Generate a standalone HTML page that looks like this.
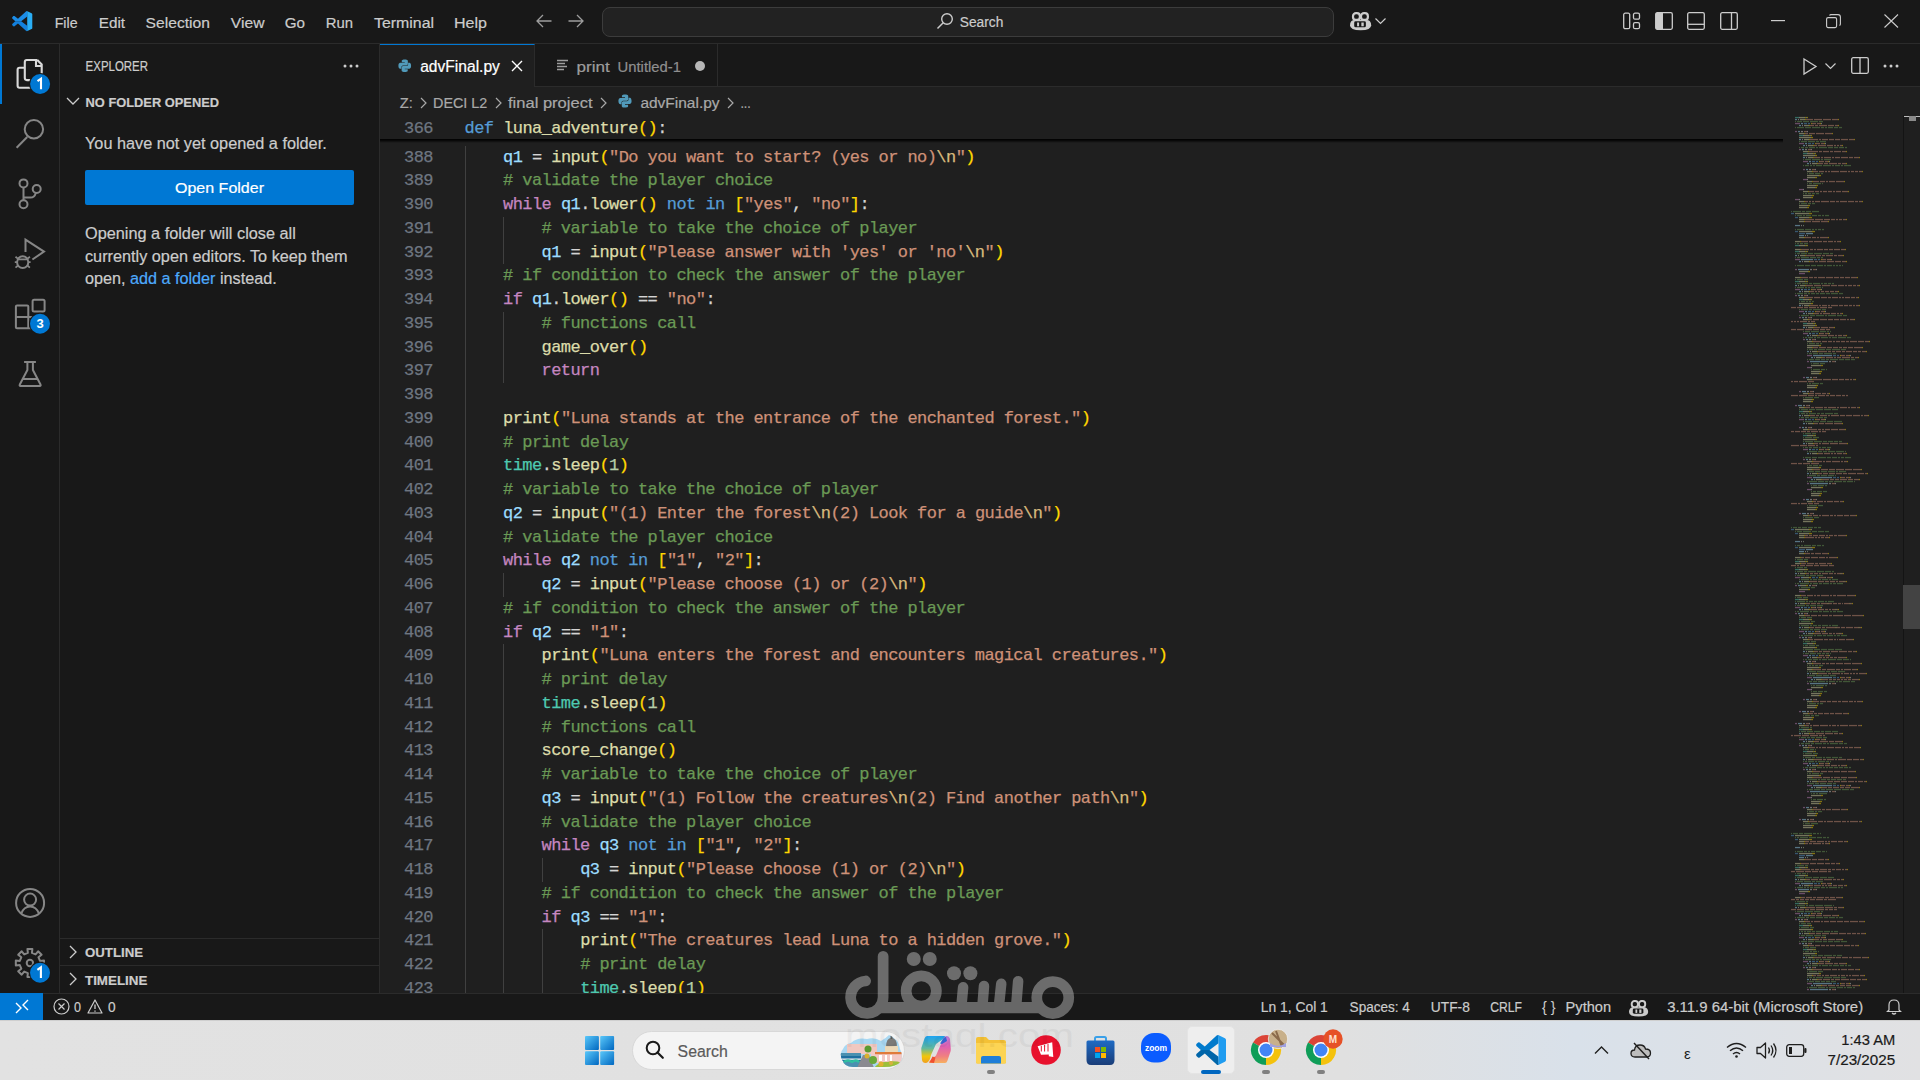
<!DOCTYPE html>
<html><head><meta charset="utf-8"><style>
*{margin:0;padding:0;box-sizing:border-box}
html,body{width:1920px;height:1080px;overflow:hidden;background:#181818;font-family:"Liberation Sans",sans-serif;color:#cccccc}
.a{position:absolute}
svg{position:absolute;overflow:visible}
#title{position:absolute;left:0;top:0;width:1920px;height:44px;background:#181818;border-bottom:1px solid #2b2b2b}
.menu{position:absolute;top:11px;font-size:16px;line-height:22px;color:#cccccc;white-space:nowrap}
#search{position:absolute;left:602px;top:7px;width:732px;height:30px;border:1px solid #3c3c3c;border-radius:8px;background:#222222}
#act{position:absolute;left:0;top:44px;width:60px;height:949px;background:#181818;border-right:1px solid #2b2b2b}
#side{position:absolute;left:60px;top:44px;width:320px;height:949px;background:#181818;border-right:1px solid #2b2b2b}
.badge{position:absolute;width:20px;height:20px;border-radius:10px;background:#0078d4;color:#fff;font-size:12px;font-weight:bold;line-height:20px;text-align:center}
#tabs{position:absolute;left:380px;top:44px;width:1540px;height:43px;background:#181818;border-bottom:1px solid #2b2b2b}
#crumbs{position:absolute;left:380px;top:87px;width:1540px;height:28px;background:#1f1f1f}
#editor{position:absolute;left:380px;top:115px;width:1540px;height:878px;background:#1f1f1f;overflow:hidden}
#editor .ln, #sticky .ln{position:absolute;left:0;width:53px;text-align:right;color:#6e7681;font-family:"Liberation Mono",monospace;font-size:17px;line-height:23.75px;height:23.75px;white-space:pre;letter-spacing:-0.575px;-webkit-text-stroke:0.25px currentColor}
#editor .cl, #sticky .cl{position:absolute;left:84.6px;font-family:"Liberation Mono",monospace;font-size:17px;line-height:23.75px;height:23.75px;white-space:pre;letter-spacing:-0.575px;-webkit-text-stroke:0.25px currentColor}
.ig{position:absolute;width:1px;background:#404040}
#sticky{position:absolute;left:380px;top:115px;width:1403px;height:24px;background:#1f1f1f}
#stsh{position:absolute;left:380px;top:139px;width:1403px;height:4px;background:linear-gradient(#000 0%,rgba(0,0,0,0.75) 35%,rgba(0,0,0,0) 100%)}
#status{position:absolute;left:0;top:993px;width:1920px;height:27px;background:#181818;border-top:1px solid #2b2b2b;font-size:14.5px;color:#cccccc}
#status .t{position:absolute;top:4px;line-height:19px;white-space:nowrap}
#taskbar{position:absolute;left:0;top:1020px;width:1920px;height:60px;background:linear-gradient(90deg,#e2e2e2 0%,#e0e0e0 70%,#d9e1ea 82%,#e1e1e3 100%)}
</style></head>
<body>
<div id="title"><svg width="20.3" height="20.3" style="left:11.9px;top:10.7px" viewBox="0 0 100 100">
<path d="M16.24 50 L1.35 63.58 Q-0.5 66.5 1.35 69.74 L6.85 74.74 Q9.5 76.8 12.17 75 L29.34 61.96 L68.75 97.92 Q72 100.5 75.86 99.13 L75 72.7 L45.1 50 Z" fill="#1380dc"/>
<path d="M75.86 0.87 Q72 -0.5 68.75 2.08 L29.34 38.04 L12.17 25.01 Q9.5 23.2 6.85 25.25 L1.35 30.25 Q-0.5 33.5 1.35 36.41 L16.24 50 L45.1 50 L75 27.3 Z" fill="#1b8de8"/>
<path d="M75.86 0.87 L96.46 10.8 Q100 12.5 100 16.4 V83.6 Q100 87.5 96.46 89.2 L75.86 99.13 Q75 99.5 75 97 V3 Q75 0.5 75.86 0.87 Z" fill="#2aaef5"/>
</svg><svg width="16" height="14" style="left:536px;top:14px" viewBox="0 0 16 14"><path d="M7 1 L1 7 L7 13 M1 7 H15.5" stroke="#9d9d9d" stroke-width="1.3" fill="none"/></svg>
<svg width="16" height="14" style="left:568px;top:14px" viewBox="0 0 16 14"><path d="M9 1 L15 7 L9 13 M15 7 H0.5" stroke="#9d9d9d" stroke-width="1.3" fill="none"/></svg><div id="search"></div><svg width="18" height="18" style="left:936px;top:12px" viewBox="0 0 18 18"><circle cx="11" cy="7" r="5.3" stroke="#cccccc" stroke-width="1.4" fill="none"/><path d="M7.2 10.8 L1.5 16.5" stroke="#cccccc" stroke-width="1.5"/></svg>
<svg width="21.2" height="18.6" style="left:1350px;top:11.5px" viewBox="0 0 21.2 18.6">
<rect x="3" y="1.2" width="6.9" height="6.7" rx="3" stroke="#cccccc" stroke-width="2.2" fill="none"/>
<rect x="11" y="1.2" width="6.9" height="6.7" rx="3" stroke="#cccccc" stroke-width="2.2" fill="none"/>
<path d="M0 13.3 Q0 8.1 5 8.1 H16.2 Q21.2 8.1 21.2 13.3 Q21.2 18.3 10.6 18.3 Q0 18.3 0 13.3 Z" fill="#cccccc"/>
<rect x="4.2" y="9.3" width="11.7" height="5.9" rx="1.5" fill="#181818"/>
<rect x="7.1" y="10.5" width="2" height="3.8" fill="#cccccc"/><rect x="11.35" y="10.5" width="2.4" height="3.8" fill="#cccccc"/></svg>
<svg width="11" height="6" style="left:1375px;top:18px" viewBox="0 0 11 6"><path d="M0.5 0.5 L5.5 5.5 L10.5 0.5" stroke="#cccccc" stroke-width="1.2" fill="none"/></svg><svg width="18" height="18" style="left:1623px;top:12px" viewBox="0 0 18 18">
<rect x="0.7" y="1.2" width="6" height="15.5" rx="1.5" stroke="#cccccc" stroke-width="1.3" fill="none"/>
<rect x="10.5" y="1.2" width="6" height="6" rx="1.5" stroke="#cccccc" stroke-width="1.3" fill="none"/>
<rect x="10.5" y="10.7" width="6" height="6" rx="1.5" stroke="#cccccc" stroke-width="1.3" fill="none"/></svg>
<svg width="18" height="18" style="left:1655px;top:12px" viewBox="0 0 18 18">
<rect x="0.7" y="0.7" width="16.6" height="16.6" rx="1.5" stroke="#cccccc" stroke-width="1.3" fill="none"/><rect x="1" y="1" width="7" height="16" fill="#cccccc"/></svg>
<svg width="18" height="18" style="left:1687px;top:12px" viewBox="0 0 18 18">
<rect x="0.7" y="0.7" width="16.6" height="16.6" rx="1.5" stroke="#cccccc" stroke-width="1.3" fill="none"/><path d="M1 12.3 H17" stroke="#cccccc" stroke-width="1.3"/></svg>
<svg width="18" height="18" style="left:1720px;top:12px" viewBox="0 0 18 18">
<rect x="0.7" y="0.7" width="16.6" height="16.6" rx="1.5" stroke="#cccccc" stroke-width="1.3" fill="none"/><path d="M11.5 1 V17" stroke="#cccccc" stroke-width="1.3"/></svg><svg width="14" height="2" style="left:1771px;top:20px"><rect width="14" height="1.2" fill="#cccccc"/></svg>
<svg width="15" height="14" style="left:1826px;top:14px" viewBox="0 0 15 14"><rect x="0.6" y="3.6" width="10" height="10" rx="1.5" stroke="#cccccc" stroke-width="1.1" fill="none"/><path d="M3.5 1.5 Q4 0.6 5 0.6 H12 Q14.4 0.6 14.4 3 V10 Q14.4 11 13.5 11.5" stroke="#cccccc" stroke-width="1.1" fill="none"/></svg>
<svg width="15" height="14" style="left:1884px;top:14px" viewBox="0 0 15 14"><path d="M0.5 0.5 L14 13.5 M14 0.5 L0.5 13.5" stroke="#cccccc" stroke-width="1.1"/></svg></div><div id="act"><div class="a" style="left:0;top:0;width:2px;height:60px;background:#0078d4"></div></div><svg width="60" height="1080" style="left:0;top:0" viewBox="0 0 60 1080" fill="none" stroke-linecap="butt"><path d="M37.3 60 H26.8 Q24.8 60 24.8 62 V78.1 Q24.8 80.1 26.8 80.1 H33 M37.3 60 L41.7 64.4 V76 M36 60 V66 H41.7 M24.8 67.8 H19.6 Q17.6 67.8 17.6 69.8 V85.7 Q17.6 87.7 19.6 87.7 H31" stroke="#d9d9d9" stroke-width="2.1"/><circle cx="40.1" cy="84" r="11" fill="#181818"/><circle cx="40.1" cy="84" r="10" fill="#0078d4"/><circle cx="33.9" cy="129.2" r="9.2" stroke="#868686" stroke-width="2"/><path d="M27.2 137 L16.6 147.7" stroke="#868686" stroke-width="2"/><circle cx="23.5" cy="183.4" r="4" stroke="#868686" stroke-width="2"/><circle cx="23.5" cy="204.2" r="4" stroke="#868686" stroke-width="2"/><circle cx="36.7" cy="189" r="4" stroke="#868686" stroke-width="2"/><path d="M23.5 187.4 V200.2 M35.8 192.9 Q34.5 197.5 30.5 197.5 H23.5" stroke="#868686" stroke-width="2"/><path d="M25.5 252 V239.7 L44 251.6 L32.4 259.5" stroke="#868686" stroke-width="2" stroke-linejoin="miter"/><ellipse cx="22.7" cy="262.2" rx="5.6" ry="5.9" stroke="#868686" stroke-width="2"/><path d="M14.8 262.2 H17 M28.4 262.2 H30.6 M15.5 256.8 L17.8 258.6 M29.9 256.8 L27.6 258.6 M15.5 267.6 L17.8 265.8 M29.9 267.6 L27.6 265.8 M17.2 259.3 H28.2" stroke="#868686" stroke-width="1.8"/><path d="M34 317 H28.3 V306.5 Q28.3 305.4 27.2 305.4 H17 Q15.9 305.4 15.9 306.5 V327.2 Q15.9 328.3 17 328.3 H33 M15.9 317 H28.3 V328.3" stroke="#868686" stroke-width="2"/><rect x="32.6" y="299.8" width="12" height="11.7" rx="1.5" stroke="#868686" stroke-width="2"/><circle cx="40" cy="323.7" r="11" fill="#181818"/><circle cx="40" cy="323.7" r="10" fill="#0078d4"/><path d="M24.1 362 H35.9 M27.4 362 V370 L19.8 384.5 Q19.2 386 20.5 386 H39.8 Q41.1 386 40.5 384.5 L32.9 370 V362 M22.8 379 H37.3" stroke="#868686" stroke-width="2" stroke-linejoin="round"/><circle cx="30.1" cy="902.9" r="14" stroke="#868686" stroke-width="2"/><circle cx="30.1" cy="899.6" r="6" stroke="#868686" stroke-width="2"/><path d="M21.3 913.5 Q24 906.5 30.1 906.5 Q36.2 906.5 38.9 913.5" stroke="#868686" stroke-width="2"/><path d="M27.42 948.92 L32.38 948.92 L31.95 952.91 L35.58 954.41 L38.10 951.29 L41.61 954.80 L38.49 957.32 L39.99 960.95 L43.98 960.52 L43.98 965.48 L39.99 965.05 L38.49 968.68 L41.61 971.20 L38.10 974.71 L35.58 971.59 L31.95 973.09 L32.38 977.08 L27.42 977.08 L27.85 973.09 L24.22 971.59 L21.70 974.71 L18.19 971.20 L21.31 968.68 L19.81 965.05 L15.82 965.48 L15.82 960.52 L19.81 960.95 L21.31 957.32 L18.19 954.80 L21.70 951.29 L24.22 954.41 L27.85 952.91 Z" stroke="#868686" stroke-width="2" stroke-linejoin="round"/><circle cx="29.9" cy="963" r="3.2" stroke="#868686" stroke-width="2"/><circle cx="40" cy="972.7" r="11" fill="#181818"/><circle cx="40" cy="972.7" r="10" fill="#0078d4"/><path d="M37.50 81.20 L41.00 78.70 V89.20" stroke="#ffffff" stroke-width="2.1" stroke-linejoin="miter"/><path d="M37.40 969.90 L40.90 967.40 V977.90" stroke="#ffffff" stroke-width="2.1" stroke-linejoin="miter"/><text x="40" y="328.3" font-family="Liberation Sans" font-size="13" font-weight="bold" fill="#ffffff" stroke="none" text-anchor="middle">3</text></svg><div id="side"><svg width="16" height="4" style="left:283px;top:20px" viewBox="0 0 16 4"><circle cx="2" cy="2" r="1.5" fill="#cccccc"/><circle cx="8" cy="2" r="1.5" fill="#cccccc"/><circle cx="14" cy="2" r="1.5" fill="#cccccc"/></svg><svg width="14" height="8" style="left:6px;top:53px" viewBox="0 0 14 8"><path d="M1 1 L7 7 L13 1" stroke="#cccccc" stroke-width="1.3" fill="none"/></svg><div class="a" style="left:25px;top:126px;width:269px;height:35px;background:#0078d4;border-radius:2px;color:#ffffff;font-size:16px;"></div><div class="a" style="left:0;top:894px;width:319px;height:1px;background:#2b2b2b"></div><div class="a" style="left:0;top:921px;width:319px;height:1px;background:#2b2b2b"></div><svg width="8" height="14" style="left:9px;top:901px" viewBox="0 0 8 14"><path d="M1 1 L7 7 L1 13" stroke="#cccccc" stroke-width="1.3" fill="none"/></svg><svg width="8" height="14" style="left:9px;top:928px" viewBox="0 0 8 14"><path d="M1 1 L7 7 L1 13" stroke="#cccccc" stroke-width="1.3" fill="none"/></svg></div><div id="tabs"><div class="a" style="left:0;top:0;width:155px;height:43px;background:#1f1f1f;border-top:1px solid #0078d4;border-right:1px solid #2b2b2b;height:44px"></div><svg width="13.5" height="13.5" style="left:18px;top:14.5px" viewBox="0 0 16 16">
<path d="M7.9 0.5 C4.3 0.5 4.5 2 4.5 2 V3.8 H8 V4.5 H3 C3 4.5 0.5 4.2 0.5 8 C0.5 11.8 2.7 11.6 2.7 11.6 H4 V9.8 C4 9.8 3.9 7.7 6.1 7.7 H9.7 C9.7 7.7 11.7 7.7 11.7 5.7 V2.4 C11.7 2.4 12 0.5 7.9 0.5 Z" fill="#519aba"/>
<path d="M8.1 15.5 C11.7 15.5 11.5 14 11.5 14 V12.2 H8 V11.5 H13 C13 11.5 15.5 11.8 15.5 8 C15.5 4.2 13.3 4.4 13.3 4.4 H12 V6.2 C12 6.2 12.1 8.3 9.9 8.3 H6.3 C6.3 8.3 4.3 8.3 4.3 10.3 V13.6 C4.3 13.6 4 15.5 8.1 15.5 Z" fill="#519aba"/>
</svg><svg width="12" height="12" style="left:131px;top:16px" viewBox="0 0 12 12"><path d="M1 1 L11 11 M11 1 L1 11" stroke="#ffffff" stroke-width="1.4"/></svg><div class="a" style="left:155px;top:0;width:183px;height:43px;border-right:1px solid #2b2b2b"></div><svg width="12" height="12" style="left:177px;top:15px" viewBox="0 0 12 12"><path d="M0 1.5 H11 M0 4.5 H8 M0 7.5 H10 M0 10.5 H7" stroke="#9d9d9d" stroke-width="1.3"/></svg><div class="a" style="left:315px;top:17px;width:10px;height:10px;border-radius:5px;background:#b7b7b7"></div><svg width="14" height="17" style="left:1423px;top:14px" viewBox="0 0 14 17"><path d="M1 1 L13 8.5 L1 16 Z" stroke="#cccccc" stroke-width="1.3" fill="none" stroke-linejoin="miter"/></svg>
<svg width="11" height="6" style="left:1445px;top:63px;top:19px" viewBox="0 0 11 6"><path d="M0.5 0.5 L5.5 5.5 L10.5 0.5" stroke="#cccccc" stroke-width="1.2" fill="none"/></svg>
<svg width="18" height="17" style="left:1471px;top:13px" viewBox="0 0 18 17"><rect x="0.7" y="0.7" width="16.6" height="15.6" rx="1.5" stroke="#cccccc" stroke-width="1.3" fill="none"/><path d="M9 1 V16" stroke="#cccccc" stroke-width="1.3"/></svg>
<svg width="16" height="4" style="left:1503px;top:20px" viewBox="0 0 16 4"><circle cx="2" cy="2" r="1.5" fill="#cccccc"/><circle cx="8" cy="2" r="1.5" fill="#cccccc"/><circle cx="14" cy="2" r="1.5" fill="#cccccc"/></svg></div><div id="crumbs"><svg width="7" height="12" style="left:39.6px;top:10px" viewBox="0 0 7 12"><path d="M1 1 L6 6 L1 11" stroke="#a9a9a9" stroke-width="1.2" fill="none"/></svg><svg width="7" height="12" style="left:114.6px;top:10px" viewBox="0 0 7 12"><path d="M1 1 L6 6 L1 11" stroke="#a9a9a9" stroke-width="1.2" fill="none"/></svg><svg width="7" height="12" style="left:219.8px;top:10px" viewBox="0 0 7 12"><path d="M1 1 L6 6 L1 11" stroke="#a9a9a9" stroke-width="1.2" fill="none"/></svg><svg width="14" height="14" style="left:238px;top:7px" viewBox="0 0 16 16">
<path d="M7.9 0.5 C4.3 0.5 4.5 2 4.5 2 V3.8 H8 V4.5 H3 C3 4.5 0.5 4.2 0.5 8 C0.5 11.8 2.7 11.6 2.7 11.6 H4 V9.8 C4 9.8 3.9 7.7 6.1 7.7 H9.7 C9.7 7.7 11.7 7.7 11.7 5.7 V2.4 C11.7 2.4 12 0.5 7.9 0.5 Z" fill="#519aba"/>
<path d="M8.1 15.5 C11.7 15.5 11.5 14 11.5 14 V12.2 H8 V11.5 H13 C13 11.5 15.5 11.8 15.5 8 C15.5 4.2 13.3 4.4 13.3 4.4 H12 V6.2 C12 6.2 12.1 8.3 9.9 8.3 H6.3 C6.3 8.3 4.3 8.3 4.3 10.3 V13.6 C4.3 13.6 4 15.5 8.1 15.5 Z" fill="#519aba"/>
</svg><svg width="7" height="12" style="left:347px;top:10px" viewBox="0 0 7 12"><path d="M1 1 L6 6 L1 11" stroke="#a9a9a9" stroke-width="1.2" fill="none"/></svg></div><div id="editor"><div class="ig" style="left:84.6px;top:30.50px;height:855.00px"></div>
<div class="ig" style="left:123.1px;top:101.75px;height:47.50px"></div>
<div class="ig" style="left:123.1px;top:196.75px;height:71.25px"></div>
<div class="ig" style="left:123.1px;top:458.00px;height:23.75px"></div>
<div class="ig" style="left:123.1px;top:529.25px;height:356.25px"></div>
<div class="ig" style="left:161.6px;top:743.00px;height:23.75px"></div>
<div class="ig" style="left:161.6px;top:814.25px;height:71.25px"></div>
<div class="ln" style="top:30.50px">388</div>
<div class="cl" style="top:30.50px"><span style="color:#d4d4d4;-webkit-text-stroke:0.25px #d4d4d4">    </span><span style="color:#9cdcfe;-webkit-text-stroke:0.25px #9cdcfe">q1</span><span style="color:#d4d4d4;-webkit-text-stroke:0.25px #d4d4d4"> = </span><span style="color:#dcdcaa;-webkit-text-stroke:0.25px #dcdcaa">input</span><span style="color:#ffd700;-webkit-text-stroke:0.25px #ffd700">(</span><span style="color:#ce9178;-webkit-text-stroke:0.25px #ce9178">"Do you want to start? (yes or no)</span><span style="color:#d7ba7d;-webkit-text-stroke:0.25px #d7ba7d">\n</span><span style="color:#ce9178;-webkit-text-stroke:0.25px #ce9178">"</span><span style="color:#ffd700;-webkit-text-stroke:0.25px #ffd700">)</span></div>
<div class="ln" style="top:54.25px">389</div>
<div class="cl" style="top:54.25px"><span style="color:#d4d4d4;-webkit-text-stroke:0.25px #d4d4d4">    </span><span style="color:#6a9955;-webkit-text-stroke:0.25px #6a9955"># validate the player choice</span></div>
<div class="ln" style="top:78.00px">390</div>
<div class="cl" style="top:78.00px"><span style="color:#d4d4d4;-webkit-text-stroke:0.25px #d4d4d4">    </span><span style="color:#c586c0;-webkit-text-stroke:0.25px #c586c0">while</span><span style="color:#d4d4d4;-webkit-text-stroke:0.25px #d4d4d4"> </span><span style="color:#9cdcfe;-webkit-text-stroke:0.25px #9cdcfe">q1</span><span style="color:#d4d4d4;-webkit-text-stroke:0.25px #d4d4d4">.</span><span style="color:#dcdcaa;-webkit-text-stroke:0.25px #dcdcaa">lower</span><span style="color:#ffd700;-webkit-text-stroke:0.25px #ffd700">(</span><span style="color:#ffd700;-webkit-text-stroke:0.25px #ffd700">)</span><span style="color:#d4d4d4;-webkit-text-stroke:0.25px #d4d4d4"> </span><span style="color:#569cd6;-webkit-text-stroke:0.25px #569cd6">not</span><span style="color:#d4d4d4;-webkit-text-stroke:0.25px #d4d4d4"> </span><span style="color:#569cd6;-webkit-text-stroke:0.25px #569cd6">in</span><span style="color:#d4d4d4;-webkit-text-stroke:0.25px #d4d4d4"> </span><span style="color:#ffd700;-webkit-text-stroke:0.25px #ffd700">[</span><span style="color:#ce9178;-webkit-text-stroke:0.25px #ce9178">"yes"</span><span style="color:#d4d4d4;-webkit-text-stroke:0.25px #d4d4d4">, </span><span style="color:#ce9178;-webkit-text-stroke:0.25px #ce9178">"no"</span><span style="color:#ffd700;-webkit-text-stroke:0.25px #ffd700">]</span><span style="color:#d4d4d4;-webkit-text-stroke:0.25px #d4d4d4">:</span></div>
<div class="ln" style="top:101.75px">391</div>
<div class="cl" style="top:101.75px"><span style="color:#d4d4d4;-webkit-text-stroke:0.25px #d4d4d4">        </span><span style="color:#6a9955;-webkit-text-stroke:0.25px #6a9955"># variable to take the choice of player</span></div>
<div class="ln" style="top:125.50px">392</div>
<div class="cl" style="top:125.50px"><span style="color:#d4d4d4;-webkit-text-stroke:0.25px #d4d4d4">        </span><span style="color:#9cdcfe;-webkit-text-stroke:0.25px #9cdcfe">q1</span><span style="color:#d4d4d4;-webkit-text-stroke:0.25px #d4d4d4"> = </span><span style="color:#dcdcaa;-webkit-text-stroke:0.25px #dcdcaa">input</span><span style="color:#ffd700;-webkit-text-stroke:0.25px #ffd700">(</span><span style="color:#ce9178;-webkit-text-stroke:0.25px #ce9178">"Please answer with 'yes' or 'no'</span><span style="color:#d7ba7d;-webkit-text-stroke:0.25px #d7ba7d">\n</span><span style="color:#ce9178;-webkit-text-stroke:0.25px #ce9178">"</span><span style="color:#ffd700;-webkit-text-stroke:0.25px #ffd700">)</span></div>
<div class="ln" style="top:149.25px">393</div>
<div class="cl" style="top:149.25px"><span style="color:#d4d4d4;-webkit-text-stroke:0.25px #d4d4d4">    </span><span style="color:#6a9955;-webkit-text-stroke:0.25px #6a9955"># if condition to check the answer of the player</span></div>
<div class="ln" style="top:173.00px">394</div>
<div class="cl" style="top:173.00px"><span style="color:#d4d4d4;-webkit-text-stroke:0.25px #d4d4d4">    </span><span style="color:#c586c0;-webkit-text-stroke:0.25px #c586c0">if</span><span style="color:#d4d4d4;-webkit-text-stroke:0.25px #d4d4d4"> </span><span style="color:#9cdcfe;-webkit-text-stroke:0.25px #9cdcfe">q1</span><span style="color:#d4d4d4;-webkit-text-stroke:0.25px #d4d4d4">.</span><span style="color:#dcdcaa;-webkit-text-stroke:0.25px #dcdcaa">lower</span><span style="color:#ffd700;-webkit-text-stroke:0.25px #ffd700">(</span><span style="color:#ffd700;-webkit-text-stroke:0.25px #ffd700">)</span><span style="color:#d4d4d4;-webkit-text-stroke:0.25px #d4d4d4"> == </span><span style="color:#ce9178;-webkit-text-stroke:0.25px #ce9178">"no"</span><span style="color:#d4d4d4;-webkit-text-stroke:0.25px #d4d4d4">:</span></div>
<div class="ln" style="top:196.75px">395</div>
<div class="cl" style="top:196.75px"><span style="color:#d4d4d4;-webkit-text-stroke:0.25px #d4d4d4">        </span><span style="color:#6a9955;-webkit-text-stroke:0.25px #6a9955"># functions call</span></div>
<div class="ln" style="top:220.50px">396</div>
<div class="cl" style="top:220.50px"><span style="color:#d4d4d4;-webkit-text-stroke:0.25px #d4d4d4">        </span><span style="color:#dcdcaa;-webkit-text-stroke:0.25px #dcdcaa">game_over</span><span style="color:#ffd700;-webkit-text-stroke:0.25px #ffd700">(</span><span style="color:#ffd700;-webkit-text-stroke:0.25px #ffd700">)</span></div>
<div class="ln" style="top:244.25px">397</div>
<div class="cl" style="top:244.25px"><span style="color:#d4d4d4;-webkit-text-stroke:0.25px #d4d4d4">        </span><span style="color:#c586c0;-webkit-text-stroke:0.25px #c586c0">return</span></div>
<div class="ln" style="top:268.00px">398</div>
<div class="cl" style="top:268.00px"></div>
<div class="ln" style="top:291.75px">399</div>
<div class="cl" style="top:291.75px"><span style="color:#d4d4d4;-webkit-text-stroke:0.25px #d4d4d4">    </span><span style="color:#dcdcaa;-webkit-text-stroke:0.25px #dcdcaa">print</span><span style="color:#ffd700;-webkit-text-stroke:0.25px #ffd700">(</span><span style="color:#ce9178;-webkit-text-stroke:0.25px #ce9178">"Luna stands at the entrance of the enchanted forest."</span><span style="color:#ffd700;-webkit-text-stroke:0.25px #ffd700">)</span></div>
<div class="ln" style="top:315.50px">400</div>
<div class="cl" style="top:315.50px"><span style="color:#d4d4d4;-webkit-text-stroke:0.25px #d4d4d4">    </span><span style="color:#6a9955;-webkit-text-stroke:0.25px #6a9955"># print delay</span></div>
<div class="ln" style="top:339.25px">401</div>
<div class="cl" style="top:339.25px"><span style="color:#d4d4d4;-webkit-text-stroke:0.25px #d4d4d4">    </span><span style="color:#4ec9b0;-webkit-text-stroke:0.25px #4ec9b0">time</span><span style="color:#d4d4d4;-webkit-text-stroke:0.25px #d4d4d4">.</span><span style="color:#dcdcaa;-webkit-text-stroke:0.25px #dcdcaa">sleep</span><span style="color:#ffd700;-webkit-text-stroke:0.25px #ffd700">(</span><span style="color:#b5cea8;-webkit-text-stroke:0.25px #b5cea8">1</span><span style="color:#ffd700;-webkit-text-stroke:0.25px #ffd700">)</span></div>
<div class="ln" style="top:363.00px">402</div>
<div class="cl" style="top:363.00px"><span style="color:#d4d4d4;-webkit-text-stroke:0.25px #d4d4d4">    </span><span style="color:#6a9955;-webkit-text-stroke:0.25px #6a9955"># variable to take the choice of player</span></div>
<div class="ln" style="top:386.75px">403</div>
<div class="cl" style="top:386.75px"><span style="color:#d4d4d4;-webkit-text-stroke:0.25px #d4d4d4">    </span><span style="color:#9cdcfe;-webkit-text-stroke:0.25px #9cdcfe">q2</span><span style="color:#d4d4d4;-webkit-text-stroke:0.25px #d4d4d4"> = </span><span style="color:#dcdcaa;-webkit-text-stroke:0.25px #dcdcaa">input</span><span style="color:#ffd700;-webkit-text-stroke:0.25px #ffd700">(</span><span style="color:#ce9178;-webkit-text-stroke:0.25px #ce9178">"(1) Enter the forest</span><span style="color:#d7ba7d;-webkit-text-stroke:0.25px #d7ba7d">\n</span><span style="color:#ce9178;-webkit-text-stroke:0.25px #ce9178">(2) Look for a guide</span><span style="color:#d7ba7d;-webkit-text-stroke:0.25px #d7ba7d">\n</span><span style="color:#ce9178;-webkit-text-stroke:0.25px #ce9178">"</span><span style="color:#ffd700;-webkit-text-stroke:0.25px #ffd700">)</span></div>
<div class="ln" style="top:410.50px">404</div>
<div class="cl" style="top:410.50px"><span style="color:#d4d4d4;-webkit-text-stroke:0.25px #d4d4d4">    </span><span style="color:#6a9955;-webkit-text-stroke:0.25px #6a9955"># validate the player choice</span></div>
<div class="ln" style="top:434.25px">405</div>
<div class="cl" style="top:434.25px"><span style="color:#d4d4d4;-webkit-text-stroke:0.25px #d4d4d4">    </span><span style="color:#c586c0;-webkit-text-stroke:0.25px #c586c0">while</span><span style="color:#d4d4d4;-webkit-text-stroke:0.25px #d4d4d4"> </span><span style="color:#9cdcfe;-webkit-text-stroke:0.25px #9cdcfe">q2</span><span style="color:#d4d4d4;-webkit-text-stroke:0.25px #d4d4d4"> </span><span style="color:#569cd6;-webkit-text-stroke:0.25px #569cd6">not</span><span style="color:#d4d4d4;-webkit-text-stroke:0.25px #d4d4d4"> </span><span style="color:#569cd6;-webkit-text-stroke:0.25px #569cd6">in</span><span style="color:#d4d4d4;-webkit-text-stroke:0.25px #d4d4d4"> </span><span style="color:#ffd700;-webkit-text-stroke:0.25px #ffd700">[</span><span style="color:#ce9178;-webkit-text-stroke:0.25px #ce9178">"1"</span><span style="color:#d4d4d4;-webkit-text-stroke:0.25px #d4d4d4">, </span><span style="color:#ce9178;-webkit-text-stroke:0.25px #ce9178">"2"</span><span style="color:#ffd700;-webkit-text-stroke:0.25px #ffd700">]</span><span style="color:#d4d4d4;-webkit-text-stroke:0.25px #d4d4d4">:</span></div>
<div class="ln" style="top:458.00px">406</div>
<div class="cl" style="top:458.00px"><span style="color:#d4d4d4;-webkit-text-stroke:0.25px #d4d4d4">        </span><span style="color:#9cdcfe;-webkit-text-stroke:0.25px #9cdcfe">q2</span><span style="color:#d4d4d4;-webkit-text-stroke:0.25px #d4d4d4"> = </span><span style="color:#dcdcaa;-webkit-text-stroke:0.25px #dcdcaa">input</span><span style="color:#ffd700;-webkit-text-stroke:0.25px #ffd700">(</span><span style="color:#ce9178;-webkit-text-stroke:0.25px #ce9178">"Please choose (1) or (2)</span><span style="color:#d7ba7d;-webkit-text-stroke:0.25px #d7ba7d">\n</span><span style="color:#ce9178;-webkit-text-stroke:0.25px #ce9178">"</span><span style="color:#ffd700;-webkit-text-stroke:0.25px #ffd700">)</span></div>
<div class="ln" style="top:481.75px">407</div>
<div class="cl" style="top:481.75px"><span style="color:#d4d4d4;-webkit-text-stroke:0.25px #d4d4d4">    </span><span style="color:#6a9955;-webkit-text-stroke:0.25px #6a9955"># if condition to check the answer of the player</span></div>
<div class="ln" style="top:505.50px">408</div>
<div class="cl" style="top:505.50px"><span style="color:#d4d4d4;-webkit-text-stroke:0.25px #d4d4d4">    </span><span style="color:#c586c0;-webkit-text-stroke:0.25px #c586c0">if</span><span style="color:#d4d4d4;-webkit-text-stroke:0.25px #d4d4d4"> </span><span style="color:#9cdcfe;-webkit-text-stroke:0.25px #9cdcfe">q2</span><span style="color:#d4d4d4;-webkit-text-stroke:0.25px #d4d4d4"> == </span><span style="color:#ce9178;-webkit-text-stroke:0.25px #ce9178">"1"</span><span style="color:#d4d4d4;-webkit-text-stroke:0.25px #d4d4d4">:</span></div>
<div class="ln" style="top:529.25px">409</div>
<div class="cl" style="top:529.25px"><span style="color:#d4d4d4;-webkit-text-stroke:0.25px #d4d4d4">        </span><span style="color:#dcdcaa;-webkit-text-stroke:0.25px #dcdcaa">print</span><span style="color:#ffd700;-webkit-text-stroke:0.25px #ffd700">(</span><span style="color:#ce9178;-webkit-text-stroke:0.25px #ce9178">"Luna enters the forest and encounters magical creatures."</span><span style="color:#ffd700;-webkit-text-stroke:0.25px #ffd700">)</span></div>
<div class="ln" style="top:553.00px">410</div>
<div class="cl" style="top:553.00px"><span style="color:#d4d4d4;-webkit-text-stroke:0.25px #d4d4d4">        </span><span style="color:#6a9955;-webkit-text-stroke:0.25px #6a9955"># print delay</span></div>
<div class="ln" style="top:576.75px">411</div>
<div class="cl" style="top:576.75px"><span style="color:#d4d4d4;-webkit-text-stroke:0.25px #d4d4d4">        </span><span style="color:#4ec9b0;-webkit-text-stroke:0.25px #4ec9b0">time</span><span style="color:#d4d4d4;-webkit-text-stroke:0.25px #d4d4d4">.</span><span style="color:#dcdcaa;-webkit-text-stroke:0.25px #dcdcaa">sleep</span><span style="color:#ffd700;-webkit-text-stroke:0.25px #ffd700">(</span><span style="color:#b5cea8;-webkit-text-stroke:0.25px #b5cea8">1</span><span style="color:#ffd700;-webkit-text-stroke:0.25px #ffd700">)</span></div>
<div class="ln" style="top:600.50px">412</div>
<div class="cl" style="top:600.50px"><span style="color:#d4d4d4;-webkit-text-stroke:0.25px #d4d4d4">        </span><span style="color:#6a9955;-webkit-text-stroke:0.25px #6a9955"># functions call</span></div>
<div class="ln" style="top:624.25px">413</div>
<div class="cl" style="top:624.25px"><span style="color:#d4d4d4;-webkit-text-stroke:0.25px #d4d4d4">        </span><span style="color:#dcdcaa;-webkit-text-stroke:0.25px #dcdcaa">score_change</span><span style="color:#ffd700;-webkit-text-stroke:0.25px #ffd700">(</span><span style="color:#ffd700;-webkit-text-stroke:0.25px #ffd700">)</span></div>
<div class="ln" style="top:648.00px">414</div>
<div class="cl" style="top:648.00px"><span style="color:#d4d4d4;-webkit-text-stroke:0.25px #d4d4d4">        </span><span style="color:#6a9955;-webkit-text-stroke:0.25px #6a9955"># variable to take the choice of player</span></div>
<div class="ln" style="top:671.75px">415</div>
<div class="cl" style="top:671.75px"><span style="color:#d4d4d4;-webkit-text-stroke:0.25px #d4d4d4">        </span><span style="color:#9cdcfe;-webkit-text-stroke:0.25px #9cdcfe">q3</span><span style="color:#d4d4d4;-webkit-text-stroke:0.25px #d4d4d4"> = </span><span style="color:#dcdcaa;-webkit-text-stroke:0.25px #dcdcaa">input</span><span style="color:#ffd700;-webkit-text-stroke:0.25px #ffd700">(</span><span style="color:#ce9178;-webkit-text-stroke:0.25px #ce9178">"(1) Follow the creatures</span><span style="color:#d7ba7d;-webkit-text-stroke:0.25px #d7ba7d">\n</span><span style="color:#ce9178;-webkit-text-stroke:0.25px #ce9178">(2) Find another path</span><span style="color:#d7ba7d;-webkit-text-stroke:0.25px #d7ba7d">\n</span><span style="color:#ce9178;-webkit-text-stroke:0.25px #ce9178">"</span><span style="color:#ffd700;-webkit-text-stroke:0.25px #ffd700">)</span></div>
<div class="ln" style="top:695.50px">416</div>
<div class="cl" style="top:695.50px"><span style="color:#d4d4d4;-webkit-text-stroke:0.25px #d4d4d4">        </span><span style="color:#6a9955;-webkit-text-stroke:0.25px #6a9955"># validate the player choice</span></div>
<div class="ln" style="top:719.25px">417</div>
<div class="cl" style="top:719.25px"><span style="color:#d4d4d4;-webkit-text-stroke:0.25px #d4d4d4">        </span><span style="color:#c586c0;-webkit-text-stroke:0.25px #c586c0">while</span><span style="color:#d4d4d4;-webkit-text-stroke:0.25px #d4d4d4"> </span><span style="color:#9cdcfe;-webkit-text-stroke:0.25px #9cdcfe">q3</span><span style="color:#d4d4d4;-webkit-text-stroke:0.25px #d4d4d4"> </span><span style="color:#569cd6;-webkit-text-stroke:0.25px #569cd6">not</span><span style="color:#d4d4d4;-webkit-text-stroke:0.25px #d4d4d4"> </span><span style="color:#569cd6;-webkit-text-stroke:0.25px #569cd6">in</span><span style="color:#d4d4d4;-webkit-text-stroke:0.25px #d4d4d4"> </span><span style="color:#ffd700;-webkit-text-stroke:0.25px #ffd700">[</span><span style="color:#ce9178;-webkit-text-stroke:0.25px #ce9178">"1"</span><span style="color:#d4d4d4;-webkit-text-stroke:0.25px #d4d4d4">, </span><span style="color:#ce9178;-webkit-text-stroke:0.25px #ce9178">"2"</span><span style="color:#ffd700;-webkit-text-stroke:0.25px #ffd700">]</span><span style="color:#d4d4d4;-webkit-text-stroke:0.25px #d4d4d4">:</span></div>
<div class="ln" style="top:743.00px">418</div>
<div class="cl" style="top:743.00px"><span style="color:#d4d4d4;-webkit-text-stroke:0.25px #d4d4d4">            </span><span style="color:#9cdcfe;-webkit-text-stroke:0.25px #9cdcfe">q3</span><span style="color:#d4d4d4;-webkit-text-stroke:0.25px #d4d4d4"> = </span><span style="color:#dcdcaa;-webkit-text-stroke:0.25px #dcdcaa">input</span><span style="color:#ffd700;-webkit-text-stroke:0.25px #ffd700">(</span><span style="color:#ce9178;-webkit-text-stroke:0.25px #ce9178">"Please choose (1) or (2)</span><span style="color:#d7ba7d;-webkit-text-stroke:0.25px #d7ba7d">\n</span><span style="color:#ce9178;-webkit-text-stroke:0.25px #ce9178">"</span><span style="color:#ffd700;-webkit-text-stroke:0.25px #ffd700">)</span></div>
<div class="ln" style="top:766.75px">419</div>
<div class="cl" style="top:766.75px"><span style="color:#d4d4d4;-webkit-text-stroke:0.25px #d4d4d4">        </span><span style="color:#6a9955;-webkit-text-stroke:0.25px #6a9955"># if condition to check the answer of the player</span></div>
<div class="ln" style="top:790.50px">420</div>
<div class="cl" style="top:790.50px"><span style="color:#d4d4d4;-webkit-text-stroke:0.25px #d4d4d4">        </span><span style="color:#c586c0;-webkit-text-stroke:0.25px #c586c0">if</span><span style="color:#d4d4d4;-webkit-text-stroke:0.25px #d4d4d4"> </span><span style="color:#9cdcfe;-webkit-text-stroke:0.25px #9cdcfe">q3</span><span style="color:#d4d4d4;-webkit-text-stroke:0.25px #d4d4d4"> == </span><span style="color:#ce9178;-webkit-text-stroke:0.25px #ce9178">"1"</span><span style="color:#d4d4d4;-webkit-text-stroke:0.25px #d4d4d4">:</span></div>
<div class="ln" style="top:814.25px">421</div>
<div class="cl" style="top:814.25px"><span style="color:#d4d4d4;-webkit-text-stroke:0.25px #d4d4d4">            </span><span style="color:#dcdcaa;-webkit-text-stroke:0.25px #dcdcaa">print</span><span style="color:#ffd700;-webkit-text-stroke:0.25px #ffd700">(</span><span style="color:#ce9178;-webkit-text-stroke:0.25px #ce9178">"The creatures lead Luna to a hidden grove."</span><span style="color:#ffd700;-webkit-text-stroke:0.25px #ffd700">)</span></div>
<div class="ln" style="top:838.00px">422</div>
<div class="cl" style="top:838.00px"><span style="color:#d4d4d4;-webkit-text-stroke:0.25px #d4d4d4">            </span><span style="color:#6a9955;-webkit-text-stroke:0.25px #6a9955"># print delay</span></div>
<div class="ln" style="top:861.75px">423</div>
<div class="cl" style="top:861.75px"><span style="color:#d4d4d4;-webkit-text-stroke:0.25px #d4d4d4">            </span><span style="color:#4ec9b0;-webkit-text-stroke:0.25px #4ec9b0">time</span><span style="color:#d4d4d4;-webkit-text-stroke:0.25px #d4d4d4">.</span><span style="color:#dcdcaa;-webkit-text-stroke:0.25px #dcdcaa">sleep</span><span style="color:#ffd700;-webkit-text-stroke:0.25px #ffd700">(</span><span style="color:#b5cea8;-webkit-text-stroke:0.25px #b5cea8">1</span><span style="color:#ffd700;-webkit-text-stroke:0.25px #ffd700">)</span></div></div><div id="stsh"></div><div id="sticky"><div class="ln" style="top:1.5px">366</div><div class="cl" style="top:1.5px"><span style="color:#569cd6;-webkit-text-stroke:0.25px #569cd6">def</span><span style="color:#d4d4d4;-webkit-text-stroke:0.25px #d4d4d4"> </span><span style="color:#dcdcaa;-webkit-text-stroke:0.25px #dcdcaa">luna_adventure</span><span style="color:#ffd700;-webkit-text-stroke:0.25px #ffd700">(</span><span style="color:#ffd700;-webkit-text-stroke:0.25px #ffd700">)</span><span style="color:#d4d4d4;-webkit-text-stroke:0.25px #d4d4d4">:</span></div></div><svg class="mm" width="1920" height="1080" style="left:0;top:0" viewBox="0 0 1920 1080"><g opacity="0.45"><rect x="1795" y="116.9" width="4" height="1.3" fill="#4ec9b0"/><rect x="1799" y="116.9" width="1" height="1.3" fill="#d4d4d4"/><rect x="1800" y="116.9" width="5" height="1.3" fill="#dcdcaa"/><rect x="1805" y="116.9" width="1" height="1.3" fill="#ffd700"/><rect x="1806" y="116.9" width="1" height="1.3" fill="#b5cea8"/><rect x="1807" y="116.9" width="1" height="1.3" fill="#ffd700"/><rect x="1795" y="118.9" width="2" height="1.3" fill="#9cdcfe"/><rect x="1798" y="118.9" width="1" height="1.3" fill="#d4d4d4"/><rect x="1800" y="118.9" width="5" height="1.3" fill="#dcdcaa"/><rect x="1805" y="118.9" width="1" height="1.3" fill="#ffd700"/><rect x="1806" y="118.9" width="7" height="1.3" fill="#ce9178"/><rect x="1814" y="118.9" width="8" height="1.3" fill="#ce9178"/><rect x="1823" y="118.9" width="8" height="1.3" fill="#ce9178"/><rect x="1832" y="118.9" width="6" height="1.3" fill="#ce9178"/><rect x="1838" y="118.9" width="1" height="1.3" fill="#ffd700"/><rect x="1795" y="120.9" width="1" height="1.3" fill="#6a9955"/><rect x="1797" y="120.9" width="5" height="1.3" fill="#6a9955"/><rect x="1803" y="120.9" width="6" height="1.3" fill="#6a9955"/><rect x="1810" y="120.9" width="8" height="1.3" fill="#6a9955"/><rect x="1819" y="120.9" width="4" height="1.3" fill="#6a9955"/><rect x="1795" y="122.9" width="5" height="1.3" fill="#c586c0"/><rect x="1801" y="122.9" width="2" height="1.3" fill="#9cdcfe"/><rect x="1804" y="122.9" width="3" height="1.3" fill="#569cd6"/><rect x="1808" y="122.9" width="2" height="1.3" fill="#569cd6"/><rect x="1811" y="122.9" width="1" height="1.3" fill="#ffd700"/><rect x="1812" y="122.9" width="4" height="1.3" fill="#ce9178"/><rect x="1817" y="122.9" width="3" height="1.3" fill="#ce9178"/><rect x="1820" y="122.9" width="1" height="1.3" fill="#ffd700"/><rect x="1821" y="122.9" width="1" height="1.3" fill="#d4d4d4"/><rect x="1799" y="124.9" width="2" height="1.3" fill="#9cdcfe"/><rect x="1802" y="124.9" width="1" height="1.3" fill="#d4d4d4"/><rect x="1804" y="124.9" width="5" height="1.3" fill="#dcdcaa"/><rect x="1809" y="124.9" width="1" height="1.3" fill="#ffd700"/><rect x="1810" y="124.9" width="4" height="1.3" fill="#ce9178"/><rect x="1815" y="124.9" width="3" height="1.3" fill="#ce9178"/><rect x="1819" y="124.9" width="8" height="1.3" fill="#ce9178"/><rect x="1828" y="124.9" width="6" height="1.3" fill="#ce9178"/><rect x="1835" y="124.9" width="3" height="1.3" fill="#ce9178"/><rect x="1838" y="124.9" width="1" height="1.3" fill="#ffd700"/><rect x="1795" y="126.9" width="1" height="1.3" fill="#6a9955"/><rect x="1797" y="126.9" width="7" height="1.3" fill="#6a9955"/><rect x="1805" y="126.9" width="6" height="1.3" fill="#6a9955"/><rect x="1812" y="126.9" width="8" height="1.3" fill="#6a9955"/><rect x="1821" y="126.9" width="3" height="1.3" fill="#6a9955"/><rect x="1825" y="126.9" width="2" height="1.3" fill="#6a9955"/><rect x="1828" y="126.9" width="5" height="1.3" fill="#6a9955"/><rect x="1834" y="126.9" width="4" height="1.3" fill="#6a9955"/><rect x="1839" y="126.9" width="3" height="1.3" fill="#6a9955"/><rect x="1795" y="130.9" width="2" height="1.3" fill="#c586c0"/><rect x="1798" y="130.9" width="2" height="1.3" fill="#9cdcfe"/><rect x="1801" y="130.9" width="2" height="1.3" fill="#d4d4d4"/><rect x="1804" y="130.9" width="3" height="1.3" fill="#ce9178"/><rect x="1807" y="130.9" width="1" height="1.3" fill="#d4d4d4"/><rect x="1799" y="132.9" width="5" height="1.3" fill="#dcdcaa"/><rect x="1804" y="132.9" width="1" height="1.3" fill="#ffd700"/><rect x="1805" y="132.9" width="3" height="1.3" fill="#ce9178"/><rect x="1809" y="132.9" width="6" height="1.3" fill="#ce9178"/><rect x="1816" y="132.9" width="8" height="1.3" fill="#ce9178"/><rect x="1825" y="132.9" width="7" height="1.3" fill="#ce9178"/><rect x="1832" y="132.9" width="1" height="1.3" fill="#ffd700"/><rect x="1799" y="134.9" width="4" height="1.3" fill="#4ec9b0"/><rect x="1803" y="134.9" width="1" height="1.3" fill="#d4d4d4"/><rect x="1804" y="134.9" width="5" height="1.3" fill="#dcdcaa"/><rect x="1809" y="134.9" width="1" height="1.3" fill="#ffd700"/><rect x="1810" y="134.9" width="1" height="1.3" fill="#b5cea8"/><rect x="1811" y="134.9" width="1" height="1.3" fill="#ffd700"/><rect x="1799" y="136.9" width="12" height="1.3" fill="#dcdcaa"/><rect x="1811" y="136.9" width="2" height="1.3" fill="#ffd700"/><rect x="1799" y="138.9" width="2" height="1.3" fill="#9cdcfe"/><rect x="1802" y="138.9" width="1" height="1.3" fill="#d4d4d4"/><rect x="1804" y="138.9" width="5" height="1.3" fill="#dcdcaa"/><rect x="1809" y="138.9" width="1" height="1.3" fill="#ffd700"/><rect x="1810" y="138.9" width="8" height="1.3" fill="#ce9178"/><rect x="1819" y="138.9" width="2" height="1.3" fill="#ce9178"/><rect x="1822" y="138.9" width="6" height="1.3" fill="#ce9178"/><rect x="1829" y="138.9" width="5" height="1.3" fill="#ce9178"/><rect x="1835" y="138.9" width="5" height="1.3" fill="#ce9178"/><rect x="1841" y="138.9" width="7" height="1.3" fill="#ce9178"/><rect x="1849" y="138.9" width="5" height="1.3" fill="#ce9178"/><rect x="1854" y="138.9" width="1" height="1.3" fill="#ffd700"/><rect x="1799" y="140.9" width="1" height="1.3" fill="#6a9955"/><rect x="1801" y="140.9" width="6" height="1.3" fill="#6a9955"/><rect x="1808" y="140.9" width="7" height="1.3" fill="#6a9955"/><rect x="1816" y="140.9" width="3" height="1.3" fill="#6a9955"/><rect x="1820" y="140.9" width="6" height="1.3" fill="#6a9955"/><rect x="1799" y="142.9" width="5" height="1.3" fill="#c586c0"/><rect x="1805" y="142.9" width="2" height="1.3" fill="#9cdcfe"/><rect x="1808" y="142.9" width="3" height="1.3" fill="#569cd6"/><rect x="1812" y="142.9" width="2" height="1.3" fill="#569cd6"/><rect x="1815" y="142.9" width="1" height="1.3" fill="#ffd700"/><rect x="1816" y="142.9" width="4" height="1.3" fill="#ce9178"/><rect x="1821" y="142.9" width="3" height="1.3" fill="#ce9178"/><rect x="1824" y="142.9" width="1" height="1.3" fill="#ffd700"/><rect x="1825" y="142.9" width="1" height="1.3" fill="#d4d4d4"/><rect x="1803" y="144.9" width="2" height="1.3" fill="#9cdcfe"/><rect x="1806" y="144.9" width="1" height="1.3" fill="#d4d4d4"/><rect x="1808" y="144.9" width="5" height="1.3" fill="#dcdcaa"/><rect x="1813" y="144.9" width="1" height="1.3" fill="#ffd700"/><rect x="1814" y="144.9" width="3" height="1.3" fill="#ce9178"/><rect x="1818" y="144.9" width="8" height="1.3" fill="#ce9178"/><rect x="1827" y="144.9" width="6" height="1.3" fill="#ce9178"/><rect x="1834" y="144.9" width="2" height="1.3" fill="#ce9178"/><rect x="1837" y="144.9" width="2" height="1.3" fill="#ce9178"/><rect x="1840" y="144.9" width="2" height="1.3" fill="#ce9178"/><rect x="1842" y="144.9" width="1" height="1.3" fill="#ffd700"/><rect x="1799" y="146.9" width="1" height="1.3" fill="#6a9955"/><rect x="1801" y="146.9" width="3" height="1.3" fill="#6a9955"/><rect x="1805" y="146.9" width="3" height="1.3" fill="#6a9955"/><rect x="1809" y="146.9" width="6" height="1.3" fill="#6a9955"/><rect x="1816" y="146.9" width="2" height="1.3" fill="#6a9955"/><rect x="1819" y="146.9" width="8" height="1.3" fill="#6a9955"/><rect x="1828" y="146.9" width="5" height="1.3" fill="#6a9955"/><rect x="1834" y="146.9" width="4" height="1.3" fill="#6a9955"/><rect x="1839" y="146.9" width="5" height="1.3" fill="#6a9955"/><rect x="1845" y="146.9" width="2" height="1.3" fill="#6a9955"/><rect x="1799" y="148.9" width="2" height="1.3" fill="#c586c0"/><rect x="1802" y="148.9" width="2" height="1.3" fill="#9cdcfe"/><rect x="1805" y="148.9" width="2" height="1.3" fill="#d4d4d4"/><rect x="1808" y="148.9" width="3" height="1.3" fill="#ce9178"/><rect x="1811" y="148.9" width="1" height="1.3" fill="#d4d4d4"/><rect x="1803" y="150.9" width="5" height="1.3" fill="#dcdcaa"/><rect x="1808" y="150.9" width="1" height="1.3" fill="#ffd700"/><rect x="1809" y="150.9" width="9" height="1.3" fill="#ce9178"/><rect x="1819" y="150.9" width="3" height="1.3" fill="#ce9178"/><rect x="1823" y="150.9" width="6" height="1.3" fill="#ce9178"/><rect x="1830" y="150.9" width="3" height="1.3" fill="#ce9178"/><rect x="1834" y="150.9" width="7" height="1.3" fill="#ce9178"/><rect x="1842" y="150.9" width="4" height="1.3" fill="#ce9178"/><rect x="1846" y="150.9" width="1" height="1.3" fill="#ffd700"/><rect x="1803" y="152.9" width="4" height="1.3" fill="#4ec9b0"/><rect x="1807" y="152.9" width="1" height="1.3" fill="#d4d4d4"/><rect x="1808" y="152.9" width="5" height="1.3" fill="#dcdcaa"/><rect x="1813" y="152.9" width="1" height="1.3" fill="#ffd700"/><rect x="1814" y="152.9" width="1" height="1.3" fill="#b5cea8"/><rect x="1815" y="152.9" width="1" height="1.3" fill="#ffd700"/><rect x="1803" y="154.9" width="12" height="1.3" fill="#dcdcaa"/><rect x="1815" y="154.9" width="2" height="1.3" fill="#ffd700"/><rect x="1803" y="156.9" width="2" height="1.3" fill="#9cdcfe"/><rect x="1806" y="156.9" width="1" height="1.3" fill="#d4d4d4"/><rect x="1808" y="156.9" width="5" height="1.3" fill="#dcdcaa"/><rect x="1813" y="156.9" width="1" height="1.3" fill="#ffd700"/><rect x="1814" y="156.9" width="6" height="1.3" fill="#ce9178"/><rect x="1821" y="156.9" width="2" height="1.3" fill="#ce9178"/><rect x="1824" y="156.9" width="7" height="1.3" fill="#ce9178"/><rect x="1832" y="156.9" width="2" height="1.3" fill="#ce9178"/><rect x="1835" y="156.9" width="5" height="1.3" fill="#ce9178"/><rect x="1841" y="156.9" width="7" height="1.3" fill="#ce9178"/><rect x="1849" y="156.9" width="4" height="1.3" fill="#ce9178"/><rect x="1854" y="156.9" width="5" height="1.3" fill="#ce9178"/><rect x="1859" y="156.9" width="1" height="1.3" fill="#ffd700"/><rect x="1803" y="158.9" width="1" height="1.3" fill="#6a9955"/><rect x="1805" y="158.9" width="6" height="1.3" fill="#6a9955"/><rect x="1812" y="158.9" width="8" height="1.3" fill="#6a9955"/><rect x="1821" y="158.9" width="2" height="1.3" fill="#6a9955"/><rect x="1824" y="158.9" width="7" height="1.3" fill="#6a9955"/><rect x="1803" y="160.9" width="5" height="1.3" fill="#c586c0"/><rect x="1809" y="160.9" width="2" height="1.3" fill="#9cdcfe"/><rect x="1812" y="160.9" width="3" height="1.3" fill="#569cd6"/><rect x="1816" y="160.9" width="2" height="1.3" fill="#569cd6"/><rect x="1819" y="160.9" width="1" height="1.3" fill="#ffd700"/><rect x="1820" y="160.9" width="4" height="1.3" fill="#ce9178"/><rect x="1825" y="160.9" width="3" height="1.3" fill="#ce9178"/><rect x="1828" y="160.9" width="1" height="1.3" fill="#ffd700"/><rect x="1829" y="160.9" width="1" height="1.3" fill="#d4d4d4"/><rect x="1807" y="162.9" width="2" height="1.3" fill="#9cdcfe"/><rect x="1810" y="162.9" width="1" height="1.3" fill="#d4d4d4"/><rect x="1812" y="162.9" width="5" height="1.3" fill="#dcdcaa"/><rect x="1817" y="162.9" width="1" height="1.3" fill="#ffd700"/><rect x="1818" y="162.9" width="5" height="1.3" fill="#ce9178"/><rect x="1824" y="162.9" width="4" height="1.3" fill="#ce9178"/><rect x="1829" y="162.9" width="8" height="1.3" fill="#ce9178"/><rect x="1838" y="162.9" width="3" height="1.3" fill="#ce9178"/><rect x="1842" y="162.9" width="4" height="1.3" fill="#ce9178"/><rect x="1846" y="162.9" width="1" height="1.3" fill="#ffd700"/><rect x="1803" y="164.9" width="1" height="1.3" fill="#6a9955"/><rect x="1805" y="164.9" width="4" height="1.3" fill="#6a9955"/><rect x="1810" y="164.9" width="2" height="1.3" fill="#6a9955"/><rect x="1813" y="164.9" width="2" height="1.3" fill="#6a9955"/><rect x="1816" y="164.9" width="6" height="1.3" fill="#6a9955"/><rect x="1823" y="164.9" width="8" height="1.3" fill="#6a9955"/><rect x="1832" y="164.9" width="2" height="1.3" fill="#6a9955"/><rect x="1835" y="164.9" width="5" height="1.3" fill="#6a9955"/><rect x="1841" y="164.9" width="2" height="1.3" fill="#6a9955"/><rect x="1844" y="164.9" width="7" height="1.3" fill="#6a9955"/><rect x="1803" y="168.9" width="2" height="1.3" fill="#c586c0"/><rect x="1806" y="168.9" width="2" height="1.3" fill="#9cdcfe"/><rect x="1809" y="168.9" width="2" height="1.3" fill="#d4d4d4"/><rect x="1812" y="168.9" width="3" height="1.3" fill="#ce9178"/><rect x="1815" y="168.9" width="1" height="1.3" fill="#d4d4d4"/><rect x="1807" y="170.9" width="5" height="1.3" fill="#dcdcaa"/><rect x="1812" y="170.9" width="1" height="1.3" fill="#ffd700"/><rect x="1813" y="170.9" width="5" height="1.3" fill="#ce9178"/><rect x="1819" y="170.9" width="5" height="1.3" fill="#ce9178"/><rect x="1825" y="170.9" width="2" height="1.3" fill="#ce9178"/><rect x="1828" y="170.9" width="2" height="1.3" fill="#ce9178"/><rect x="1831" y="170.9" width="8" height="1.3" fill="#ce9178"/><rect x="1840" y="170.9" width="7" height="1.3" fill="#ce9178"/><rect x="1848" y="170.9" width="2" height="1.3" fill="#ce9178"/><rect x="1851" y="170.9" width="3" height="1.3" fill="#ce9178"/><rect x="1855" y="170.9" width="3" height="1.3" fill="#ce9178"/><rect x="1859" y="170.9" width="3" height="1.3" fill="#ce9178"/><rect x="1862" y="170.9" width="1" height="1.3" fill="#ffd700"/><rect x="1807" y="172.9" width="1" height="1.3" fill="#6a9955"/><rect x="1809" y="172.9" width="5" height="1.3" fill="#6a9955"/><rect x="1815" y="172.9" width="5" height="1.3" fill="#6a9955"/><rect x="1821" y="172.9" width="2" height="1.3" fill="#6a9955"/><rect x="1807" y="174.9" width="12" height="1.3" fill="#dcdcaa"/><rect x="1819" y="174.9" width="2" height="1.3" fill="#ffd700"/><rect x="1807" y="176.9" width="8" height="1.3" fill="#dcdcaa"/><rect x="1815" y="176.9" width="2" height="1.3" fill="#ffd700"/><rect x="1803" y="178.9" width="4" height="1.3" fill="#c586c0"/><rect x="1807" y="178.9" width="1" height="1.3" fill="#d4d4d4"/><rect x="1807" y="180.9" width="5" height="1.3" fill="#dcdcaa"/><rect x="1812" y="180.9" width="1" height="1.3" fill="#ffd700"/><rect x="1813" y="180.9" width="6" height="1.3" fill="#ce9178"/><rect x="1820" y="180.9" width="5" height="1.3" fill="#ce9178"/><rect x="1826" y="180.9" width="2" height="1.3" fill="#ce9178"/><rect x="1829" y="180.9" width="6" height="1.3" fill="#ce9178"/><rect x="1836" y="180.9" width="8" height="1.3" fill="#ce9178"/><rect x="1844" y="180.9" width="1" height="1.3" fill="#ffd700"/><rect x="1807" y="182.9" width="1" height="1.3" fill="#6a9955"/><rect x="1809" y="182.9" width="3" height="1.3" fill="#6a9955"/><rect x="1813" y="182.9" width="8" height="1.3" fill="#6a9955"/><rect x="1822" y="182.9" width="1" height="1.3" fill="#6a9955"/><rect x="1807" y="184.9" width="9" height="1.3" fill="#dcdcaa"/><rect x="1816" y="184.9" width="2" height="1.3" fill="#ffd700"/><rect x="1807" y="186.9" width="8" height="1.3" fill="#dcdcaa"/><rect x="1815" y="186.9" width="2" height="1.3" fill="#ffd700"/><rect x="1799" y="188.9" width="4" height="1.3" fill="#c586c0"/><rect x="1803" y="188.9" width="1" height="1.3" fill="#d4d4d4"/><rect x="1803" y="190.9" width="5" height="1.3" fill="#dcdcaa"/><rect x="1808" y="190.9" width="1" height="1.3" fill="#ffd700"/><rect x="1809" y="190.9" width="5" height="1.3" fill="#ce9178"/><rect x="1815" y="190.9" width="4" height="1.3" fill="#ce9178"/><rect x="1820" y="190.9" width="2" height="1.3" fill="#ce9178"/><rect x="1823" y="190.9" width="4" height="1.3" fill="#ce9178"/><rect x="1828" y="190.9" width="4" height="1.3" fill="#ce9178"/><rect x="1833" y="190.9" width="2" height="1.3" fill="#ce9178"/><rect x="1836" y="190.9" width="5" height="1.3" fill="#ce9178"/><rect x="1842" y="190.9" width="6" height="1.3" fill="#ce9178"/><rect x="1848" y="190.9" width="1" height="1.3" fill="#ffd700"/><rect x="1803" y="192.9" width="1" height="1.3" fill="#6a9955"/><rect x="1805" y="192.9" width="2" height="1.3" fill="#6a9955"/><rect x="1808" y="192.9" width="3" height="1.3" fill="#6a9955"/><rect x="1812" y="192.9" width="3" height="1.3" fill="#6a9955"/><rect x="1816" y="192.9" width="3" height="1.3" fill="#6a9955"/><rect x="1803" y="194.9" width="9" height="1.3" fill="#dcdcaa"/><rect x="1812" y="194.9" width="2" height="1.3" fill="#ffd700"/><rect x="1803" y="196.9" width="8" height="1.3" fill="#dcdcaa"/><rect x="1811" y="196.9" width="2" height="1.3" fill="#ffd700"/><rect x="1795" y="198.9" width="4" height="1.3" fill="#c586c0"/><rect x="1799" y="198.9" width="1" height="1.3" fill="#d4d4d4"/><rect x="1799" y="200.9" width="5" height="1.3" fill="#dcdcaa"/><rect x="1804" y="200.9" width="1" height="1.3" fill="#ffd700"/><rect x="1805" y="200.9" width="3" height="1.3" fill="#ce9178"/><rect x="1809" y="200.9" width="2" height="1.3" fill="#ce9178"/><rect x="1812" y="200.9" width="2" height="1.3" fill="#ce9178"/><rect x="1815" y="200.9" width="5" height="1.3" fill="#ce9178"/><rect x="1821" y="200.9" width="8" height="1.3" fill="#ce9178"/><rect x="1830" y="200.9" width="5" height="1.3" fill="#ce9178"/><rect x="1836" y="200.9" width="3" height="1.3" fill="#ce9178"/><rect x="1840" y="200.9" width="7" height="1.3" fill="#ce9178"/><rect x="1848" y="200.9" width="6" height="1.3" fill="#ce9178"/><rect x="1855" y="200.9" width="3" height="1.3" fill="#ce9178"/><rect x="1859" y="200.9" width="3" height="1.3" fill="#ce9178"/><rect x="1862" y="200.9" width="1" height="1.3" fill="#ffd700"/><rect x="1799" y="202.9" width="1" height="1.3" fill="#6a9955"/><rect x="1801" y="202.9" width="6" height="1.3" fill="#6a9955"/><rect x="1808" y="202.9" width="3" height="1.3" fill="#6a9955"/><rect x="1812" y="202.9" width="3" height="1.3" fill="#6a9955"/><rect x="1799" y="204.9" width="9" height="1.3" fill="#dcdcaa"/><rect x="1808" y="204.9" width="2" height="1.3" fill="#ffd700"/><rect x="1799" y="206.9" width="8" height="1.3" fill="#dcdcaa"/><rect x="1807" y="206.9" width="2" height="1.3" fill="#ffd700"/><rect x="1791" y="210.9" width="1" height="1.3" fill="#6a9955"/><rect x="1793" y="210.9" width="8" height="1.3" fill="#6a9955"/><rect x="1802" y="210.9" width="3" height="1.3" fill="#6a9955"/><rect x="1806" y="210.9" width="5" height="1.3" fill="#6a9955"/><rect x="1812" y="210.9" width="7" height="1.3" fill="#6a9955"/><rect x="1791" y="212.9" width="3" height="1.3" fill="#569cd6"/><rect x="1795" y="212.9" width="14" height="1.3" fill="#dcdcaa"/><rect x="1809" y="212.9" width="3" height="1.3" fill="#ffd700"/><rect x="1795" y="214.9" width="1" height="1.3" fill="#6a9955"/><rect x="1797" y="214.9" width="5" height="1.3" fill="#6a9955"/><rect x="1803" y="214.9" width="2" height="1.3" fill="#6a9955"/><rect x="1806" y="214.9" width="5" height="1.3" fill="#6a9955"/><rect x="1812" y="214.9" width="5" height="1.3" fill="#6a9955"/><rect x="1818" y="214.9" width="3" height="1.3" fill="#6a9955"/><rect x="1822" y="214.9" width="2" height="1.3" fill="#6a9955"/><rect x="1825" y="214.9" width="4" height="1.3" fill="#6a9955"/><rect x="1795" y="216.9" width="3" height="1.3" fill="#569cd6"/><rect x="1799" y="216.9" width="10" height="1.3" fill="#dcdcaa"/><rect x="1809" y="216.9" width="3" height="1.3" fill="#ffd700"/><rect x="1799" y="218.9" width="5" height="1.3" fill="#dcdcaa"/><rect x="1804" y="218.9" width="1" height="1.3" fill="#ffd700"/><rect x="1805" y="218.9" width="9" height="1.3" fill="#ce9178"/><rect x="1815" y="218.9" width="8" height="1.3" fill="#ce9178"/><rect x="1824" y="218.9" width="6" height="1.3" fill="#ce9178"/><rect x="1831" y="218.9" width="4" height="1.3" fill="#ce9178"/><rect x="1836" y="218.9" width="2" height="1.3" fill="#ce9178"/><rect x="1839" y="218.9" width="3" height="1.3" fill="#ce9178"/><rect x="1843" y="218.9" width="3" height="1.3" fill="#ce9178"/><rect x="1846" y="218.9" width="1" height="1.3" fill="#ffd700"/><rect x="1799" y="220.9" width="5" height="1.3" fill="#dcdcaa"/><rect x="1804" y="220.9" width="1" height="1.3" fill="#ffd700"/><rect x="1805" y="220.9" width="6" height="1.3" fill="#ce9178"/><rect x="1812" y="220.9" width="8" height="1.3" fill="#ce9178"/><rect x="1821" y="220.9" width="7" height="1.3" fill="#ce9178"/><rect x="1828" y="220.9" width="1" height="1.3" fill="#ffd700"/><rect x="1795" y="224.9" width="5" height="1.3" fill="#9cdcfe"/><rect x="1801" y="224.9" width="1" height="1.3" fill="#d4d4d4"/><rect x="1803" y="224.9" width="1" height="1.3" fill="#b5cea8"/><rect x="1795" y="228.9" width="1" height="1.3" fill="#6a9955"/><rect x="1797" y="228.9" width="7" height="1.3" fill="#6a9955"/><rect x="1805" y="228.9" width="6" height="1.3" fill="#6a9955"/><rect x="1812" y="228.9" width="2" height="1.3" fill="#6a9955"/><rect x="1815" y="228.9" width="2" height="1.3" fill="#6a9955"/><rect x="1818" y="228.9" width="3" height="1.3" fill="#6a9955"/><rect x="1822" y="228.9" width="2" height="1.3" fill="#6a9955"/><rect x="1795" y="230.9" width="3" height="1.3" fill="#569cd6"/><rect x="1799" y="230.9" width="13" height="1.3" fill="#dcdcaa"/><rect x="1812" y="230.9" width="3" height="1.3" fill="#ffd700"/><rect x="1799" y="232.9" width="6" height="1.3" fill="#569cd6"/><rect x="1806" y="232.9" width="7" height="1.3" fill="#9cdcfe"/><rect x="1799" y="234.9" width="5" height="1.3" fill="#9cdcfe"/><rect x="1805" y="234.9" width="1" height="1.3" fill="#d4d4d4"/><rect x="1807" y="234.9" width="1" height="1.3" fill="#b5cea8"/><rect x="1799" y="236.9" width="5" height="1.3" fill="#dcdcaa"/><rect x="1804" y="236.9" width="1" height="1.3" fill="#ffd700"/><rect x="1805" y="236.9" width="6" height="1.3" fill="#ce9178"/><rect x="1812" y="236.9" width="4" height="1.3" fill="#ce9178"/><rect x="1817" y="236.9" width="2" height="1.3" fill="#ce9178"/><rect x="1820" y="236.9" width="8" height="1.3" fill="#ce9178"/><rect x="1828" y="236.9" width="1" height="1.3" fill="#ffd700"/><rect x="1795" y="240.9" width="5" height="1.3" fill="#dcdcaa"/><rect x="1800" y="240.9" width="1" height="1.3" fill="#ffd700"/><rect x="1801" y="240.9" width="7" height="1.3" fill="#ce9178"/><rect x="1809" y="240.9" width="4" height="1.3" fill="#ce9178"/><rect x="1814" y="240.9" width="8" height="1.3" fill="#ce9178"/><rect x="1823" y="240.9" width="4" height="1.3" fill="#ce9178"/><rect x="1828" y="240.9" width="5" height="1.3" fill="#ce9178"/><rect x="1834" y="240.9" width="2" height="1.3" fill="#ce9178"/><rect x="1837" y="240.9" width="3" height="1.3" fill="#ce9178"/><rect x="1840" y="240.9" width="1" height="1.3" fill="#ffd700"/><rect x="1795" y="242.9" width="1" height="1.3" fill="#6a9955"/><rect x="1797" y="242.9" width="2" height="1.3" fill="#6a9955"/><rect x="1800" y="242.9" width="3" height="1.3" fill="#6a9955"/><rect x="1804" y="242.9" width="4" height="1.3" fill="#6a9955"/><rect x="1795" y="244.9" width="4" height="1.3" fill="#4ec9b0"/><rect x="1799" y="244.9" width="1" height="1.3" fill="#d4d4d4"/><rect x="1800" y="244.9" width="5" height="1.3" fill="#dcdcaa"/><rect x="1805" y="244.9" width="1" height="1.3" fill="#ffd700"/><rect x="1806" y="244.9" width="1" height="1.3" fill="#b5cea8"/><rect x="1807" y="244.9" width="1" height="1.3" fill="#ffd700"/><rect x="1795" y="248.9" width="5" height="1.3" fill="#dcdcaa"/><rect x="1800" y="248.9" width="1" height="1.3" fill="#ffd700"/><rect x="1801" y="248.9" width="8" height="1.3" fill="#ce9178"/><rect x="1810" y="248.9" width="3" height="1.3" fill="#ce9178"/><rect x="1814" y="248.9" width="2" height="1.3" fill="#ce9178"/><rect x="1817" y="248.9" width="6" height="1.3" fill="#ce9178"/><rect x="1824" y="248.9" width="4" height="1.3" fill="#ce9178"/><rect x="1829" y="248.9" width="4" height="1.3" fill="#ce9178"/><rect x="1834" y="248.9" width="6" height="1.3" fill="#ce9178"/><rect x="1841" y="248.9" width="4" height="1.3" fill="#ce9178"/><rect x="1845" y="248.9" width="1" height="1.3" fill="#ffd700"/><rect x="1795" y="250.9" width="4" height="1.3" fill="#4ec9b0"/><rect x="1799" y="250.9" width="1" height="1.3" fill="#d4d4d4"/><rect x="1800" y="250.9" width="5" height="1.3" fill="#dcdcaa"/><rect x="1805" y="250.9" width="1" height="1.3" fill="#ffd700"/><rect x="1806" y="250.9" width="1" height="1.3" fill="#b5cea8"/><rect x="1807" y="250.9" width="1" height="1.3" fill="#ffd700"/><rect x="1795" y="252.9" width="1" height="1.3" fill="#6a9955"/><rect x="1797" y="252.9" width="3" height="1.3" fill="#6a9955"/><rect x="1801" y="252.9" width="6" height="1.3" fill="#6a9955"/><rect x="1808" y="252.9" width="5" height="1.3" fill="#6a9955"/><rect x="1814" y="252.9" width="8" height="1.3" fill="#6a9955"/><rect x="1823" y="252.9" width="6" height="1.3" fill="#6a9955"/><rect x="1830" y="252.9" width="3" height="1.3" fill="#6a9955"/><rect x="1795" y="254.9" width="2" height="1.3" fill="#9cdcfe"/><rect x="1798" y="254.9" width="1" height="1.3" fill="#d4d4d4"/><rect x="1800" y="254.9" width="5" height="1.3" fill="#dcdcaa"/><rect x="1805" y="254.9" width="1" height="1.3" fill="#ffd700"/><rect x="1806" y="254.9" width="9" height="1.3" fill="#ce9178"/><rect x="1816" y="254.9" width="5" height="1.3" fill="#ce9178"/><rect x="1822" y="254.9" width="3" height="1.3" fill="#ce9178"/><rect x="1826" y="254.9" width="7" height="1.3" fill="#ce9178"/><rect x="1834" y="254.9" width="3" height="1.3" fill="#ce9178"/><rect x="1838" y="254.9" width="5" height="1.3" fill="#ce9178"/><rect x="1843" y="254.9" width="1" height="1.3" fill="#ffd700"/><rect x="1795" y="256.9" width="1" height="1.3" fill="#6a9955"/><rect x="1797" y="256.9" width="3" height="1.3" fill="#6a9955"/><rect x="1801" y="256.9" width="8" height="1.3" fill="#6a9955"/><rect x="1810" y="256.9" width="6" height="1.3" fill="#6a9955"/><rect x="1817" y="256.9" width="3" height="1.3" fill="#6a9955"/><rect x="1821" y="256.9" width="2" height="1.3" fill="#6a9955"/><rect x="1795" y="258.9" width="5" height="1.3" fill="#c586c0"/><rect x="1801" y="258.9" width="12" height="1.3" fill="#9cdcfe"/><rect x="1814" y="258.9" width="3" height="1.3" fill="#569cd6"/><rect x="1818" y="258.9" width="2" height="1.3" fill="#569cd6"/><rect x="1821" y="258.9" width="1" height="1.3" fill="#ffd700"/><rect x="1822" y="258.9" width="4" height="1.3" fill="#ce9178"/><rect x="1827" y="258.9" width="3" height="1.3" fill="#ce9178"/><rect x="1830" y="258.9" width="1" height="1.3" fill="#ffd700"/><rect x="1831" y="258.9" width="1" height="1.3" fill="#d4d4d4"/><rect x="1799" y="260.9" width="2" height="1.3" fill="#9cdcfe"/><rect x="1802" y="260.9" width="1" height="1.3" fill="#d4d4d4"/><rect x="1804" y="260.9" width="5" height="1.3" fill="#dcdcaa"/><rect x="1809" y="260.9" width="1" height="1.3" fill="#ffd700"/><rect x="1810" y="260.9" width="4" height="1.3" fill="#ce9178"/><rect x="1815" y="260.9" width="3" height="1.3" fill="#ce9178"/><rect x="1819" y="260.9" width="7" height="1.3" fill="#ce9178"/><rect x="1827" y="260.9" width="7" height="1.3" fill="#ce9178"/><rect x="1835" y="260.9" width="6" height="1.3" fill="#ce9178"/><rect x="1842" y="260.9" width="4" height="1.3" fill="#ce9178"/><rect x="1846" y="260.9" width="1" height="1.3" fill="#ffd700"/><rect x="1795" y="264.9" width="1" height="1.3" fill="#6a9955"/><rect x="1797" y="264.9" width="7" height="1.3" fill="#6a9955"/><rect x="1805" y="264.9" width="5" height="1.3" fill="#6a9955"/><rect x="1811" y="264.9" width="5" height="1.3" fill="#6a9955"/><rect x="1817" y="264.9" width="6" height="1.3" fill="#6a9955"/><rect x="1824" y="264.9" width="2" height="1.3" fill="#6a9955"/><rect x="1827" y="264.9" width="5" height="1.3" fill="#6a9955"/><rect x="1833" y="264.9" width="2" height="1.3" fill="#6a9955"/><rect x="1836" y="264.9" width="2" height="1.3" fill="#6a9955"/><rect x="1839" y="264.9" width="2" height="1.3" fill="#6a9955"/><rect x="1842" y="264.9" width="1" height="1.3" fill="#6a9955"/><rect x="1795" y="268.9" width="2" height="1.3" fill="#c586c0"/><rect x="1798" y="268.9" width="11" height="1.3" fill="#9cdcfe"/><rect x="1810" y="268.9" width="2" height="1.3" fill="#d4d4d4"/><rect x="1813" y="268.9" width="3" height="1.3" fill="#ce9178"/><rect x="1816" y="268.9" width="1" height="1.3" fill="#d4d4d4"/><rect x="1799" y="270.9" width="9" height="1.3" fill="#dcdcaa"/><rect x="1808" y="270.9" width="2" height="1.3" fill="#ffd700"/><rect x="1799" y="272.9" width="6" height="1.3" fill="#c586c0"/><rect x="1795" y="276.9" width="5" height="1.3" fill="#dcdcaa"/><rect x="1800" y="276.9" width="1" height="1.3" fill="#ffd700"/><rect x="1801" y="276.9" width="7" height="1.3" fill="#ce9178"/><rect x="1809" y="276.9" width="4" height="1.3" fill="#ce9178"/><rect x="1814" y="276.9" width="3" height="1.3" fill="#ce9178"/><rect x="1818" y="276.9" width="7" height="1.3" fill="#ce9178"/><rect x="1826" y="276.9" width="7" height="1.3" fill="#ce9178"/><rect x="1834" y="276.9" width="5" height="1.3" fill="#ce9178"/><rect x="1840" y="276.9" width="4" height="1.3" fill="#ce9178"/><rect x="1845" y="276.9" width="5" height="1.3" fill="#ce9178"/><rect x="1851" y="276.9" width="6" height="1.3" fill="#ce9178"/><rect x="1857" y="276.9" width="1" height="1.3" fill="#ffd700"/><rect x="1795" y="278.9" width="1" height="1.3" fill="#6a9955"/><rect x="1797" y="278.9" width="6" height="1.3" fill="#6a9955"/><rect x="1804" y="278.9" width="4" height="1.3" fill="#6a9955"/><rect x="1795" y="280.9" width="4" height="1.3" fill="#4ec9b0"/><rect x="1799" y="280.9" width="1" height="1.3" fill="#d4d4d4"/><rect x="1800" y="280.9" width="5" height="1.3" fill="#dcdcaa"/><rect x="1805" y="280.9" width="1" height="1.3" fill="#ffd700"/><rect x="1806" y="280.9" width="1" height="1.3" fill="#b5cea8"/><rect x="1807" y="280.9" width="1" height="1.3" fill="#ffd700"/><rect x="1795" y="282.9" width="1" height="1.3" fill="#6a9955"/><rect x="1797" y="282.9" width="4" height="1.3" fill="#6a9955"/><rect x="1802" y="282.9" width="6" height="1.3" fill="#6a9955"/><rect x="1809" y="282.9" width="3" height="1.3" fill="#6a9955"/><rect x="1813" y="282.9" width="7" height="1.3" fill="#6a9955"/><rect x="1821" y="282.9" width="2" height="1.3" fill="#6a9955"/><rect x="1824" y="282.9" width="3" height="1.3" fill="#6a9955"/><rect x="1828" y="282.9" width="3" height="1.3" fill="#6a9955"/><rect x="1832" y="282.9" width="2" height="1.3" fill="#6a9955"/><rect x="1795" y="284.9" width="2" height="1.3" fill="#9cdcfe"/><rect x="1798" y="284.9" width="1" height="1.3" fill="#d4d4d4"/><rect x="1800" y="284.9" width="5" height="1.3" fill="#dcdcaa"/><rect x="1805" y="284.9" width="1" height="1.3" fill="#ffd700"/><rect x="1806" y="284.9" width="7" height="1.3" fill="#ce9178"/><rect x="1814" y="284.9" width="7" height="1.3" fill="#ce9178"/><rect x="1822" y="284.9" width="8" height="1.3" fill="#ce9178"/><rect x="1831" y="284.9" width="6" height="1.3" fill="#ce9178"/><rect x="1838" y="284.9" width="6" height="1.3" fill="#ce9178"/><rect x="1845" y="284.9" width="2" height="1.3" fill="#ce9178"/><rect x="1848" y="284.9" width="4" height="1.3" fill="#ce9178"/><rect x="1853" y="284.9" width="3" height="1.3" fill="#ce9178"/><rect x="1857" y="284.9" width="2" height="1.3" fill="#ce9178"/><rect x="1859" y="284.9" width="1" height="1.3" fill="#ffd700"/><rect x="1795" y="286.9" width="1" height="1.3" fill="#6a9955"/><rect x="1797" y="286.9" width="7" height="1.3" fill="#6a9955"/><rect x="1805" y="286.9" width="2" height="1.3" fill="#6a9955"/><rect x="1808" y="286.9" width="2" height="1.3" fill="#6a9955"/><rect x="1811" y="286.9" width="4" height="1.3" fill="#6a9955"/><rect x="1816" y="286.9" width="5" height="1.3" fill="#6a9955"/><rect x="1822" y="286.9" width="1" height="1.3" fill="#6a9955"/><rect x="1795" y="288.9" width="5" height="1.3" fill="#c586c0"/><rect x="1801" y="288.9" width="2" height="1.3" fill="#9cdcfe"/><rect x="1804" y="288.9" width="3" height="1.3" fill="#569cd6"/><rect x="1808" y="288.9" width="2" height="1.3" fill="#569cd6"/><rect x="1811" y="288.9" width="1" height="1.3" fill="#ffd700"/><rect x="1812" y="288.9" width="4" height="1.3" fill="#ce9178"/><rect x="1817" y="288.9" width="3" height="1.3" fill="#ce9178"/><rect x="1820" y="288.9" width="1" height="1.3" fill="#ffd700"/><rect x="1821" y="288.9" width="1" height="1.3" fill="#d4d4d4"/><rect x="1799" y="290.9" width="2" height="1.3" fill="#9cdcfe"/><rect x="1802" y="290.9" width="1" height="1.3" fill="#d4d4d4"/><rect x="1804" y="290.9" width="5" height="1.3" fill="#dcdcaa"/><rect x="1809" y="290.9" width="1" height="1.3" fill="#ffd700"/><rect x="1810" y="290.9" width="4" height="1.3" fill="#ce9178"/><rect x="1815" y="290.9" width="2" height="1.3" fill="#ce9178"/><rect x="1818" y="290.9" width="2" height="1.3" fill="#ce9178"/><rect x="1821" y="290.9" width="3" height="1.3" fill="#ce9178"/><rect x="1825" y="290.9" width="4" height="1.3" fill="#ce9178"/><rect x="1830" y="290.9" width="4" height="1.3" fill="#ce9178"/><rect x="1835" y="290.9" width="3" height="1.3" fill="#ce9178"/><rect x="1838" y="290.9" width="1" height="1.3" fill="#ffd700"/><rect x="1795" y="292.9" width="1" height="1.3" fill="#6a9955"/><rect x="1797" y="292.9" width="6" height="1.3" fill="#6a9955"/><rect x="1804" y="292.9" width="3" height="1.3" fill="#6a9955"/><rect x="1808" y="292.9" width="2" height="1.3" fill="#6a9955"/><rect x="1811" y="292.9" width="4" height="1.3" fill="#6a9955"/><rect x="1816" y="292.9" width="3" height="1.3" fill="#6a9955"/><rect x="1820" y="292.9" width="5" height="1.3" fill="#6a9955"/><rect x="1826" y="292.9" width="4" height="1.3" fill="#6a9955"/><rect x="1831" y="292.9" width="7" height="1.3" fill="#6a9955"/><rect x="1839" y="292.9" width="4" height="1.3" fill="#6a9955"/><rect x="1795" y="294.9" width="2" height="1.3" fill="#c586c0"/><rect x="1798" y="294.9" width="2" height="1.3" fill="#9cdcfe"/><rect x="1801" y="294.9" width="2" height="1.3" fill="#d4d4d4"/><rect x="1804" y="294.9" width="3" height="1.3" fill="#ce9178"/><rect x="1807" y="294.9" width="1" height="1.3" fill="#d4d4d4"/><rect x="1799" y="296.9" width="5" height="1.3" fill="#dcdcaa"/><rect x="1804" y="296.9" width="1" height="1.3" fill="#ffd700"/><rect x="1805" y="296.9" width="8" height="1.3" fill="#ce9178"/><rect x="1814" y="296.9" width="6" height="1.3" fill="#ce9178"/><rect x="1821" y="296.9" width="6" height="1.3" fill="#ce9178"/><rect x="1828" y="296.9" width="3" height="1.3" fill="#ce9178"/><rect x="1832" y="296.9" width="6" height="1.3" fill="#ce9178"/><rect x="1839" y="296.9" width="2" height="1.3" fill="#ce9178"/><rect x="1842" y="296.9" width="2" height="1.3" fill="#ce9178"/><rect x="1845" y="296.9" width="5" height="1.3" fill="#ce9178"/><rect x="1851" y="296.9" width="4" height="1.3" fill="#ce9178"/><rect x="1856" y="296.9" width="2" height="1.3" fill="#ce9178"/><rect x="1858" y="296.9" width="1" height="1.3" fill="#ffd700"/><rect x="1799" y="298.9" width="4" height="1.3" fill="#4ec9b0"/><rect x="1803" y="298.9" width="1" height="1.3" fill="#d4d4d4"/><rect x="1804" y="298.9" width="5" height="1.3" fill="#dcdcaa"/><rect x="1809" y="298.9" width="1" height="1.3" fill="#ffd700"/><rect x="1810" y="298.9" width="1" height="1.3" fill="#b5cea8"/><rect x="1811" y="298.9" width="1" height="1.3" fill="#ffd700"/><rect x="1799" y="300.9" width="1" height="1.3" fill="#6a9955"/><rect x="1801" y="300.9" width="4" height="1.3" fill="#6a9955"/><rect x="1806" y="300.9" width="2" height="1.3" fill="#6a9955"/><rect x="1809" y="300.9" width="2" height="1.3" fill="#6a9955"/><rect x="1812" y="300.9" width="2" height="1.3" fill="#6a9955"/><rect x="1799" y="302.9" width="12" height="1.3" fill="#dcdcaa"/><rect x="1811" y="302.9" width="2" height="1.3" fill="#ffd700"/><rect x="1799" y="304.9" width="2" height="1.3" fill="#9cdcfe"/><rect x="1802" y="304.9" width="1" height="1.3" fill="#d4d4d4"/><rect x="1804" y="304.9" width="5" height="1.3" fill="#dcdcaa"/><rect x="1809" y="304.9" width="1" height="1.3" fill="#ffd700"/><rect x="1810" y="304.9" width="8" height="1.3" fill="#ce9178"/><rect x="1819" y="304.9" width="2" height="1.3" fill="#ce9178"/><rect x="1822" y="304.9" width="5" height="1.3" fill="#ce9178"/><rect x="1828" y="304.9" width="2" height="1.3" fill="#ce9178"/><rect x="1831" y="304.9" width="7" height="1.3" fill="#ce9178"/><rect x="1839" y="304.9" width="4" height="1.3" fill="#ce9178"/><rect x="1844" y="304.9" width="4" height="1.3" fill="#ce9178"/><rect x="1849" y="304.9" width="3" height="1.3" fill="#ce9178"/><rect x="1853" y="304.9" width="2" height="1.3" fill="#ce9178"/><rect x="1856" y="304.9" width="3" height="1.3" fill="#ce9178"/><rect x="1859" y="304.9" width="1" height="1.3" fill="#ffd700"/><rect x="1791" y="306.9" width="5" height="1.3" fill="#ce9178"/><rect x="1797" y="306.9" width="6" height="1.3" fill="#ce9178"/><rect x="1804" y="306.9" width="4" height="1.3" fill="#ce9178"/><rect x="1809" y="306.9" width="7" height="1.3" fill="#ce9178"/><rect x="1817" y="306.9" width="2" height="1.3" fill="#ce9178"/><rect x="1820" y="306.9" width="7" height="1.3" fill="#ce9178"/><rect x="1828" y="306.9" width="4" height="1.3" fill="#ce9178"/><rect x="1799" y="308.9" width="1" height="1.3" fill="#6a9955"/><rect x="1801" y="308.9" width="7" height="1.3" fill="#6a9955"/><rect x="1809" y="308.9" width="3" height="1.3" fill="#6a9955"/><rect x="1813" y="308.9" width="8" height="1.3" fill="#6a9955"/><rect x="1822" y="308.9" width="4" height="1.3" fill="#6a9955"/><rect x="1799" y="310.9" width="5" height="1.3" fill="#c586c0"/><rect x="1805" y="310.9" width="2" height="1.3" fill="#9cdcfe"/><rect x="1808" y="310.9" width="3" height="1.3" fill="#569cd6"/><rect x="1812" y="310.9" width="2" height="1.3" fill="#569cd6"/><rect x="1815" y="310.9" width="1" height="1.3" fill="#ffd700"/><rect x="1816" y="310.9" width="4" height="1.3" fill="#ce9178"/><rect x="1821" y="310.9" width="3" height="1.3" fill="#ce9178"/><rect x="1824" y="310.9" width="1" height="1.3" fill="#ffd700"/><rect x="1825" y="310.9" width="1" height="1.3" fill="#d4d4d4"/><rect x="1803" y="312.9" width="2" height="1.3" fill="#9cdcfe"/><rect x="1806" y="312.9" width="1" height="1.3" fill="#d4d4d4"/><rect x="1808" y="312.9" width="5" height="1.3" fill="#dcdcaa"/><rect x="1813" y="312.9" width="1" height="1.3" fill="#ffd700"/><rect x="1814" y="312.9" width="5" height="1.3" fill="#ce9178"/><rect x="1820" y="312.9" width="2" height="1.3" fill="#ce9178"/><rect x="1823" y="312.9" width="7" height="1.3" fill="#ce9178"/><rect x="1831" y="312.9" width="5" height="1.3" fill="#ce9178"/><rect x="1837" y="312.9" width="2" height="1.3" fill="#ce9178"/><rect x="1840" y="312.9" width="2" height="1.3" fill="#ce9178"/><rect x="1842" y="312.9" width="1" height="1.3" fill="#ffd700"/><rect x="1799" y="314.9" width="1" height="1.3" fill="#6a9955"/><rect x="1801" y="314.9" width="8" height="1.3" fill="#6a9955"/><rect x="1810" y="314.9" width="5" height="1.3" fill="#6a9955"/><rect x="1816" y="314.9" width="8" height="1.3" fill="#6a9955"/><rect x="1825" y="314.9" width="2" height="1.3" fill="#6a9955"/><rect x="1828" y="314.9" width="8" height="1.3" fill="#6a9955"/><rect x="1837" y="314.9" width="5" height="1.3" fill="#6a9955"/><rect x="1843" y="314.9" width="4" height="1.3" fill="#6a9955"/><rect x="1799" y="316.9" width="2" height="1.3" fill="#c586c0"/><rect x="1802" y="316.9" width="2" height="1.3" fill="#9cdcfe"/><rect x="1805" y="316.9" width="2" height="1.3" fill="#d4d4d4"/><rect x="1808" y="316.9" width="3" height="1.3" fill="#ce9178"/><rect x="1811" y="316.9" width="1" height="1.3" fill="#d4d4d4"/><rect x="1803" y="318.9" width="5" height="1.3" fill="#dcdcaa"/><rect x="1808" y="318.9" width="1" height="1.3" fill="#ffd700"/><rect x="1809" y="318.9" width="3" height="1.3" fill="#ce9178"/><rect x="1813" y="318.9" width="6" height="1.3" fill="#ce9178"/><rect x="1820" y="318.9" width="7" height="1.3" fill="#ce9178"/><rect x="1828" y="318.9" width="5" height="1.3" fill="#ce9178"/><rect x="1834" y="318.9" width="5" height="1.3" fill="#ce9178"/><rect x="1840" y="318.9" width="6" height="1.3" fill="#ce9178"/><rect x="1847" y="318.9" width="2" height="1.3" fill="#ce9178"/><rect x="1850" y="318.9" width="4" height="1.3" fill="#ce9178"/><rect x="1854" y="318.9" width="1" height="1.3" fill="#ffd700"/><rect x="1791" y="320.9" width="2" height="1.3" fill="#ce9178"/><rect x="1794" y="320.9" width="2" height="1.3" fill="#ce9178"/><rect x="1797" y="320.9" width="2" height="1.3" fill="#ce9178"/><rect x="1800" y="320.9" width="7" height="1.3" fill="#ce9178"/><rect x="1808" y="320.9" width="2" height="1.3" fill="#ce9178"/><rect x="1811" y="320.9" width="4" height="1.3" fill="#ce9178"/><rect x="1803" y="322.9" width="4" height="1.3" fill="#4ec9b0"/><rect x="1807" y="322.9" width="1" height="1.3" fill="#d4d4d4"/><rect x="1808" y="322.9" width="5" height="1.3" fill="#dcdcaa"/><rect x="1813" y="322.9" width="1" height="1.3" fill="#ffd700"/><rect x="1814" y="322.9" width="1" height="1.3" fill="#b5cea8"/><rect x="1815" y="322.9" width="1" height="1.3" fill="#ffd700"/><rect x="1803" y="324.9" width="12" height="1.3" fill="#dcdcaa"/><rect x="1815" y="324.9" width="2" height="1.3" fill="#ffd700"/><rect x="1803" y="326.9" width="2" height="1.3" fill="#9cdcfe"/><rect x="1806" y="326.9" width="1" height="1.3" fill="#d4d4d4"/><rect x="1808" y="326.9" width="5" height="1.3" fill="#dcdcaa"/><rect x="1813" y="326.9" width="1" height="1.3" fill="#ffd700"/><rect x="1814" y="326.9" width="6" height="1.3" fill="#ce9178"/><rect x="1821" y="326.9" width="7" height="1.3" fill="#ce9178"/><rect x="1829" y="326.9" width="5" height="1.3" fill="#ce9178"/><rect x="1834" y="326.9" width="1" height="1.3" fill="#ffd700"/><rect x="1791" y="328.9" width="5" height="1.3" fill="#ce9178"/><rect x="1797" y="328.9" width="7" height="1.3" fill="#ce9178"/><rect x="1805" y="328.9" width="7" height="1.3" fill="#ce9178"/><rect x="1813" y="328.9" width="6" height="1.3" fill="#ce9178"/><rect x="1820" y="328.9" width="5" height="1.3" fill="#ce9178"/><rect x="1826" y="328.9" width="4" height="1.3" fill="#ce9178"/><rect x="1803" y="330.9" width="1" height="1.3" fill="#6a9955"/><rect x="1805" y="330.9" width="5" height="1.3" fill="#6a9955"/><rect x="1811" y="330.9" width="8" height="1.3" fill="#6a9955"/><rect x="1820" y="330.9" width="6" height="1.3" fill="#6a9955"/><rect x="1827" y="330.9" width="2" height="1.3" fill="#6a9955"/><rect x="1830" y="330.9" width="1" height="1.3" fill="#6a9955"/><rect x="1803" y="332.9" width="5" height="1.3" fill="#c586c0"/><rect x="1809" y="332.9" width="2" height="1.3" fill="#9cdcfe"/><rect x="1812" y="332.9" width="3" height="1.3" fill="#569cd6"/><rect x="1816" y="332.9" width="2" height="1.3" fill="#569cd6"/><rect x="1819" y="332.9" width="1" height="1.3" fill="#ffd700"/><rect x="1820" y="332.9" width="4" height="1.3" fill="#ce9178"/><rect x="1825" y="332.9" width="3" height="1.3" fill="#ce9178"/><rect x="1828" y="332.9" width="1" height="1.3" fill="#ffd700"/><rect x="1829" y="332.9" width="1" height="1.3" fill="#d4d4d4"/><rect x="1807" y="334.9" width="2" height="1.3" fill="#9cdcfe"/><rect x="1810" y="334.9" width="1" height="1.3" fill="#d4d4d4"/><rect x="1812" y="334.9" width="5" height="1.3" fill="#dcdcaa"/><rect x="1817" y="334.9" width="1" height="1.3" fill="#ffd700"/><rect x="1818" y="334.9" width="9" height="1.3" fill="#ce9178"/><rect x="1828" y="334.9" width="6" height="1.3" fill="#ce9178"/><rect x="1835" y="334.9" width="2" height="1.3" fill="#ce9178"/><rect x="1838" y="334.9" width="4" height="1.3" fill="#ce9178"/><rect x="1843" y="334.9" width="3" height="1.3" fill="#ce9178"/><rect x="1846" y="334.9" width="1" height="1.3" fill="#ffd700"/><rect x="1803" y="336.9" width="1" height="1.3" fill="#6a9955"/><rect x="1805" y="336.9" width="2" height="1.3" fill="#6a9955"/><rect x="1808" y="336.9" width="5" height="1.3" fill="#6a9955"/><rect x="1814" y="336.9" width="2" height="1.3" fill="#6a9955"/><rect x="1817" y="336.9" width="3" height="1.3" fill="#6a9955"/><rect x="1821" y="336.9" width="7" height="1.3" fill="#6a9955"/><rect x="1829" y="336.9" width="2" height="1.3" fill="#6a9955"/><rect x="1832" y="336.9" width="5" height="1.3" fill="#6a9955"/><rect x="1838" y="336.9" width="8" height="1.3" fill="#6a9955"/><rect x="1847" y="336.9" width="4" height="1.3" fill="#6a9955"/><rect x="1803" y="338.9" width="2" height="1.3" fill="#c586c0"/><rect x="1806" y="338.9" width="2" height="1.3" fill="#9cdcfe"/><rect x="1809" y="338.9" width="2" height="1.3" fill="#d4d4d4"/><rect x="1812" y="338.9" width="3" height="1.3" fill="#ce9178"/><rect x="1815" y="338.9" width="1" height="1.3" fill="#d4d4d4"/><rect x="1807" y="340.9" width="5" height="1.3" fill="#dcdcaa"/><rect x="1812" y="340.9" width="1" height="1.3" fill="#ffd700"/><rect x="1813" y="340.9" width="8" height="1.3" fill="#ce9178"/><rect x="1822" y="340.9" width="5" height="1.3" fill="#ce9178"/><rect x="1828" y="340.9" width="4" height="1.3" fill="#ce9178"/><rect x="1833" y="340.9" width="2" height="1.3" fill="#ce9178"/><rect x="1836" y="340.9" width="4" height="1.3" fill="#ce9178"/><rect x="1841" y="340.9" width="4" height="1.3" fill="#ce9178"/><rect x="1846" y="340.9" width="3" height="1.3" fill="#ce9178"/><rect x="1850" y="340.9" width="7" height="1.3" fill="#ce9178"/><rect x="1858" y="340.9" width="6" height="1.3" fill="#ce9178"/><rect x="1865" y="340.9" width="4" height="1.3" fill="#ce9178"/><rect x="1869" y="340.9" width="1" height="1.3" fill="#ffd700"/><rect x="1807" y="342.9" width="1" height="1.3" fill="#6a9955"/><rect x="1809" y="342.9" width="6" height="1.3" fill="#6a9955"/><rect x="1816" y="342.9" width="3" height="1.3" fill="#6a9955"/><rect x="1820" y="342.9" width="2" height="1.3" fill="#6a9955"/><rect x="1807" y="344.9" width="12" height="1.3" fill="#dcdcaa"/><rect x="1819" y="344.9" width="2" height="1.3" fill="#ffd700"/><rect x="1807" y="346.9" width="5" height="1.3" fill="#dcdcaa"/><rect x="1812" y="346.9" width="1" height="1.3" fill="#ffd700"/><rect x="1813" y="346.9" width="5" height="1.3" fill="#ce9178"/><rect x="1819" y="346.9" width="7" height="1.3" fill="#ce9178"/><rect x="1827" y="346.9" width="5" height="1.3" fill="#ce9178"/><rect x="1833" y="346.9" width="5" height="1.3" fill="#ce9178"/><rect x="1839" y="346.9" width="3" height="1.3" fill="#ce9178"/><rect x="1843" y="346.9" width="4" height="1.3" fill="#ce9178"/><rect x="1848" y="346.9" width="5" height="1.3" fill="#ce9178"/><rect x="1854" y="346.9" width="8" height="1.3" fill="#ce9178"/><rect x="1862" y="346.9" width="1" height="1.3" fill="#ffd700"/><rect x="1807" y="348.9" width="1" height="1.3" fill="#6a9955"/><rect x="1809" y="348.9" width="4" height="1.3" fill="#6a9955"/><rect x="1814" y="348.9" width="3" height="1.3" fill="#6a9955"/><rect x="1818" y="348.9" width="7" height="1.3" fill="#6a9955"/><rect x="1826" y="348.9" width="5" height="1.3" fill="#6a9955"/><rect x="1832" y="348.9" width="8" height="1.3" fill="#6a9955"/><rect x="1841" y="348.9" width="5" height="1.3" fill="#6a9955"/><rect x="1807" y="350.9" width="2" height="1.3" fill="#9cdcfe"/><rect x="1810" y="350.9" width="1" height="1.3" fill="#d4d4d4"/><rect x="1812" y="350.9" width="5" height="1.3" fill="#dcdcaa"/><rect x="1817" y="350.9" width="1" height="1.3" fill="#ffd700"/><rect x="1818" y="350.9" width="9" height="1.3" fill="#ce9178"/><rect x="1828" y="350.9" width="3" height="1.3" fill="#ce9178"/><rect x="1832" y="350.9" width="3" height="1.3" fill="#ce9178"/><rect x="1836" y="350.9" width="5" height="1.3" fill="#ce9178"/><rect x="1842" y="350.9" width="3" height="1.3" fill="#ce9178"/><rect x="1846" y="350.9" width="6" height="1.3" fill="#ce9178"/><rect x="1853" y="350.9" width="4" height="1.3" fill="#ce9178"/><rect x="1858" y="350.9" width="3" height="1.3" fill="#ce9178"/><rect x="1862" y="350.9" width="4" height="1.3" fill="#ce9178"/><rect x="1866" y="350.9" width="1" height="1.3" fill="#ffd700"/><rect x="1807" y="352.9" width="1" height="1.3" fill="#6a9955"/><rect x="1809" y="352.9" width="3" height="1.3" fill="#6a9955"/><rect x="1813" y="352.9" width="5" height="1.3" fill="#6a9955"/><rect x="1819" y="352.9" width="4" height="1.3" fill="#6a9955"/><rect x="1824" y="352.9" width="8" height="1.3" fill="#6a9955"/><rect x="1833" y="352.9" width="3" height="1.3" fill="#6a9955"/><rect x="1807" y="354.9" width="5" height="1.3" fill="#c586c0"/><rect x="1813" y="354.9" width="19" height="1.3" fill="#9cdcfe"/><rect x="1833" y="354.9" width="3" height="1.3" fill="#569cd6"/><rect x="1837" y="354.9" width="2" height="1.3" fill="#569cd6"/><rect x="1840" y="354.9" width="1" height="1.3" fill="#ffd700"/><rect x="1841" y="354.9" width="4" height="1.3" fill="#ce9178"/><rect x="1846" y="354.9" width="3" height="1.3" fill="#ce9178"/><rect x="1849" y="354.9" width="1" height="1.3" fill="#ffd700"/><rect x="1850" y="354.9" width="1" height="1.3" fill="#d4d4d4"/><rect x="1811" y="356.9" width="2" height="1.3" fill="#9cdcfe"/><rect x="1814" y="356.9" width="1" height="1.3" fill="#d4d4d4"/><rect x="1816" y="356.9" width="5" height="1.3" fill="#dcdcaa"/><rect x="1821" y="356.9" width="1" height="1.3" fill="#ffd700"/><rect x="1822" y="356.9" width="3" height="1.3" fill="#ce9178"/><rect x="1826" y="356.9" width="7" height="1.3" fill="#ce9178"/><rect x="1834" y="356.9" width="2" height="1.3" fill="#ce9178"/><rect x="1837" y="356.9" width="4" height="1.3" fill="#ce9178"/><rect x="1842" y="356.9" width="8" height="1.3" fill="#ce9178"/><rect x="1851" y="356.9" width="3" height="1.3" fill="#ce9178"/><rect x="1855" y="356.9" width="3" height="1.3" fill="#ce9178"/><rect x="1858" y="356.9" width="1" height="1.3" fill="#ffd700"/><rect x="1807" y="358.9" width="1" height="1.3" fill="#6a9955"/><rect x="1809" y="358.9" width="5" height="1.3" fill="#6a9955"/><rect x="1815" y="358.9" width="5" height="1.3" fill="#6a9955"/><rect x="1821" y="358.9" width="4" height="1.3" fill="#6a9955"/><rect x="1826" y="358.9" width="3" height="1.3" fill="#6a9955"/><rect x="1830" y="358.9" width="8" height="1.3" fill="#6a9955"/><rect x="1839" y="358.9" width="5" height="1.3" fill="#6a9955"/><rect x="1845" y="358.9" width="5" height="1.3" fill="#6a9955"/><rect x="1851" y="358.9" width="4" height="1.3" fill="#6a9955"/><rect x="1807" y="360.9" width="2" height="1.3" fill="#c586c0"/><rect x="1810" y="360.9" width="18" height="1.3" fill="#9cdcfe"/><rect x="1829" y="360.9" width="2" height="1.3" fill="#d4d4d4"/><rect x="1832" y="360.9" width="3" height="1.3" fill="#ce9178"/><rect x="1835" y="360.9" width="1" height="1.3" fill="#d4d4d4"/><rect x="1811" y="362.9" width="1" height="1.3" fill="#6a9955"/><rect x="1813" y="362.9" width="6" height="1.3" fill="#6a9955"/><rect x="1820" y="362.9" width="5" height="1.3" fill="#6a9955"/><rect x="1811" y="364.9" width="10" height="1.3" fill="#dcdcaa"/><rect x="1821" y="364.9" width="2" height="1.3" fill="#ffd700"/><rect x="1807" y="366.9" width="4" height="1.3" fill="#c586c0"/><rect x="1811" y="366.9" width="1" height="1.3" fill="#d4d4d4"/><rect x="1811" y="368.9" width="1" height="1.3" fill="#6a9955"/><rect x="1813" y="368.9" width="7" height="1.3" fill="#6a9955"/><rect x="1821" y="368.9" width="4" height="1.3" fill="#6a9955"/><rect x="1826" y="368.9" width="1" height="1.3" fill="#6a9955"/><rect x="1811" y="370.9" width="9" height="1.3" fill="#dcdcaa"/><rect x="1820" y="370.9" width="2" height="1.3" fill="#ffd700"/><rect x="1811" y="372.9" width="8" height="1.3" fill="#dcdcaa"/><rect x="1819" y="372.9" width="2" height="1.3" fill="#ffd700"/><rect x="1803" y="376.9" width="2" height="1.3" fill="#c586c0"/><rect x="1806" y="376.9" width="3" height="1.3" fill="#9cdcfe"/><rect x="1810" y="376.9" width="2" height="1.3" fill="#d4d4d4"/><rect x="1813" y="376.9" width="3" height="1.3" fill="#ce9178"/><rect x="1816" y="376.9" width="1" height="1.3" fill="#d4d4d4"/><rect x="1807" y="378.9" width="5" height="1.3" fill="#dcdcaa"/><rect x="1812" y="378.9" width="1" height="1.3" fill="#ffd700"/><rect x="1813" y="378.9" width="9" height="1.3" fill="#ce9178"/><rect x="1823" y="378.9" width="8" height="1.3" fill="#ce9178"/><rect x="1832" y="378.9" width="6" height="1.3" fill="#ce9178"/><rect x="1839" y="378.9" width="5" height="1.3" fill="#ce9178"/><rect x="1845" y="378.9" width="4" height="1.3" fill="#ce9178"/><rect x="1850" y="378.9" width="2" height="1.3" fill="#ce9178"/><rect x="1853" y="378.9" width="2" height="1.3" fill="#ce9178"/><rect x="1855" y="378.9" width="1" height="1.3" fill="#ffd700"/><rect x="1791" y="380.9" width="2" height="1.3" fill="#ce9178"/><rect x="1794" y="380.9" width="4" height="1.3" fill="#ce9178"/><rect x="1799" y="380.9" width="8" height="1.3" fill="#ce9178"/><rect x="1808" y="380.9" width="6" height="1.3" fill="#ce9178"/><rect x="1807" y="382.9" width="1" height="1.3" fill="#6a9955"/><rect x="1809" y="382.9" width="2" height="1.3" fill="#6a9955"/><rect x="1812" y="382.9" width="7" height="1.3" fill="#6a9955"/><rect x="1820" y="382.9" width="3" height="1.3" fill="#6a9955"/><rect x="1807" y="384.9" width="9" height="1.3" fill="#dcdcaa"/><rect x="1816" y="384.9" width="2" height="1.3" fill="#ffd700"/><rect x="1807" y="386.9" width="8" height="1.3" fill="#dcdcaa"/><rect x="1815" y="386.9" width="2" height="1.3" fill="#ffd700"/><rect x="1799" y="390.9" width="2" height="1.3" fill="#c586c0"/><rect x="1802" y="390.9" width="4" height="1.3" fill="#9cdcfe"/><rect x="1807" y="390.9" width="2" height="1.3" fill="#d4d4d4"/><rect x="1810" y="390.9" width="3" height="1.3" fill="#ce9178"/><rect x="1813" y="390.9" width="1" height="1.3" fill="#d4d4d4"/><rect x="1803" y="392.9" width="5" height="1.3" fill="#dcdcaa"/><rect x="1808" y="392.9" width="1" height="1.3" fill="#ffd700"/><rect x="1809" y="392.9" width="5" height="1.3" fill="#ce9178"/><rect x="1815" y="392.9" width="6" height="1.3" fill="#ce9178"/><rect x="1822" y="392.9" width="4" height="1.3" fill="#ce9178"/><rect x="1827" y="392.9" width="2" height="1.3" fill="#ce9178"/><rect x="1829" y="392.9" width="1" height="1.3" fill="#ffd700"/><rect x="1791" y="394.9" width="7" height="1.3" fill="#ce9178"/><rect x="1799" y="394.9" width="8" height="1.3" fill="#ce9178"/><rect x="1808" y="394.9" width="6" height="1.3" fill="#ce9178"/><rect x="1815" y="394.9" width="2" height="1.3" fill="#ce9178"/><rect x="1818" y="394.9" width="7" height="1.3" fill="#ce9178"/><rect x="1826" y="394.9" width="3" height="1.3" fill="#ce9178"/><rect x="1830" y="394.9" width="5" height="1.3" fill="#ce9178"/><rect x="1836" y="394.9" width="5" height="1.3" fill="#ce9178"/><rect x="1842" y="394.9" width="3" height="1.3" fill="#ce9178"/><rect x="1846" y="394.9" width="2" height="1.3" fill="#ce9178"/><rect x="1803" y="396.9" width="1" height="1.3" fill="#6a9955"/><rect x="1805" y="396.9" width="8" height="1.3" fill="#6a9955"/><rect x="1814" y="396.9" width="5" height="1.3" fill="#6a9955"/><rect x="1803" y="398.9" width="9" height="1.3" fill="#dcdcaa"/><rect x="1812" y="398.9" width="2" height="1.3" fill="#ffd700"/><rect x="1803" y="400.9" width="8" height="1.3" fill="#dcdcaa"/><rect x="1811" y="400.9" width="2" height="1.3" fill="#ffd700"/><rect x="1795" y="404.9" width="2" height="1.3" fill="#c586c0"/><rect x="1798" y="404.9" width="4" height="1.3" fill="#9cdcfe"/><rect x="1803" y="404.9" width="2" height="1.3" fill="#d4d4d4"/><rect x="1806" y="404.9" width="3" height="1.3" fill="#ce9178"/><rect x="1809" y="404.9" width="1" height="1.3" fill="#d4d4d4"/><rect x="1799" y="406.9" width="5" height="1.3" fill="#dcdcaa"/><rect x="1804" y="406.9" width="1" height="1.3" fill="#ffd700"/><rect x="1805" y="406.9" width="5" height="1.3" fill="#ce9178"/><rect x="1811" y="406.9" width="3" height="1.3" fill="#ce9178"/><rect x="1815" y="406.9" width="8" height="1.3" fill="#ce9178"/><rect x="1824" y="406.9" width="3" height="1.3" fill="#ce9178"/><rect x="1828" y="406.9" width="8" height="1.3" fill="#ce9178"/><rect x="1837" y="406.9" width="2" height="1.3" fill="#ce9178"/><rect x="1840" y="406.9" width="7" height="1.3" fill="#ce9178"/><rect x="1848" y="406.9" width="2" height="1.3" fill="#ce9178"/><rect x="1851" y="406.9" width="5" height="1.3" fill="#ce9178"/><rect x="1857" y="406.9" width="2" height="1.3" fill="#ce9178"/><rect x="1859" y="406.9" width="1" height="1.3" fill="#ffd700"/><rect x="1799" y="408.9" width="1" height="1.3" fill="#6a9955"/><rect x="1801" y="408.9" width="7" height="1.3" fill="#6a9955"/><rect x="1809" y="408.9" width="6" height="1.3" fill="#6a9955"/><rect x="1816" y="408.9" width="7" height="1.3" fill="#6a9955"/><rect x="1824" y="408.9" width="7" height="1.3" fill="#6a9955"/><rect x="1832" y="408.9" width="6" height="1.3" fill="#6a9955"/><rect x="1799" y="410.9" width="4" height="1.3" fill="#4ec9b0"/><rect x="1803" y="410.9" width="1" height="1.3" fill="#d4d4d4"/><rect x="1804" y="410.9" width="5" height="1.3" fill="#dcdcaa"/><rect x="1809" y="410.9" width="1" height="1.3" fill="#ffd700"/><rect x="1810" y="410.9" width="1" height="1.3" fill="#b5cea8"/><rect x="1811" y="410.9" width="1" height="1.3" fill="#ffd700"/><rect x="1799" y="412.9" width="1" height="1.3" fill="#6a9955"/><rect x="1801" y="412.9" width="4" height="1.3" fill="#6a9955"/><rect x="1806" y="412.9" width="2" height="1.3" fill="#6a9955"/><rect x="1809" y="412.9" width="7" height="1.3" fill="#6a9955"/><rect x="1817" y="412.9" width="3" height="1.3" fill="#6a9955"/><rect x="1821" y="412.9" width="3" height="1.3" fill="#6a9955"/><rect x="1825" y="412.9" width="8" height="1.3" fill="#6a9955"/><rect x="1834" y="412.9" width="4" height="1.3" fill="#6a9955"/><rect x="1799" y="414.9" width="2" height="1.3" fill="#9cdcfe"/><rect x="1802" y="414.9" width="1" height="1.3" fill="#d4d4d4"/><rect x="1804" y="414.9" width="5" height="1.3" fill="#dcdcaa"/><rect x="1809" y="414.9" width="1" height="1.3" fill="#ffd700"/><rect x="1810" y="414.9" width="5" height="1.3" fill="#ce9178"/><rect x="1816" y="414.9" width="3" height="1.3" fill="#ce9178"/><rect x="1820" y="414.9" width="7" height="1.3" fill="#ce9178"/><rect x="1828" y="414.9" width="2" height="1.3" fill="#ce9178"/><rect x="1831" y="414.9" width="8" height="1.3" fill="#ce9178"/><rect x="1840" y="414.9" width="5" height="1.3" fill="#ce9178"/><rect x="1846" y="414.9" width="6" height="1.3" fill="#ce9178"/><rect x="1853" y="414.9" width="7" height="1.3" fill="#ce9178"/><rect x="1861" y="414.9" width="2" height="1.3" fill="#ce9178"/><rect x="1864" y="414.9" width="4" height="1.3" fill="#ce9178"/><rect x="1868" y="414.9" width="1" height="1.3" fill="#ffd700"/><rect x="1799" y="416.9" width="1" height="1.3" fill="#6a9955"/><rect x="1801" y="416.9" width="3" height="1.3" fill="#6a9955"/><rect x="1805" y="416.9" width="4" height="1.3" fill="#6a9955"/><rect x="1810" y="416.9" width="8" height="1.3" fill="#6a9955"/><rect x="1819" y="416.9" width="4" height="1.3" fill="#6a9955"/><rect x="1824" y="416.9" width="3" height="1.3" fill="#6a9955"/><rect x="1799" y="418.9" width="5" height="1.3" fill="#c586c0"/><rect x="1805" y="418.9" width="2" height="1.3" fill="#9cdcfe"/><rect x="1808" y="418.9" width="3" height="1.3" fill="#569cd6"/><rect x="1812" y="418.9" width="2" height="1.3" fill="#569cd6"/><rect x="1815" y="418.9" width="1" height="1.3" fill="#ffd700"/><rect x="1816" y="418.9" width="4" height="1.3" fill="#ce9178"/><rect x="1821" y="418.9" width="3" height="1.3" fill="#ce9178"/><rect x="1824" y="418.9" width="1" height="1.3" fill="#ffd700"/><rect x="1825" y="418.9" width="1" height="1.3" fill="#d4d4d4"/><rect x="1803" y="420.9" width="1" height="1.3" fill="#6a9955"/><rect x="1805" y="420.9" width="7" height="1.3" fill="#6a9955"/><rect x="1813" y="420.9" width="6" height="1.3" fill="#6a9955"/><rect x="1820" y="420.9" width="6" height="1.3" fill="#6a9955"/><rect x="1827" y="420.9" width="6" height="1.3" fill="#6a9955"/><rect x="1834" y="420.9" width="8" height="1.3" fill="#6a9955"/><rect x="1803" y="422.9" width="2" height="1.3" fill="#9cdcfe"/><rect x="1806" y="422.9" width="1" height="1.3" fill="#d4d4d4"/><rect x="1808" y="422.9" width="5" height="1.3" fill="#dcdcaa"/><rect x="1813" y="422.9" width="1" height="1.3" fill="#ffd700"/><rect x="1814" y="422.9" width="4" height="1.3" fill="#ce9178"/><rect x="1819" y="422.9" width="5" height="1.3" fill="#ce9178"/><rect x="1825" y="422.9" width="8" height="1.3" fill="#ce9178"/><rect x="1834" y="422.9" width="8" height="1.3" fill="#ce9178"/><rect x="1842" y="422.9" width="1" height="1.3" fill="#ffd700"/><rect x="1799" y="426.9" width="2" height="1.3" fill="#c586c0"/><rect x="1802" y="426.9" width="2" height="1.3" fill="#9cdcfe"/><rect x="1805" y="426.9" width="2" height="1.3" fill="#d4d4d4"/><rect x="1808" y="426.9" width="3" height="1.3" fill="#ce9178"/><rect x="1811" y="426.9" width="1" height="1.3" fill="#d4d4d4"/><rect x="1803" y="428.9" width="5" height="1.3" fill="#dcdcaa"/><rect x="1808" y="428.9" width="1" height="1.3" fill="#ffd700"/><rect x="1809" y="428.9" width="8" height="1.3" fill="#ce9178"/><rect x="1818" y="428.9" width="3" height="1.3" fill="#ce9178"/><rect x="1822" y="428.9" width="2" height="1.3" fill="#ce9178"/><rect x="1825" y="428.9" width="5" height="1.3" fill="#ce9178"/><rect x="1831" y="428.9" width="7" height="1.3" fill="#ce9178"/><rect x="1839" y="428.9" width="6" height="1.3" fill="#ce9178"/><rect x="1845" y="428.9" width="1" height="1.3" fill="#ffd700"/><rect x="1791" y="430.9" width="3" height="1.3" fill="#ce9178"/><rect x="1795" y="430.9" width="5" height="1.3" fill="#ce9178"/><rect x="1801" y="430.9" width="5" height="1.3" fill="#ce9178"/><rect x="1807" y="430.9" width="3" height="1.3" fill="#ce9178"/><rect x="1811" y="430.9" width="7" height="1.3" fill="#ce9178"/><rect x="1819" y="430.9" width="2" height="1.3" fill="#ce9178"/><rect x="1822" y="430.9" width="4" height="1.3" fill="#ce9178"/><rect x="1803" y="432.9" width="1" height="1.3" fill="#6a9955"/><rect x="1805" y="432.9" width="6" height="1.3" fill="#6a9955"/><rect x="1812" y="432.9" width="4" height="1.3" fill="#6a9955"/><rect x="1803" y="434.9" width="4" height="1.3" fill="#4ec9b0"/><rect x="1807" y="434.9" width="1" height="1.3" fill="#d4d4d4"/><rect x="1808" y="434.9" width="5" height="1.3" fill="#dcdcaa"/><rect x="1813" y="434.9" width="1" height="1.3" fill="#ffd700"/><rect x="1814" y="434.9" width="1" height="1.3" fill="#b5cea8"/><rect x="1815" y="434.9" width="1" height="1.3" fill="#ffd700"/><rect x="1803" y="436.9" width="1" height="1.3" fill="#6a9955"/><rect x="1805" y="436.9" width="7" height="1.3" fill="#6a9955"/><rect x="1813" y="436.9" width="6" height="1.3" fill="#6a9955"/><rect x="1803" y="438.9" width="12" height="1.3" fill="#dcdcaa"/><rect x="1815" y="438.9" width="2" height="1.3" fill="#ffd700"/><rect x="1803" y="440.9" width="1" height="1.3" fill="#6a9955"/><rect x="1805" y="440.9" width="8" height="1.3" fill="#6a9955"/><rect x="1814" y="440.9" width="8" height="1.3" fill="#6a9955"/><rect x="1823" y="440.9" width="4" height="1.3" fill="#6a9955"/><rect x="1828" y="440.9" width="5" height="1.3" fill="#6a9955"/><rect x="1834" y="440.9" width="4" height="1.3" fill="#6a9955"/><rect x="1839" y="440.9" width="3" height="1.3" fill="#6a9955"/><rect x="1803" y="442.9" width="2" height="1.3" fill="#9cdcfe"/><rect x="1806" y="442.9" width="1" height="1.3" fill="#d4d4d4"/><rect x="1808" y="442.9" width="5" height="1.3" fill="#dcdcaa"/><rect x="1813" y="442.9" width="1" height="1.3" fill="#ffd700"/><rect x="1814" y="442.9" width="4" height="1.3" fill="#ce9178"/><rect x="1819" y="442.9" width="2" height="1.3" fill="#ce9178"/><rect x="1822" y="442.9" width="7" height="1.3" fill="#ce9178"/><rect x="1830" y="442.9" width="8" height="1.3" fill="#ce9178"/><rect x="1839" y="442.9" width="8" height="1.3" fill="#ce9178"/><rect x="1847" y="442.9" width="1" height="1.3" fill="#ffd700"/><rect x="1791" y="444.9" width="8" height="1.3" fill="#ce9178"/><rect x="1800" y="444.9" width="7" height="1.3" fill="#ce9178"/><rect x="1808" y="444.9" width="7" height="1.3" fill="#ce9178"/><rect x="1816" y="444.9" width="2" height="1.3" fill="#ce9178"/><rect x="1803" y="446.9" width="1" height="1.3" fill="#6a9955"/><rect x="1805" y="446.9" width="3" height="1.3" fill="#6a9955"/><rect x="1809" y="446.9" width="3" height="1.3" fill="#6a9955"/><rect x="1813" y="446.9" width="5" height="1.3" fill="#6a9955"/><rect x="1819" y="446.9" width="2" height="1.3" fill="#6a9955"/><rect x="1822" y="446.9" width="4" height="1.3" fill="#6a9955"/><rect x="1827" y="446.9" width="4" height="1.3" fill="#6a9955"/><rect x="1803" y="448.9" width="5" height="1.3" fill="#c586c0"/><rect x="1809" y="448.9" width="2" height="1.3" fill="#9cdcfe"/><rect x="1812" y="448.9" width="3" height="1.3" fill="#569cd6"/><rect x="1816" y="448.9" width="2" height="1.3" fill="#569cd6"/><rect x="1819" y="448.9" width="1" height="1.3" fill="#ffd700"/><rect x="1820" y="448.9" width="4" height="1.3" fill="#ce9178"/><rect x="1825" y="448.9" width="3" height="1.3" fill="#ce9178"/><rect x="1828" y="448.9" width="1" height="1.3" fill="#ffd700"/><rect x="1829" y="448.9" width="1" height="1.3" fill="#d4d4d4"/><rect x="1807" y="450.9" width="1" height="1.3" fill="#6a9955"/><rect x="1809" y="450.9" width="8" height="1.3" fill="#6a9955"/><rect x="1818" y="450.9" width="4" height="1.3" fill="#6a9955"/><rect x="1823" y="450.9" width="4" height="1.3" fill="#6a9955"/><rect x="1828" y="450.9" width="7" height="1.3" fill="#6a9955"/><rect x="1836" y="450.9" width="8" height="1.3" fill="#6a9955"/><rect x="1845" y="450.9" width="1" height="1.3" fill="#6a9955"/><rect x="1807" y="452.9" width="2" height="1.3" fill="#9cdcfe"/><rect x="1810" y="452.9" width="1" height="1.3" fill="#d4d4d4"/><rect x="1812" y="452.9" width="5" height="1.3" fill="#dcdcaa"/><rect x="1817" y="452.9" width="1" height="1.3" fill="#ffd700"/><rect x="1818" y="452.9" width="5" height="1.3" fill="#ce9178"/><rect x="1824" y="452.9" width="6" height="1.3" fill="#ce9178"/><rect x="1831" y="452.9" width="2" height="1.3" fill="#ce9178"/><rect x="1834" y="452.9" width="2" height="1.3" fill="#ce9178"/><rect x="1837" y="452.9" width="5" height="1.3" fill="#ce9178"/><rect x="1843" y="452.9" width="3" height="1.3" fill="#ce9178"/><rect x="1846" y="452.9" width="1" height="1.3" fill="#ffd700"/><rect x="1803" y="456.9" width="1" height="1.3" fill="#6a9955"/><rect x="1805" y="456.9" width="6" height="1.3" fill="#6a9955"/><rect x="1812" y="456.9" width="5" height="1.3" fill="#6a9955"/><rect x="1818" y="456.9" width="8" height="1.3" fill="#6a9955"/><rect x="1827" y="456.9" width="4" height="1.3" fill="#6a9955"/><rect x="1832" y="456.9" width="5" height="1.3" fill="#6a9955"/><rect x="1838" y="456.9" width="2" height="1.3" fill="#6a9955"/><rect x="1841" y="456.9" width="3" height="1.3" fill="#6a9955"/><rect x="1845" y="456.9" width="6" height="1.3" fill="#6a9955"/><rect x="1803" y="458.9" width="2" height="1.3" fill="#c586c0"/><rect x="1806" y="458.9" width="2" height="1.3" fill="#9cdcfe"/><rect x="1809" y="458.9" width="2" height="1.3" fill="#d4d4d4"/><rect x="1812" y="458.9" width="3" height="1.3" fill="#ce9178"/><rect x="1815" y="458.9" width="1" height="1.3" fill="#d4d4d4"/><rect x="1807" y="460.9" width="5" height="1.3" fill="#dcdcaa"/><rect x="1812" y="460.9" width="1" height="1.3" fill="#ffd700"/><rect x="1813" y="460.9" width="9" height="1.3" fill="#ce9178"/><rect x="1823" y="460.9" width="2" height="1.3" fill="#ce9178"/><rect x="1826" y="460.9" width="5" height="1.3" fill="#ce9178"/><rect x="1832" y="460.9" width="8" height="1.3" fill="#ce9178"/><rect x="1841" y="460.9" width="2" height="1.3" fill="#ce9178"/><rect x="1844" y="460.9" width="3" height="1.3" fill="#ce9178"/><rect x="1847" y="460.9" width="1" height="1.3" fill="#ffd700"/><rect x="1791" y="462.9" width="6" height="1.3" fill="#ce9178"/><rect x="1798" y="462.9" width="4" height="1.3" fill="#ce9178"/><rect x="1803" y="462.9" width="7" height="1.3" fill="#ce9178"/><rect x="1811" y="462.9" width="8" height="1.3" fill="#ce9178"/><rect x="1807" y="464.9" width="1" height="1.3" fill="#6a9955"/><rect x="1809" y="464.9" width="3" height="1.3" fill="#6a9955"/><rect x="1813" y="464.9" width="5" height="1.3" fill="#6a9955"/><rect x="1819" y="464.9" width="3" height="1.3" fill="#6a9955"/><rect x="1807" y="466.9" width="12" height="1.3" fill="#dcdcaa"/><rect x="1819" y="466.9" width="2" height="1.3" fill="#ffd700"/><rect x="1807" y="468.9" width="5" height="1.3" fill="#dcdcaa"/><rect x="1812" y="468.9" width="1" height="1.3" fill="#ffd700"/><rect x="1813" y="468.9" width="7" height="1.3" fill="#ce9178"/><rect x="1821" y="468.9" width="7" height="1.3" fill="#ce9178"/><rect x="1829" y="468.9" width="6" height="1.3" fill="#ce9178"/><rect x="1836" y="468.9" width="8" height="1.3" fill="#ce9178"/><rect x="1845" y="468.9" width="7" height="1.3" fill="#ce9178"/><rect x="1853" y="468.9" width="8" height="1.3" fill="#ce9178"/><rect x="1861" y="468.9" width="1" height="1.3" fill="#ffd700"/><rect x="1807" y="470.9" width="1" height="1.3" fill="#6a9955"/><rect x="1809" y="470.9" width="5" height="1.3" fill="#6a9955"/><rect x="1815" y="470.9" width="5" height="1.3" fill="#6a9955"/><rect x="1821" y="470.9" width="6" height="1.3" fill="#6a9955"/><rect x="1828" y="470.9" width="7" height="1.3" fill="#6a9955"/><rect x="1836" y="470.9" width="2" height="1.3" fill="#6a9955"/><rect x="1839" y="470.9" width="7" height="1.3" fill="#6a9955"/><rect x="1807" y="472.9" width="2" height="1.3" fill="#9cdcfe"/><rect x="1810" y="472.9" width="1" height="1.3" fill="#d4d4d4"/><rect x="1812" y="472.9" width="5" height="1.3" fill="#dcdcaa"/><rect x="1817" y="472.9" width="1" height="1.3" fill="#ffd700"/><rect x="1818" y="472.9" width="4" height="1.3" fill="#ce9178"/><rect x="1823" y="472.9" width="5" height="1.3" fill="#ce9178"/><rect x="1829" y="472.9" width="6" height="1.3" fill="#ce9178"/><rect x="1836" y="472.9" width="6" height="1.3" fill="#ce9178"/><rect x="1843" y="472.9" width="4" height="1.3" fill="#ce9178"/><rect x="1848" y="472.9" width="8" height="1.3" fill="#ce9178"/><rect x="1857" y="472.9" width="7" height="1.3" fill="#ce9178"/><rect x="1865" y="472.9" width="2" height="1.3" fill="#ce9178"/><rect x="1867" y="472.9" width="1" height="1.3" fill="#ffd700"/><rect x="1807" y="474.9" width="1" height="1.3" fill="#6a9955"/><rect x="1809" y="474.9" width="7" height="1.3" fill="#6a9955"/><rect x="1817" y="474.9" width="3" height="1.3" fill="#6a9955"/><rect x="1821" y="474.9" width="6" height="1.3" fill="#6a9955"/><rect x="1828" y="474.9" width="6" height="1.3" fill="#6a9955"/><rect x="1835" y="474.9" width="1" height="1.3" fill="#6a9955"/><rect x="1807" y="476.9" width="5" height="1.3" fill="#c586c0"/><rect x="1813" y="476.9" width="19" height="1.3" fill="#9cdcfe"/><rect x="1833" y="476.9" width="3" height="1.3" fill="#569cd6"/><rect x="1837" y="476.9" width="2" height="1.3" fill="#569cd6"/><rect x="1840" y="476.9" width="1" height="1.3" fill="#ffd700"/><rect x="1841" y="476.9" width="4" height="1.3" fill="#ce9178"/><rect x="1846" y="476.9" width="3" height="1.3" fill="#ce9178"/><rect x="1849" y="476.9" width="1" height="1.3" fill="#ffd700"/><rect x="1850" y="476.9" width="1" height="1.3" fill="#d4d4d4"/><rect x="1811" y="478.9" width="2" height="1.3" fill="#9cdcfe"/><rect x="1814" y="478.9" width="1" height="1.3" fill="#d4d4d4"/><rect x="1816" y="478.9" width="5" height="1.3" fill="#dcdcaa"/><rect x="1821" y="478.9" width="1" height="1.3" fill="#ffd700"/><rect x="1822" y="478.9" width="7" height="1.3" fill="#ce9178"/><rect x="1830" y="478.9" width="4" height="1.3" fill="#ce9178"/><rect x="1835" y="478.9" width="4" height="1.3" fill="#ce9178"/><rect x="1840" y="478.9" width="7" height="1.3" fill="#ce9178"/><rect x="1848" y="478.9" width="5" height="1.3" fill="#ce9178"/><rect x="1854" y="478.9" width="5" height="1.3" fill="#ce9178"/><rect x="1859" y="478.9" width="1" height="1.3" fill="#ffd700"/><rect x="1807" y="480.9" width="1" height="1.3" fill="#6a9955"/><rect x="1809" y="480.9" width="8" height="1.3" fill="#6a9955"/><rect x="1818" y="480.9" width="6" height="1.3" fill="#6a9955"/><rect x="1825" y="480.9" width="3" height="1.3" fill="#6a9955"/><rect x="1829" y="480.9" width="4" height="1.3" fill="#6a9955"/><rect x="1834" y="480.9" width="8" height="1.3" fill="#6a9955"/><rect x="1843" y="480.9" width="3" height="1.3" fill="#6a9955"/><rect x="1847" y="480.9" width="6" height="1.3" fill="#6a9955"/><rect x="1854" y="480.9" width="1" height="1.3" fill="#6a9955"/><rect x="1807" y="482.9" width="2" height="1.3" fill="#c586c0"/><rect x="1810" y="482.9" width="18" height="1.3" fill="#9cdcfe"/><rect x="1829" y="482.9" width="2" height="1.3" fill="#d4d4d4"/><rect x="1832" y="482.9" width="3" height="1.3" fill="#ce9178"/><rect x="1835" y="482.9" width="1" height="1.3" fill="#d4d4d4"/><rect x="1811" y="484.9" width="1" height="1.3" fill="#6a9955"/><rect x="1813" y="484.9" width="4" height="1.3" fill="#6a9955"/><rect x="1818" y="484.9" width="6" height="1.3" fill="#6a9955"/><rect x="1825" y="484.9" width="2" height="1.3" fill="#6a9955"/><rect x="1811" y="486.9" width="10" height="1.3" fill="#dcdcaa"/><rect x="1821" y="486.9" width="2" height="1.3" fill="#ffd700"/><rect x="1807" y="488.9" width="4" height="1.3" fill="#c586c0"/><rect x="1811" y="488.9" width="1" height="1.3" fill="#d4d4d4"/><rect x="1811" y="490.9" width="1" height="1.3" fill="#6a9955"/><rect x="1813" y="490.9" width="3" height="1.3" fill="#6a9955"/><rect x="1817" y="490.9" width="5" height="1.3" fill="#6a9955"/><rect x="1823" y="490.9" width="4" height="1.3" fill="#6a9955"/><rect x="1811" y="492.9" width="9" height="1.3" fill="#dcdcaa"/><rect x="1820" y="492.9" width="2" height="1.3" fill="#ffd700"/><rect x="1811" y="494.9" width="8" height="1.3" fill="#dcdcaa"/><rect x="1819" y="494.9" width="2" height="1.3" fill="#ffd700"/><rect x="1803" y="498.9" width="2" height="1.3" fill="#c586c0"/><rect x="1806" y="498.9" width="3" height="1.3" fill="#9cdcfe"/><rect x="1810" y="498.9" width="2" height="1.3" fill="#d4d4d4"/><rect x="1813" y="498.9" width="3" height="1.3" fill="#ce9178"/><rect x="1816" y="498.9" width="1" height="1.3" fill="#d4d4d4"/><rect x="1807" y="500.9" width="5" height="1.3" fill="#dcdcaa"/><rect x="1812" y="500.9" width="1" height="1.3" fill="#ffd700"/><rect x="1813" y="500.9" width="3" height="1.3" fill="#ce9178"/><rect x="1817" y="500.9" width="6" height="1.3" fill="#ce9178"/><rect x="1824" y="500.9" width="2" height="1.3" fill="#ce9178"/><rect x="1827" y="500.9" width="6" height="1.3" fill="#ce9178"/><rect x="1834" y="500.9" width="5" height="1.3" fill="#ce9178"/><rect x="1840" y="500.9" width="3" height="1.3" fill="#ce9178"/><rect x="1843" y="500.9" width="1" height="1.3" fill="#ffd700"/><rect x="1791" y="502.9" width="6" height="1.3" fill="#ce9178"/><rect x="1798" y="502.9" width="2" height="1.3" fill="#ce9178"/><rect x="1801" y="502.9" width="6" height="1.3" fill="#ce9178"/><rect x="1808" y="502.9" width="5" height="1.3" fill="#ce9178"/><rect x="1814" y="502.9" width="5" height="1.3" fill="#ce9178"/><rect x="1807" y="504.9" width="1" height="1.3" fill="#6a9955"/><rect x="1809" y="504.9" width="8" height="1.3" fill="#6a9955"/><rect x="1818" y="504.9" width="5" height="1.3" fill="#6a9955"/><rect x="1807" y="506.9" width="9" height="1.3" fill="#dcdcaa"/><rect x="1816" y="506.9" width="2" height="1.3" fill="#ffd700"/><rect x="1807" y="508.9" width="8" height="1.3" fill="#dcdcaa"/><rect x="1815" y="508.9" width="2" height="1.3" fill="#ffd700"/><rect x="1799" y="512.9" width="2" height="1.3" fill="#c586c0"/><rect x="1802" y="512.9" width="4" height="1.3" fill="#9cdcfe"/><rect x="1807" y="512.9" width="2" height="1.3" fill="#d4d4d4"/><rect x="1810" y="512.9" width="3" height="1.3" fill="#ce9178"/><rect x="1813" y="512.9" width="1" height="1.3" fill="#d4d4d4"/><rect x="1803" y="514.9" width="5" height="1.3" fill="#dcdcaa"/><rect x="1808" y="514.9" width="1" height="1.3" fill="#ffd700"/><rect x="1809" y="514.9" width="3" height="1.3" fill="#ce9178"/><rect x="1813" y="514.9" width="5" height="1.3" fill="#ce9178"/><rect x="1819" y="514.9" width="2" height="1.3" fill="#ce9178"/><rect x="1822" y="514.9" width="7" height="1.3" fill="#ce9178"/><rect x="1830" y="514.9" width="3" height="1.3" fill="#ce9178"/><rect x="1834" y="514.9" width="2" height="1.3" fill="#ce9178"/><rect x="1837" y="514.9" width="6" height="1.3" fill="#ce9178"/><rect x="1844" y="514.9" width="5" height="1.3" fill="#ce9178"/><rect x="1850" y="514.9" width="6" height="1.3" fill="#ce9178"/><rect x="1856" y="514.9" width="1" height="1.3" fill="#ffd700"/><rect x="1803" y="516.9" width="1" height="1.3" fill="#6a9955"/><rect x="1805" y="516.9" width="8" height="1.3" fill="#6a9955"/><rect x="1814" y="516.9" width="5" height="1.3" fill="#6a9955"/><rect x="1803" y="518.9" width="9" height="1.3" fill="#dcdcaa"/><rect x="1812" y="518.9" width="2" height="1.3" fill="#ffd700"/><rect x="1803" y="520.9" width="8" height="1.3" fill="#dcdcaa"/><rect x="1811" y="520.9" width="2" height="1.3" fill="#ffd700"/><rect x="1791" y="526.9" width="1" height="1.3" fill="#6a9955"/><rect x="1793" y="526.9" width="4" height="1.3" fill="#6a9955"/><rect x="1798" y="526.9" width="3" height="1.3" fill="#6a9955"/><rect x="1802" y="526.9" width="5" height="1.3" fill="#6a9955"/><rect x="1808" y="526.9" width="5" height="1.3" fill="#6a9955"/><rect x="1814" y="526.9" width="3" height="1.3" fill="#6a9955"/><rect x="1818" y="526.9" width="3" height="1.3" fill="#6a9955"/><rect x="1791" y="528.9" width="3" height="1.3" fill="#569cd6"/><rect x="1795" y="528.9" width="14" height="1.3" fill="#dcdcaa"/><rect x="1809" y="528.9" width="1" height="1.3" fill="#ffd700"/><rect x="1810" y="528.9" width="1" height="1.3" fill="#ffd700"/><rect x="1811" y="528.9" width="1" height="1.3" fill="#d4d4d4"/><rect x="1795" y="530.9" width="1" height="1.3" fill="#6a9955"/><rect x="1797" y="530.9" width="5" height="1.3" fill="#6a9955"/><rect x="1803" y="530.9" width="8" height="1.3" fill="#6a9955"/><rect x="1812" y="530.9" width="5" height="1.3" fill="#6a9955"/><rect x="1818" y="530.9" width="6" height="1.3" fill="#6a9955"/><rect x="1825" y="530.9" width="4" height="1.3" fill="#6a9955"/><rect x="1795" y="532.9" width="3" height="1.3" fill="#569cd6"/><rect x="1799" y="532.9" width="10" height="1.3" fill="#dcdcaa"/><rect x="1809" y="532.9" width="3" height="1.3" fill="#ffd700"/><rect x="1799" y="534.9" width="5" height="1.3" fill="#dcdcaa"/><rect x="1804" y="534.9" width="1" height="1.3" fill="#ffd700"/><rect x="1805" y="534.9" width="3" height="1.3" fill="#ce9178"/><rect x="1809" y="534.9" width="3" height="1.3" fill="#ce9178"/><rect x="1813" y="534.9" width="5" height="1.3" fill="#ce9178"/><rect x="1819" y="534.9" width="6" height="1.3" fill="#ce9178"/><rect x="1826" y="534.9" width="2" height="1.3" fill="#ce9178"/><rect x="1829" y="534.9" width="4" height="1.3" fill="#ce9178"/><rect x="1834" y="534.9" width="3" height="1.3" fill="#ce9178"/><rect x="1838" y="534.9" width="8" height="1.3" fill="#ce9178"/><rect x="1846" y="534.9" width="1" height="1.3" fill="#ffd700"/><rect x="1799" y="536.9" width="5" height="1.3" fill="#dcdcaa"/><rect x="1804" y="536.9" width="1" height="1.3" fill="#ffd700"/><rect x="1805" y="536.9" width="9" height="1.3" fill="#ce9178"/><rect x="1815" y="536.9" width="2" height="1.3" fill="#ce9178"/><rect x="1818" y="536.9" width="2" height="1.3" fill="#ce9178"/><rect x="1821" y="536.9" width="3" height="1.3" fill="#ce9178"/><rect x="1825" y="536.9" width="4" height="1.3" fill="#ce9178"/><rect x="1829" y="536.9" width="1" height="1.3" fill="#ffd700"/><rect x="1795" y="540.9" width="5" height="1.3" fill="#9cdcfe"/><rect x="1801" y="540.9" width="1" height="1.3" fill="#d4d4d4"/><rect x="1803" y="540.9" width="1" height="1.3" fill="#b5cea8"/><rect x="1795" y="544.9" width="1" height="1.3" fill="#6a9955"/><rect x="1797" y="544.9" width="3" height="1.3" fill="#6a9955"/><rect x="1801" y="544.9" width="2" height="1.3" fill="#6a9955"/><rect x="1804" y="544.9" width="7" height="1.3" fill="#6a9955"/><rect x="1812" y="544.9" width="4" height="1.3" fill="#6a9955"/><rect x="1817" y="544.9" width="4" height="1.3" fill="#6a9955"/><rect x="1822" y="544.9" width="2" height="1.3" fill="#6a9955"/><rect x="1795" y="546.9" width="3" height="1.3" fill="#569cd6"/><rect x="1799" y="546.9" width="13" height="1.3" fill="#dcdcaa"/><rect x="1812" y="546.9" width="3" height="1.3" fill="#ffd700"/><rect x="1799" y="548.9" width="6" height="1.3" fill="#569cd6"/><rect x="1806" y="548.9" width="7" height="1.3" fill="#9cdcfe"/><rect x="1799" y="550.9" width="5" height="1.3" fill="#9cdcfe"/><rect x="1805" y="550.9" width="1" height="1.3" fill="#d4d4d4"/><rect x="1807" y="550.9" width="1" height="1.3" fill="#b5cea8"/><rect x="1799" y="552.9" width="5" height="1.3" fill="#dcdcaa"/><rect x="1804" y="552.9" width="1" height="1.3" fill="#ffd700"/><rect x="1805" y="552.9" width="5" height="1.3" fill="#ce9178"/><rect x="1811" y="552.9" width="3" height="1.3" fill="#ce9178"/><rect x="1815" y="552.9" width="6" height="1.3" fill="#ce9178"/><rect x="1822" y="552.9" width="6" height="1.3" fill="#ce9178"/><rect x="1828" y="552.9" width="1" height="1.3" fill="#ffd700"/><rect x="1795" y="556.9" width="5" height="1.3" fill="#dcdcaa"/><rect x="1800" y="556.9" width="1" height="1.3" fill="#ffd700"/><rect x="1801" y="556.9" width="3" height="1.3" fill="#ce9178"/><rect x="1805" y="556.9" width="5" height="1.3" fill="#ce9178"/><rect x="1811" y="556.9" width="7" height="1.3" fill="#ce9178"/><rect x="1819" y="556.9" width="6" height="1.3" fill="#ce9178"/><rect x="1826" y="556.9" width="2" height="1.3" fill="#ce9178"/><rect x="1829" y="556.9" width="8" height="1.3" fill="#ce9178"/><rect x="1837" y="556.9" width="1" height="1.3" fill="#ffd700"/><rect x="1795" y="558.9" width="1" height="1.3" fill="#6a9955"/><rect x="1797" y="558.9" width="6" height="1.3" fill="#6a9955"/><rect x="1804" y="558.9" width="4" height="1.3" fill="#6a9955"/><rect x="1795" y="560.9" width="4" height="1.3" fill="#4ec9b0"/><rect x="1799" y="560.9" width="1" height="1.3" fill="#d4d4d4"/><rect x="1800" y="560.9" width="5" height="1.3" fill="#dcdcaa"/><rect x="1805" y="560.9" width="1" height="1.3" fill="#ffd700"/><rect x="1806" y="560.9" width="1" height="1.3" fill="#b5cea8"/><rect x="1807" y="560.9" width="1" height="1.3" fill="#ffd700"/><rect x="1795" y="562.9" width="5" height="1.3" fill="#dcdcaa"/><rect x="1800" y="562.9" width="1" height="1.3" fill="#ffd700"/><rect x="1801" y="562.9" width="5" height="1.3" fill="#ce9178"/><rect x="1807" y="562.9" width="7" height="1.3" fill="#ce9178"/><rect x="1815" y="562.9" width="3" height="1.3" fill="#ce9178"/><rect x="1819" y="562.9" width="7" height="1.3" fill="#ce9178"/><rect x="1827" y="562.9" width="4" height="1.3" fill="#ce9178"/><rect x="1831" y="562.9" width="1" height="1.3" fill="#ffd700"/><rect x="1791" y="564.9" width="5" height="1.3" fill="#ce9178"/><rect x="1797" y="564.9" width="2" height="1.3" fill="#ce9178"/><rect x="1800" y="564.9" width="5" height="1.3" fill="#ce9178"/><rect x="1806" y="564.9" width="7" height="1.3" fill="#ce9178"/><rect x="1814" y="564.9" width="5" height="1.3" fill="#ce9178"/><rect x="1820" y="564.9" width="8" height="1.3" fill="#ce9178"/><rect x="1829" y="564.9" width="5" height="1.3" fill="#ce9178"/><rect x="1795" y="566.9" width="1" height="1.3" fill="#6a9955"/><rect x="1797" y="566.9" width="6" height="1.3" fill="#6a9955"/><rect x="1804" y="566.9" width="3" height="1.3" fill="#6a9955"/><rect x="1795" y="568.9" width="4" height="1.3" fill="#4ec9b0"/><rect x="1799" y="568.9" width="1" height="1.3" fill="#d4d4d4"/><rect x="1800" y="568.9" width="5" height="1.3" fill="#dcdcaa"/><rect x="1805" y="568.9" width="1" height="1.3" fill="#ffd700"/><rect x="1806" y="568.9" width="1" height="1.3" fill="#b5cea8"/><rect x="1807" y="568.9" width="1" height="1.3" fill="#ffd700"/><rect x="1795" y="570.9" width="1" height="1.3" fill="#6a9955"/><rect x="1797" y="570.9" width="6" height="1.3" fill="#6a9955"/><rect x="1804" y="570.9" width="3" height="1.3" fill="#6a9955"/><rect x="1808" y="570.9" width="8" height="1.3" fill="#6a9955"/><rect x="1817" y="570.9" width="7" height="1.3" fill="#6a9955"/><rect x="1825" y="570.9" width="6" height="1.3" fill="#6a9955"/><rect x="1832" y="570.9" width="2" height="1.3" fill="#6a9955"/><rect x="1795" y="572.9" width="2" height="1.3" fill="#9cdcfe"/><rect x="1798" y="572.9" width="1" height="1.3" fill="#d4d4d4"/><rect x="1800" y="572.9" width="5" height="1.3" fill="#dcdcaa"/><rect x="1805" y="572.9" width="1" height="1.3" fill="#ffd700"/><rect x="1806" y="572.9" width="3" height="1.3" fill="#ce9178"/><rect x="1810" y="572.9" width="3" height="1.3" fill="#ce9178"/><rect x="1814" y="572.9" width="4" height="1.3" fill="#ce9178"/><rect x="1819" y="572.9" width="2" height="1.3" fill="#ce9178"/><rect x="1822" y="572.9" width="6" height="1.3" fill="#ce9178"/><rect x="1829" y="572.9" width="4" height="1.3" fill="#ce9178"/><rect x="1834" y="572.9" width="2" height="1.3" fill="#ce9178"/><rect x="1837" y="572.9" width="3" height="1.3" fill="#ce9178"/><rect x="1840" y="572.9" width="2" height="1.3" fill="#d7ba7d"/><rect x="1842" y="572.9" width="1" height="1.3" fill="#ce9178"/><rect x="1843" y="572.9" width="1" height="1.3" fill="#ffd700"/><rect x="1795" y="574.9" width="1" height="1.3" fill="#6a9955"/><rect x="1797" y="574.9" width="8" height="1.3" fill="#6a9955"/><rect x="1806" y="574.9" width="3" height="1.3" fill="#6a9955"/><rect x="1810" y="574.9" width="6" height="1.3" fill="#6a9955"/><rect x="1817" y="574.9" width="6" height="1.3" fill="#6a9955"/><rect x="1795" y="576.9" width="5" height="1.3" fill="#c586c0"/><rect x="1801" y="576.9" width="2" height="1.3" fill="#9cdcfe"/><rect x="1803" y="576.9" width="1" height="1.3" fill="#d4d4d4"/><rect x="1804" y="576.9" width="5" height="1.3" fill="#dcdcaa"/><rect x="1809" y="576.9" width="1" height="1.3" fill="#ffd700"/><rect x="1810" y="576.9" width="1" height="1.3" fill="#ffd700"/><rect x="1812" y="576.9" width="3" height="1.3" fill="#569cd6"/><rect x="1816" y="576.9" width="2" height="1.3" fill="#569cd6"/><rect x="1819" y="576.9" width="1" height="1.3" fill="#ffd700"/><rect x="1820" y="576.9" width="5" height="1.3" fill="#ce9178"/><rect x="1825" y="576.9" width="1" height="1.3" fill="#d4d4d4"/><rect x="1827" y="576.9" width="4" height="1.3" fill="#ce9178"/><rect x="1831" y="576.9" width="1" height="1.3" fill="#ffd700"/><rect x="1832" y="576.9" width="1" height="1.3" fill="#d4d4d4"/><rect x="1799" y="578.9" width="1" height="1.3" fill="#6a9955"/><rect x="1801" y="578.9" width="8" height="1.3" fill="#6a9955"/><rect x="1810" y="578.9" width="2" height="1.3" fill="#6a9955"/><rect x="1813" y="578.9" width="4" height="1.3" fill="#6a9955"/><rect x="1818" y="578.9" width="3" height="1.3" fill="#6a9955"/><rect x="1822" y="578.9" width="6" height="1.3" fill="#6a9955"/><rect x="1829" y="578.9" width="2" height="1.3" fill="#6a9955"/><rect x="1832" y="578.9" width="6" height="1.3" fill="#6a9955"/><rect x="1799" y="580.9" width="2" height="1.3" fill="#9cdcfe"/><rect x="1802" y="580.9" width="1" height="1.3" fill="#d4d4d4"/><rect x="1804" y="580.9" width="5" height="1.3" fill="#dcdcaa"/><rect x="1809" y="580.9" width="1" height="1.3" fill="#ffd700"/><rect x="1810" y="580.9" width="7" height="1.3" fill="#ce9178"/><rect x="1818" y="580.9" width="6" height="1.3" fill="#ce9178"/><rect x="1825" y="580.9" width="4" height="1.3" fill="#ce9178"/><rect x="1830" y="580.9" width="5" height="1.3" fill="#ce9178"/><rect x="1836" y="580.9" width="2" height="1.3" fill="#ce9178"/><rect x="1839" y="580.9" width="4" height="1.3" fill="#ce9178"/><rect x="1843" y="580.9" width="2" height="1.3" fill="#d7ba7d"/><rect x="1845" y="580.9" width="1" height="1.3" fill="#ce9178"/><rect x="1846" y="580.9" width="1" height="1.3" fill="#ffd700"/><rect x="1795" y="582.9" width="1" height="1.3" fill="#6a9955"/><rect x="1797" y="582.9" width="2" height="1.3" fill="#6a9955"/><rect x="1800" y="582.9" width="9" height="1.3" fill="#6a9955"/><rect x="1810" y="582.9" width="2" height="1.3" fill="#6a9955"/><rect x="1813" y="582.9" width="5" height="1.3" fill="#6a9955"/><rect x="1819" y="582.9" width="3" height="1.3" fill="#6a9955"/><rect x="1823" y="582.9" width="6" height="1.3" fill="#6a9955"/><rect x="1830" y="582.9" width="2" height="1.3" fill="#6a9955"/><rect x="1833" y="582.9" width="3" height="1.3" fill="#6a9955"/><rect x="1837" y="582.9" width="6" height="1.3" fill="#6a9955"/><rect x="1795" y="584.9" width="2" height="1.3" fill="#c586c0"/><rect x="1798" y="584.9" width="2" height="1.3" fill="#9cdcfe"/><rect x="1800" y="584.9" width="1" height="1.3" fill="#d4d4d4"/><rect x="1801" y="584.9" width="5" height="1.3" fill="#dcdcaa"/><rect x="1806" y="584.9" width="1" height="1.3" fill="#ffd700"/><rect x="1807" y="584.9" width="1" height="1.3" fill="#ffd700"/><rect x="1809" y="584.9" width="2" height="1.3" fill="#d4d4d4"/><rect x="1812" y="584.9" width="4" height="1.3" fill="#ce9178"/><rect x="1816" y="584.9" width="1" height="1.3" fill="#d4d4d4"/><rect x="1799" y="586.9" width="1" height="1.3" fill="#6a9955"/><rect x="1801" y="586.9" width="9" height="1.3" fill="#6a9955"/><rect x="1811" y="586.9" width="4" height="1.3" fill="#6a9955"/><rect x="1799" y="588.9" width="9" height="1.3" fill="#dcdcaa"/><rect x="1808" y="588.9" width="1" height="1.3" fill="#ffd700"/><rect x="1809" y="588.9" width="1" height="1.3" fill="#ffd700"/><rect x="1799" y="590.9" width="6" height="1.3" fill="#c586c0"/><rect x="1795" y="594.9" width="5" height="1.3" fill="#dcdcaa"/><rect x="1800" y="594.9" width="1" height="1.3" fill="#ffd700"/><rect x="1801" y="594.9" width="5" height="1.3" fill="#ce9178"/><rect x="1807" y="594.9" width="6" height="1.3" fill="#ce9178"/><rect x="1814" y="594.9" width="2" height="1.3" fill="#ce9178"/><rect x="1817" y="594.9" width="3" height="1.3" fill="#ce9178"/><rect x="1821" y="594.9" width="8" height="1.3" fill="#ce9178"/><rect x="1830" y="594.9" width="2" height="1.3" fill="#ce9178"/><rect x="1833" y="594.9" width="3" height="1.3" fill="#ce9178"/><rect x="1837" y="594.9" width="9" height="1.3" fill="#ce9178"/><rect x="1847" y="594.9" width="8" height="1.3" fill="#ce9178"/><rect x="1855" y="594.9" width="1" height="1.3" fill="#ffd700"/><rect x="1795" y="596.9" width="1" height="1.3" fill="#6a9955"/><rect x="1797" y="596.9" width="5" height="1.3" fill="#6a9955"/><rect x="1803" y="596.9" width="5" height="1.3" fill="#6a9955"/><rect x="1795" y="598.9" width="4" height="1.3" fill="#4ec9b0"/><rect x="1799" y="598.9" width="1" height="1.3" fill="#d4d4d4"/><rect x="1800" y="598.9" width="5" height="1.3" fill="#dcdcaa"/><rect x="1805" y="598.9" width="1" height="1.3" fill="#ffd700"/><rect x="1806" y="598.9" width="1" height="1.3" fill="#b5cea8"/><rect x="1807" y="598.9" width="1" height="1.3" fill="#ffd700"/><rect x="1795" y="600.9" width="1" height="1.3" fill="#6a9955"/><rect x="1797" y="600.9" width="8" height="1.3" fill="#6a9955"/><rect x="1806" y="600.9" width="2" height="1.3" fill="#6a9955"/><rect x="1809" y="600.9" width="4" height="1.3" fill="#6a9955"/><rect x="1814" y="600.9" width="3" height="1.3" fill="#6a9955"/><rect x="1818" y="600.9" width="6" height="1.3" fill="#6a9955"/><rect x="1825" y="600.9" width="2" height="1.3" fill="#6a9955"/><rect x="1828" y="600.9" width="6" height="1.3" fill="#6a9955"/><rect x="1795" y="602.9" width="2" height="1.3" fill="#9cdcfe"/><rect x="1798" y="602.9" width="1" height="1.3" fill="#d4d4d4"/><rect x="1800" y="602.9" width="5" height="1.3" fill="#dcdcaa"/><rect x="1805" y="602.9" width="1" height="1.3" fill="#ffd700"/><rect x="1806" y="602.9" width="4" height="1.3" fill="#ce9178"/><rect x="1811" y="602.9" width="5" height="1.3" fill="#ce9178"/><rect x="1817" y="602.9" width="3" height="1.3" fill="#ce9178"/><rect x="1821" y="602.9" width="6" height="1.3" fill="#ce9178"/><rect x="1827" y="602.9" width="2" height="1.3" fill="#d7ba7d"/><rect x="1829" y="602.9" width="3" height="1.3" fill="#ce9178"/><rect x="1833" y="602.9" width="4" height="1.3" fill="#ce9178"/><rect x="1838" y="602.9" width="3" height="1.3" fill="#ce9178"/><rect x="1842" y="602.9" width="1" height="1.3" fill="#ce9178"/><rect x="1844" y="602.9" width="5" height="1.3" fill="#ce9178"/><rect x="1849" y="602.9" width="2" height="1.3" fill="#d7ba7d"/><rect x="1851" y="602.9" width="1" height="1.3" fill="#ce9178"/><rect x="1852" y="602.9" width="1" height="1.3" fill="#ffd700"/><rect x="1795" y="604.9" width="1" height="1.3" fill="#6a9955"/><rect x="1797" y="604.9" width="8" height="1.3" fill="#6a9955"/><rect x="1806" y="604.9" width="3" height="1.3" fill="#6a9955"/><rect x="1810" y="604.9" width="6" height="1.3" fill="#6a9955"/><rect x="1817" y="604.9" width="6" height="1.3" fill="#6a9955"/><rect x="1795" y="606.9" width="5" height="1.3" fill="#c586c0"/><rect x="1801" y="606.9" width="2" height="1.3" fill="#9cdcfe"/><rect x="1804" y="606.9" width="3" height="1.3" fill="#569cd6"/><rect x="1808" y="606.9" width="2" height="1.3" fill="#569cd6"/><rect x="1811" y="606.9" width="1" height="1.3" fill="#ffd700"/><rect x="1812" y="606.9" width="3" height="1.3" fill="#ce9178"/><rect x="1815" y="606.9" width="1" height="1.3" fill="#d4d4d4"/><rect x="1817" y="606.9" width="3" height="1.3" fill="#ce9178"/><rect x="1820" y="606.9" width="1" height="1.3" fill="#ffd700"/><rect x="1821" y="606.9" width="1" height="1.3" fill="#d4d4d4"/><rect x="1799" y="608.9" width="2" height="1.3" fill="#9cdcfe"/><rect x="1802" y="608.9" width="1" height="1.3" fill="#d4d4d4"/><rect x="1804" y="608.9" width="5" height="1.3" fill="#dcdcaa"/><rect x="1809" y="608.9" width="1" height="1.3" fill="#ffd700"/><rect x="1810" y="608.9" width="7" height="1.3" fill="#ce9178"/><rect x="1818" y="608.9" width="6" height="1.3" fill="#ce9178"/><rect x="1825" y="608.9" width="3" height="1.3" fill="#ce9178"/><rect x="1829" y="608.9" width="2" height="1.3" fill="#ce9178"/><rect x="1832" y="608.9" width="3" height="1.3" fill="#ce9178"/><rect x="1835" y="608.9" width="2" height="1.3" fill="#d7ba7d"/><rect x="1837" y="608.9" width="1" height="1.3" fill="#ce9178"/><rect x="1838" y="608.9" width="1" height="1.3" fill="#ffd700"/><rect x="1795" y="610.9" width="1" height="1.3" fill="#6a9955"/><rect x="1797" y="610.9" width="2" height="1.3" fill="#6a9955"/><rect x="1800" y="610.9" width="9" height="1.3" fill="#6a9955"/><rect x="1810" y="610.9" width="2" height="1.3" fill="#6a9955"/><rect x="1813" y="610.9" width="5" height="1.3" fill="#6a9955"/><rect x="1819" y="610.9" width="3" height="1.3" fill="#6a9955"/><rect x="1823" y="610.9" width="6" height="1.3" fill="#6a9955"/><rect x="1830" y="610.9" width="2" height="1.3" fill="#6a9955"/><rect x="1833" y="610.9" width="3" height="1.3" fill="#6a9955"/><rect x="1837" y="610.9" width="6" height="1.3" fill="#6a9955"/><rect x="1795" y="612.9" width="2" height="1.3" fill="#c586c0"/><rect x="1798" y="612.9" width="2" height="1.3" fill="#9cdcfe"/><rect x="1801" y="612.9" width="2" height="1.3" fill="#d4d4d4"/><rect x="1804" y="612.9" width="3" height="1.3" fill="#ce9178"/><rect x="1807" y="612.9" width="1" height="1.3" fill="#d4d4d4"/><rect x="1799" y="614.9" width="5" height="1.3" fill="#dcdcaa"/><rect x="1804" y="614.9" width="1" height="1.3" fill="#ffd700"/><rect x="1805" y="614.9" width="5" height="1.3" fill="#ce9178"/><rect x="1811" y="614.9" width="6" height="1.3" fill="#ce9178"/><rect x="1818" y="614.9" width="3" height="1.3" fill="#ce9178"/><rect x="1822" y="614.9" width="6" height="1.3" fill="#ce9178"/><rect x="1829" y="614.9" width="3" height="1.3" fill="#ce9178"/><rect x="1833" y="614.9" width="10" height="1.3" fill="#ce9178"/><rect x="1844" y="614.9" width="7" height="1.3" fill="#ce9178"/><rect x="1852" y="614.9" width="11" height="1.3" fill="#ce9178"/><rect x="1863" y="614.9" width="1" height="1.3" fill="#ffd700"/><rect x="1799" y="616.9" width="1" height="1.3" fill="#6a9955"/><rect x="1801" y="616.9" width="5" height="1.3" fill="#6a9955"/><rect x="1807" y="616.9" width="5" height="1.3" fill="#6a9955"/><rect x="1799" y="618.9" width="4" height="1.3" fill="#4ec9b0"/><rect x="1803" y="618.9" width="1" height="1.3" fill="#d4d4d4"/><rect x="1804" y="618.9" width="5" height="1.3" fill="#dcdcaa"/><rect x="1809" y="618.9" width="1" height="1.3" fill="#ffd700"/><rect x="1810" y="618.9" width="1" height="1.3" fill="#b5cea8"/><rect x="1811" y="618.9" width="1" height="1.3" fill="#ffd700"/><rect x="1799" y="620.9" width="1" height="1.3" fill="#6a9955"/><rect x="1801" y="620.9" width="9" height="1.3" fill="#6a9955"/><rect x="1811" y="620.9" width="4" height="1.3" fill="#6a9955"/><rect x="1799" y="622.9" width="12" height="1.3" fill="#dcdcaa"/><rect x="1811" y="622.9" width="1" height="1.3" fill="#ffd700"/><rect x="1812" y="622.9" width="1" height="1.3" fill="#ffd700"/><rect x="1799" y="624.9" width="1" height="1.3" fill="#6a9955"/><rect x="1801" y="624.9" width="8" height="1.3" fill="#6a9955"/><rect x="1810" y="624.9" width="2" height="1.3" fill="#6a9955"/><rect x="1813" y="624.9" width="4" height="1.3" fill="#6a9955"/><rect x="1818" y="624.9" width="3" height="1.3" fill="#6a9955"/><rect x="1822" y="624.9" width="6" height="1.3" fill="#6a9955"/><rect x="1829" y="624.9" width="2" height="1.3" fill="#6a9955"/><rect x="1832" y="624.9" width="6" height="1.3" fill="#6a9955"/><rect x="1799" y="626.9" width="2" height="1.3" fill="#9cdcfe"/><rect x="1802" y="626.9" width="1" height="1.3" fill="#d4d4d4"/><rect x="1804" y="626.9" width="5" height="1.3" fill="#dcdcaa"/><rect x="1809" y="626.9" width="1" height="1.3" fill="#ffd700"/><rect x="1810" y="626.9" width="4" height="1.3" fill="#ce9178"/><rect x="1815" y="626.9" width="6" height="1.3" fill="#ce9178"/><rect x="1822" y="626.9" width="3" height="1.3" fill="#ce9178"/><rect x="1826" y="626.9" width="9" height="1.3" fill="#ce9178"/><rect x="1835" y="626.9" width="2" height="1.3" fill="#d7ba7d"/><rect x="1837" y="626.9" width="3" height="1.3" fill="#ce9178"/><rect x="1841" y="626.9" width="4" height="1.3" fill="#ce9178"/><rect x="1846" y="626.9" width="7" height="1.3" fill="#ce9178"/><rect x="1854" y="626.9" width="4" height="1.3" fill="#ce9178"/><rect x="1858" y="626.9" width="2" height="1.3" fill="#d7ba7d"/><rect x="1860" y="626.9" width="1" height="1.3" fill="#ce9178"/><rect x="1861" y="626.9" width="1" height="1.3" fill="#ffd700"/><rect x="1799" y="628.9" width="1" height="1.3" fill="#6a9955"/><rect x="1801" y="628.9" width="8" height="1.3" fill="#6a9955"/><rect x="1810" y="628.9" width="3" height="1.3" fill="#6a9955"/><rect x="1814" y="628.9" width="6" height="1.3" fill="#6a9955"/><rect x="1821" y="628.9" width="6" height="1.3" fill="#6a9955"/><rect x="1799" y="630.9" width="5" height="1.3" fill="#c586c0"/><rect x="1805" y="630.9" width="2" height="1.3" fill="#9cdcfe"/><rect x="1808" y="630.9" width="3" height="1.3" fill="#569cd6"/><rect x="1812" y="630.9" width="2" height="1.3" fill="#569cd6"/><rect x="1815" y="630.9" width="1" height="1.3" fill="#ffd700"/><rect x="1816" y="630.9" width="3" height="1.3" fill="#ce9178"/><rect x="1819" y="630.9" width="1" height="1.3" fill="#d4d4d4"/><rect x="1821" y="630.9" width="3" height="1.3" fill="#ce9178"/><rect x="1824" y="630.9" width="1" height="1.3" fill="#ffd700"/><rect x="1825" y="630.9" width="1" height="1.3" fill="#d4d4d4"/><rect x="1803" y="632.9" width="2" height="1.3" fill="#9cdcfe"/><rect x="1806" y="632.9" width="1" height="1.3" fill="#d4d4d4"/><rect x="1808" y="632.9" width="5" height="1.3" fill="#dcdcaa"/><rect x="1813" y="632.9" width="1" height="1.3" fill="#ffd700"/><rect x="1814" y="632.9" width="7" height="1.3" fill="#ce9178"/><rect x="1822" y="632.9" width="6" height="1.3" fill="#ce9178"/><rect x="1829" y="632.9" width="3" height="1.3" fill="#ce9178"/><rect x="1833" y="632.9" width="2" height="1.3" fill="#ce9178"/><rect x="1836" y="632.9" width="3" height="1.3" fill="#ce9178"/><rect x="1839" y="632.9" width="2" height="1.3" fill="#d7ba7d"/><rect x="1841" y="632.9" width="1" height="1.3" fill="#ce9178"/><rect x="1842" y="632.9" width="1" height="1.3" fill="#ffd700"/><rect x="1799" y="634.9" width="1" height="1.3" fill="#6a9955"/><rect x="1801" y="634.9" width="2" height="1.3" fill="#6a9955"/><rect x="1804" y="634.9" width="9" height="1.3" fill="#6a9955"/><rect x="1814" y="634.9" width="2" height="1.3" fill="#6a9955"/><rect x="1817" y="634.9" width="5" height="1.3" fill="#6a9955"/><rect x="1823" y="634.9" width="3" height="1.3" fill="#6a9955"/><rect x="1827" y="634.9" width="6" height="1.3" fill="#6a9955"/><rect x="1834" y="634.9" width="2" height="1.3" fill="#6a9955"/><rect x="1837" y="634.9" width="3" height="1.3" fill="#6a9955"/><rect x="1841" y="634.9" width="6" height="1.3" fill="#6a9955"/><rect x="1799" y="636.9" width="2" height="1.3" fill="#c586c0"/><rect x="1802" y="636.9" width="2" height="1.3" fill="#9cdcfe"/><rect x="1805" y="636.9" width="2" height="1.3" fill="#d4d4d4"/><rect x="1808" y="636.9" width="3" height="1.3" fill="#ce9178"/><rect x="1811" y="636.9" width="1" height="1.3" fill="#d4d4d4"/><rect x="1803" y="638.9" width="5" height="1.3" fill="#dcdcaa"/><rect x="1808" y="638.9" width="1" height="1.3" fill="#ffd700"/><rect x="1809" y="638.9" width="4" height="1.3" fill="#ce9178"/><rect x="1814" y="638.9" width="9" height="1.3" fill="#ce9178"/><rect x="1824" y="638.9" width="4" height="1.3" fill="#ce9178"/><rect x="1829" y="638.9" width="4" height="1.3" fill="#ce9178"/><rect x="1834" y="638.9" width="2" height="1.3" fill="#ce9178"/><rect x="1837" y="638.9" width="1" height="1.3" fill="#ce9178"/><rect x="1839" y="638.9" width="6" height="1.3" fill="#ce9178"/><rect x="1846" y="638.9" width="7" height="1.3" fill="#ce9178"/><rect x="1853" y="638.9" width="1" height="1.3" fill="#ffd700"/><rect x="1803" y="640.9" width="1" height="1.3" fill="#6a9955"/><rect x="1805" y="640.9" width="5" height="1.3" fill="#6a9955"/><rect x="1811" y="640.9" width="5" height="1.3" fill="#6a9955"/><rect x="1803" y="642.9" width="4" height="1.3" fill="#4ec9b0"/><rect x="1807" y="642.9" width="1" height="1.3" fill="#d4d4d4"/><rect x="1808" y="642.9" width="5" height="1.3" fill="#dcdcaa"/><rect x="1813" y="642.9" width="1" height="1.3" fill="#ffd700"/><rect x="1814" y="642.9" width="1" height="1.3" fill="#b5cea8"/><rect x="1815" y="642.9" width="1" height="1.3" fill="#ffd700"/><rect x="1803" y="644.9" width="1" height="1.3" fill="#6a9955"/><rect x="1805" y="644.9" width="3" height="1.3" fill="#6a9955"/><rect x="1809" y="644.9" width="6" height="1.3" fill="#6a9955"/><rect x="1816" y="644.9" width="3" height="1.3" fill="#6a9955"/><rect x="1803" y="646.9" width="12" height="1.3" fill="#dcdcaa"/><rect x="1815" y="646.9" width="2" height="1.3" fill="#ffd700"/><rect x="1803" y="648.9" width="1" height="1.3" fill="#6a9955"/><rect x="1805" y="648.9" width="8" height="1.3" fill="#6a9955"/><rect x="1814" y="648.9" width="6" height="1.3" fill="#6a9955"/><rect x="1821" y="648.9" width="6" height="1.3" fill="#6a9955"/><rect x="1828" y="648.9" width="6" height="1.3" fill="#6a9955"/><rect x="1835" y="648.9" width="7" height="1.3" fill="#6a9955"/><rect x="1803" y="650.9" width="2" height="1.3" fill="#9cdcfe"/><rect x="1806" y="650.9" width="1" height="1.3" fill="#d4d4d4"/><rect x="1808" y="650.9" width="5" height="1.3" fill="#dcdcaa"/><rect x="1813" y="650.9" width="1" height="1.3" fill="#ffd700"/><rect x="1814" y="650.9" width="4" height="1.3" fill="#ce9178"/><rect x="1819" y="650.9" width="3" height="1.3" fill="#ce9178"/><rect x="1823" y="650.9" width="7" height="1.3" fill="#ce9178"/><rect x="1831" y="650.9" width="7" height="1.3" fill="#ce9178"/><rect x="1839" y="650.9" width="8" height="1.3" fill="#ce9178"/><rect x="1848" y="650.9" width="4" height="1.3" fill="#ce9178"/><rect x="1853" y="650.9" width="3" height="1.3" fill="#ce9178"/><rect x="1856" y="650.9" width="1" height="1.3" fill="#ffd700"/><rect x="1803" y="652.9" width="1" height="1.3" fill="#6a9955"/><rect x="1805" y="652.9" width="4" height="1.3" fill="#6a9955"/><rect x="1810" y="652.9" width="6" height="1.3" fill="#6a9955"/><rect x="1817" y="652.9" width="4" height="1.3" fill="#6a9955"/><rect x="1822" y="652.9" width="3" height="1.3" fill="#6a9955"/><rect x="1826" y="652.9" width="3" height="1.3" fill="#6a9955"/><rect x="1830" y="652.9" width="1" height="1.3" fill="#6a9955"/><rect x="1803" y="654.9" width="5" height="1.3" fill="#c586c0"/><rect x="1809" y="654.9" width="2" height="1.3" fill="#9cdcfe"/><rect x="1812" y="654.9" width="3" height="1.3" fill="#569cd6"/><rect x="1816" y="654.9" width="2" height="1.3" fill="#569cd6"/><rect x="1819" y="654.9" width="1" height="1.3" fill="#ffd700"/><rect x="1820" y="654.9" width="4" height="1.3" fill="#ce9178"/><rect x="1825" y="654.9" width="3" height="1.3" fill="#ce9178"/><rect x="1828" y="654.9" width="1" height="1.3" fill="#ffd700"/><rect x="1829" y="654.9" width="1" height="1.3" fill="#d4d4d4"/><rect x="1807" y="656.9" width="2" height="1.3" fill="#9cdcfe"/><rect x="1810" y="656.9" width="1" height="1.3" fill="#d4d4d4"/><rect x="1812" y="656.9" width="5" height="1.3" fill="#dcdcaa"/><rect x="1817" y="656.9" width="1" height="1.3" fill="#ffd700"/><rect x="1818" y="656.9" width="4" height="1.3" fill="#ce9178"/><rect x="1823" y="656.9" width="2" height="1.3" fill="#ce9178"/><rect x="1826" y="656.9" width="3" height="1.3" fill="#ce9178"/><rect x="1830" y="656.9" width="3" height="1.3" fill="#ce9178"/><rect x="1834" y="656.9" width="3" height="1.3" fill="#ce9178"/><rect x="1838" y="656.9" width="8" height="1.3" fill="#ce9178"/><rect x="1846" y="656.9" width="1" height="1.3" fill="#ffd700"/><rect x="1803" y="658.9" width="1" height="1.3" fill="#6a9955"/><rect x="1805" y="658.9" width="2" height="1.3" fill="#6a9955"/><rect x="1808" y="658.9" width="4" height="1.3" fill="#6a9955"/><rect x="1813" y="658.9" width="5" height="1.3" fill="#6a9955"/><rect x="1819" y="658.9" width="2" height="1.3" fill="#6a9955"/><rect x="1822" y="658.9" width="5" height="1.3" fill="#6a9955"/><rect x="1828" y="658.9" width="8" height="1.3" fill="#6a9955"/><rect x="1837" y="658.9" width="5" height="1.3" fill="#6a9955"/><rect x="1843" y="658.9" width="6" height="1.3" fill="#6a9955"/><rect x="1850" y="658.9" width="1" height="1.3" fill="#6a9955"/><rect x="1803" y="660.9" width="2" height="1.3" fill="#c586c0"/><rect x="1806" y="660.9" width="2" height="1.3" fill="#9cdcfe"/><rect x="1809" y="660.9" width="2" height="1.3" fill="#d4d4d4"/><rect x="1812" y="660.9" width="3" height="1.3" fill="#ce9178"/><rect x="1815" y="660.9" width="1" height="1.3" fill="#d4d4d4"/><rect x="1807" y="662.9" width="5" height="1.3" fill="#dcdcaa"/><rect x="1812" y="662.9" width="1" height="1.3" fill="#ffd700"/><rect x="1813" y="662.9" width="8" height="1.3" fill="#ce9178"/><rect x="1822" y="662.9" width="3" height="1.3" fill="#ce9178"/><rect x="1826" y="662.9" width="3" height="1.3" fill="#ce9178"/><rect x="1830" y="662.9" width="5" height="1.3" fill="#ce9178"/><rect x="1836" y="662.9" width="7" height="1.3" fill="#ce9178"/><rect x="1844" y="662.9" width="7" height="1.3" fill="#ce9178"/><rect x="1852" y="662.9" width="9" height="1.3" fill="#ce9178"/><rect x="1861" y="662.9" width="1" height="1.3" fill="#ffd700"/><rect x="1807" y="664.9" width="1" height="1.3" fill="#6a9955"/><rect x="1809" y="664.9" width="2" height="1.3" fill="#6a9955"/><rect x="1812" y="664.9" width="2" height="1.3" fill="#6a9955"/><rect x="1815" y="664.9" width="3" height="1.3" fill="#6a9955"/><rect x="1819" y="664.9" width="4" height="1.3" fill="#6a9955"/><rect x="1807" y="666.9" width="12" height="1.3" fill="#dcdcaa"/><rect x="1819" y="666.9" width="2" height="1.3" fill="#ffd700"/><rect x="1807" y="668.9" width="5" height="1.3" fill="#dcdcaa"/><rect x="1812" y="668.9" width="1" height="1.3" fill="#ffd700"/><rect x="1813" y="668.9" width="8" height="1.3" fill="#ce9178"/><rect x="1822" y="668.9" width="4" height="1.3" fill="#ce9178"/><rect x="1827" y="668.9" width="8" height="1.3" fill="#ce9178"/><rect x="1836" y="668.9" width="4" height="1.3" fill="#ce9178"/><rect x="1841" y="668.9" width="2" height="1.3" fill="#ce9178"/><rect x="1844" y="668.9" width="7" height="1.3" fill="#ce9178"/><rect x="1852" y="668.9" width="5" height="1.3" fill="#ce9178"/><rect x="1857" y="668.9" width="1" height="1.3" fill="#ffd700"/><rect x="1807" y="670.9" width="1" height="1.3" fill="#6a9955"/><rect x="1809" y="670.9" width="7" height="1.3" fill="#6a9955"/><rect x="1817" y="670.9" width="8" height="1.3" fill="#6a9955"/><rect x="1826" y="670.9" width="4" height="1.3" fill="#6a9955"/><rect x="1831" y="670.9" width="6" height="1.3" fill="#6a9955"/><rect x="1838" y="670.9" width="7" height="1.3" fill="#6a9955"/><rect x="1807" y="672.9" width="2" height="1.3" fill="#9cdcfe"/><rect x="1810" y="672.9" width="1" height="1.3" fill="#d4d4d4"/><rect x="1812" y="672.9" width="5" height="1.3" fill="#dcdcaa"/><rect x="1817" y="672.9" width="1" height="1.3" fill="#ffd700"/><rect x="1818" y="672.9" width="9" height="1.3" fill="#ce9178"/><rect x="1828" y="672.9" width="3" height="1.3" fill="#ce9178"/><rect x="1832" y="672.9" width="8" height="1.3" fill="#ce9178"/><rect x="1841" y="672.9" width="2" height="1.3" fill="#ce9178"/><rect x="1844" y="672.9" width="5" height="1.3" fill="#ce9178"/><rect x="1850" y="672.9" width="2" height="1.3" fill="#ce9178"/><rect x="1853" y="672.9" width="2" height="1.3" fill="#ce9178"/><rect x="1856" y="672.9" width="2" height="1.3" fill="#ce9178"/><rect x="1859" y="672.9" width="7" height="1.3" fill="#ce9178"/><rect x="1866" y="672.9" width="1" height="1.3" fill="#ffd700"/><rect x="1807" y="674.9" width="1" height="1.3" fill="#6a9955"/><rect x="1809" y="674.9" width="6" height="1.3" fill="#6a9955"/><rect x="1816" y="674.9" width="6" height="1.3" fill="#6a9955"/><rect x="1823" y="674.9" width="6" height="1.3" fill="#6a9955"/><rect x="1830" y="674.9" width="6" height="1.3" fill="#6a9955"/><rect x="1807" y="676.9" width="5" height="1.3" fill="#c586c0"/><rect x="1813" y="676.9" width="19" height="1.3" fill="#9cdcfe"/><rect x="1833" y="676.9" width="3" height="1.3" fill="#569cd6"/><rect x="1837" y="676.9" width="2" height="1.3" fill="#569cd6"/><rect x="1840" y="676.9" width="1" height="1.3" fill="#ffd700"/><rect x="1841" y="676.9" width="4" height="1.3" fill="#ce9178"/><rect x="1846" y="676.9" width="3" height="1.3" fill="#ce9178"/><rect x="1849" y="676.9" width="1" height="1.3" fill="#ffd700"/><rect x="1850" y="676.9" width="1" height="1.3" fill="#d4d4d4"/><rect x="1811" y="678.9" width="2" height="1.3" fill="#9cdcfe"/><rect x="1814" y="678.9" width="1" height="1.3" fill="#d4d4d4"/><rect x="1816" y="678.9" width="5" height="1.3" fill="#dcdcaa"/><rect x="1821" y="678.9" width="1" height="1.3" fill="#ffd700"/><rect x="1822" y="678.9" width="6" height="1.3" fill="#ce9178"/><rect x="1829" y="678.9" width="3" height="1.3" fill="#ce9178"/><rect x="1833" y="678.9" width="3" height="1.3" fill="#ce9178"/><rect x="1837" y="678.9" width="3" height="1.3" fill="#ce9178"/><rect x="1841" y="678.9" width="2" height="1.3" fill="#ce9178"/><rect x="1844" y="678.9" width="3" height="1.3" fill="#ce9178"/><rect x="1848" y="678.9" width="3" height="1.3" fill="#ce9178"/><rect x="1852" y="678.9" width="7" height="1.3" fill="#ce9178"/><rect x="1859" y="678.9" width="1" height="1.3" fill="#ffd700"/><rect x="1807" y="680.9" width="1" height="1.3" fill="#6a9955"/><rect x="1809" y="680.9" width="3" height="1.3" fill="#6a9955"/><rect x="1813" y="680.9" width="4" height="1.3" fill="#6a9955"/><rect x="1818" y="680.9" width="7" height="1.3" fill="#6a9955"/><rect x="1826" y="680.9" width="2" height="1.3" fill="#6a9955"/><rect x="1829" y="680.9" width="6" height="1.3" fill="#6a9955"/><rect x="1836" y="680.9" width="2" height="1.3" fill="#6a9955"/><rect x="1839" y="680.9" width="3" height="1.3" fill="#6a9955"/><rect x="1843" y="680.9" width="7" height="1.3" fill="#6a9955"/><rect x="1851" y="680.9" width="4" height="1.3" fill="#6a9955"/><rect x="1807" y="682.9" width="2" height="1.3" fill="#c586c0"/><rect x="1810" y="682.9" width="18" height="1.3" fill="#9cdcfe"/><rect x="1829" y="682.9" width="2" height="1.3" fill="#d4d4d4"/><rect x="1832" y="682.9" width="3" height="1.3" fill="#ce9178"/><rect x="1835" y="682.9" width="1" height="1.3" fill="#d4d4d4"/><rect x="1811" y="684.9" width="1" height="1.3" fill="#6a9955"/><rect x="1813" y="684.9" width="2" height="1.3" fill="#6a9955"/><rect x="1816" y="684.9" width="8" height="1.3" fill="#6a9955"/><rect x="1825" y="684.9" width="2" height="1.3" fill="#6a9955"/><rect x="1811" y="686.9" width="10" height="1.3" fill="#dcdcaa"/><rect x="1821" y="686.9" width="2" height="1.3" fill="#ffd700"/><rect x="1807" y="688.9" width="4" height="1.3" fill="#c586c0"/><rect x="1811" y="688.9" width="1" height="1.3" fill="#d4d4d4"/><rect x="1811" y="690.9" width="1" height="1.3" fill="#6a9955"/><rect x="1813" y="690.9" width="4" height="1.3" fill="#6a9955"/><rect x="1818" y="690.9" width="5" height="1.3" fill="#6a9955"/><rect x="1824" y="690.9" width="3" height="1.3" fill="#6a9955"/><rect x="1811" y="692.9" width="9" height="1.3" fill="#dcdcaa"/><rect x="1820" y="692.9" width="2" height="1.3" fill="#ffd700"/><rect x="1811" y="694.9" width="8" height="1.3" fill="#dcdcaa"/><rect x="1819" y="694.9" width="2" height="1.3" fill="#ffd700"/><rect x="1803" y="698.9" width="2" height="1.3" fill="#c586c0"/><rect x="1806" y="698.9" width="3" height="1.3" fill="#9cdcfe"/><rect x="1810" y="698.9" width="2" height="1.3" fill="#d4d4d4"/><rect x="1813" y="698.9" width="3" height="1.3" fill="#ce9178"/><rect x="1816" y="698.9" width="1" height="1.3" fill="#d4d4d4"/><rect x="1807" y="700.9" width="5" height="1.3" fill="#dcdcaa"/><rect x="1812" y="700.9" width="1" height="1.3" fill="#ffd700"/><rect x="1813" y="700.9" width="6" height="1.3" fill="#ce9178"/><rect x="1820" y="700.9" width="6" height="1.3" fill="#ce9178"/><rect x="1827" y="700.9" width="4" height="1.3" fill="#ce9178"/><rect x="1832" y="700.9" width="5" height="1.3" fill="#ce9178"/><rect x="1838" y="700.9" width="3" height="1.3" fill="#ce9178"/><rect x="1842" y="700.9" width="6" height="1.3" fill="#ce9178"/><rect x="1849" y="700.9" width="4" height="1.3" fill="#ce9178"/><rect x="1854" y="700.9" width="2" height="1.3" fill="#ce9178"/><rect x="1857" y="700.9" width="5" height="1.3" fill="#ce9178"/><rect x="1862" y="700.9" width="1" height="1.3" fill="#ffd700"/><rect x="1807" y="702.9" width="1" height="1.3" fill="#6a9955"/><rect x="1809" y="702.9" width="7" height="1.3" fill="#6a9955"/><rect x="1817" y="702.9" width="2" height="1.3" fill="#6a9955"/><rect x="1820" y="702.9" width="3" height="1.3" fill="#6a9955"/><rect x="1807" y="704.9" width="9" height="1.3" fill="#dcdcaa"/><rect x="1816" y="704.9" width="2" height="1.3" fill="#ffd700"/><rect x="1807" y="706.9" width="8" height="1.3" fill="#dcdcaa"/><rect x="1815" y="706.9" width="2" height="1.3" fill="#ffd700"/><rect x="1799" y="710.9" width="2" height="1.3" fill="#c586c0"/><rect x="1802" y="710.9" width="4" height="1.3" fill="#9cdcfe"/><rect x="1807" y="710.9" width="2" height="1.3" fill="#d4d4d4"/><rect x="1810" y="710.9" width="3" height="1.3" fill="#ce9178"/><rect x="1813" y="710.9" width="1" height="1.3" fill="#d4d4d4"/><rect x="1803" y="712.9" width="5" height="1.3" fill="#dcdcaa"/><rect x="1808" y="712.9" width="1" height="1.3" fill="#ffd700"/><rect x="1809" y="712.9" width="4" height="1.3" fill="#ce9178"/><rect x="1814" y="712.9" width="3" height="1.3" fill="#ce9178"/><rect x="1818" y="712.9" width="5" height="1.3" fill="#ce9178"/><rect x="1824" y="712.9" width="5" height="1.3" fill="#ce9178"/><rect x="1830" y="712.9" width="4" height="1.3" fill="#ce9178"/><rect x="1835" y="712.9" width="7" height="1.3" fill="#ce9178"/><rect x="1843" y="712.9" width="5" height="1.3" fill="#ce9178"/><rect x="1848" y="712.9" width="1" height="1.3" fill="#ffd700"/><rect x="1803" y="714.9" width="1" height="1.3" fill="#6a9955"/><rect x="1805" y="714.9" width="5" height="1.3" fill="#6a9955"/><rect x="1811" y="714.9" width="3" height="1.3" fill="#6a9955"/><rect x="1815" y="714.9" width="4" height="1.3" fill="#6a9955"/><rect x="1803" y="716.9" width="9" height="1.3" fill="#dcdcaa"/><rect x="1812" y="716.9" width="2" height="1.3" fill="#ffd700"/><rect x="1803" y="718.9" width="8" height="1.3" fill="#dcdcaa"/><rect x="1811" y="718.9" width="2" height="1.3" fill="#ffd700"/><rect x="1795" y="722.9" width="2" height="1.3" fill="#c586c0"/><rect x="1798" y="722.9" width="4" height="1.3" fill="#9cdcfe"/><rect x="1803" y="722.9" width="2" height="1.3" fill="#d4d4d4"/><rect x="1806" y="722.9" width="3" height="1.3" fill="#ce9178"/><rect x="1809" y="722.9" width="1" height="1.3" fill="#d4d4d4"/><rect x="1799" y="724.9" width="5" height="1.3" fill="#dcdcaa"/><rect x="1804" y="724.9" width="1" height="1.3" fill="#ffd700"/><rect x="1805" y="724.9" width="4" height="1.3" fill="#ce9178"/><rect x="1810" y="724.9" width="2" height="1.3" fill="#ce9178"/><rect x="1813" y="724.9" width="6" height="1.3" fill="#ce9178"/><rect x="1820" y="724.9" width="8" height="1.3" fill="#ce9178"/><rect x="1829" y="724.9" width="2" height="1.3" fill="#ce9178"/><rect x="1832" y="724.9" width="4" height="1.3" fill="#ce9178"/><rect x="1837" y="724.9" width="2" height="1.3" fill="#ce9178"/><rect x="1840" y="724.9" width="8" height="1.3" fill="#ce9178"/><rect x="1849" y="724.9" width="8" height="1.3" fill="#ce9178"/><rect x="1858" y="724.9" width="3" height="1.3" fill="#ce9178"/><rect x="1861" y="724.9" width="1" height="1.3" fill="#ffd700"/><rect x="1799" y="726.9" width="1" height="1.3" fill="#6a9955"/><rect x="1801" y="726.9" width="8" height="1.3" fill="#6a9955"/><rect x="1810" y="726.9" width="2" height="1.3" fill="#6a9955"/><rect x="1799" y="728.9" width="4" height="1.3" fill="#4ec9b0"/><rect x="1803" y="728.9" width="1" height="1.3" fill="#d4d4d4"/><rect x="1804" y="728.9" width="5" height="1.3" fill="#dcdcaa"/><rect x="1809" y="728.9" width="1" height="1.3" fill="#ffd700"/><rect x="1810" y="728.9" width="1" height="1.3" fill="#b5cea8"/><rect x="1811" y="728.9" width="1" height="1.3" fill="#ffd700"/><rect x="1799" y="730.9" width="1" height="1.3" fill="#6a9955"/><rect x="1801" y="730.9" width="5" height="1.3" fill="#6a9955"/><rect x="1807" y="730.9" width="6" height="1.3" fill="#6a9955"/><rect x="1814" y="730.9" width="6" height="1.3" fill="#6a9955"/><rect x="1821" y="730.9" width="3" height="1.3" fill="#6a9955"/><rect x="1825" y="730.9" width="6" height="1.3" fill="#6a9955"/><rect x="1832" y="730.9" width="6" height="1.3" fill="#6a9955"/><rect x="1799" y="732.9" width="2" height="1.3" fill="#9cdcfe"/><rect x="1802" y="732.9" width="1" height="1.3" fill="#d4d4d4"/><rect x="1804" y="732.9" width="5" height="1.3" fill="#dcdcaa"/><rect x="1809" y="732.9" width="1" height="1.3" fill="#ffd700"/><rect x="1810" y="732.9" width="5" height="1.3" fill="#ce9178"/><rect x="1816" y="732.9" width="8" height="1.3" fill="#ce9178"/><rect x="1825" y="732.9" width="8" height="1.3" fill="#ce9178"/><rect x="1834" y="732.9" width="4" height="1.3" fill="#ce9178"/><rect x="1839" y="732.9" width="3" height="1.3" fill="#ce9178"/><rect x="1842" y="732.9" width="1" height="1.3" fill="#ffd700"/><rect x="1791" y="734.9" width="2" height="1.3" fill="#ce9178"/><rect x="1794" y="734.9" width="7" height="1.3" fill="#ce9178"/><rect x="1802" y="734.9" width="7" height="1.3" fill="#ce9178"/><rect x="1810" y="734.9" width="8" height="1.3" fill="#ce9178"/><rect x="1819" y="734.9" width="3" height="1.3" fill="#ce9178"/><rect x="1823" y="734.9" width="2" height="1.3" fill="#ce9178"/><rect x="1799" y="736.9" width="1" height="1.3" fill="#6a9955"/><rect x="1801" y="736.9" width="5" height="1.3" fill="#6a9955"/><rect x="1807" y="736.9" width="3" height="1.3" fill="#6a9955"/><rect x="1811" y="736.9" width="4" height="1.3" fill="#6a9955"/><rect x="1816" y="736.9" width="6" height="1.3" fill="#6a9955"/><rect x="1823" y="736.9" width="4" height="1.3" fill="#6a9955"/><rect x="1799" y="738.9" width="5" height="1.3" fill="#c586c0"/><rect x="1805" y="738.9" width="2" height="1.3" fill="#9cdcfe"/><rect x="1808" y="738.9" width="3" height="1.3" fill="#569cd6"/><rect x="1812" y="738.9" width="2" height="1.3" fill="#569cd6"/><rect x="1815" y="738.9" width="1" height="1.3" fill="#ffd700"/><rect x="1816" y="738.9" width="4" height="1.3" fill="#ce9178"/><rect x="1821" y="738.9" width="3" height="1.3" fill="#ce9178"/><rect x="1824" y="738.9" width="1" height="1.3" fill="#ffd700"/><rect x="1825" y="738.9" width="1" height="1.3" fill="#d4d4d4"/><rect x="1803" y="740.9" width="2" height="1.3" fill="#9cdcfe"/><rect x="1806" y="740.9" width="1" height="1.3" fill="#d4d4d4"/><rect x="1808" y="740.9" width="5" height="1.3" fill="#dcdcaa"/><rect x="1813" y="740.9" width="1" height="1.3" fill="#ffd700"/><rect x="1814" y="740.9" width="5" height="1.3" fill="#ce9178"/><rect x="1820" y="740.9" width="8" height="1.3" fill="#ce9178"/><rect x="1829" y="740.9" width="5" height="1.3" fill="#ce9178"/><rect x="1835" y="740.9" width="7" height="1.3" fill="#ce9178"/><rect x="1842" y="740.9" width="1" height="1.3" fill="#ffd700"/><rect x="1799" y="742.9" width="1" height="1.3" fill="#6a9955"/><rect x="1801" y="742.9" width="3" height="1.3" fill="#6a9955"/><rect x="1805" y="742.9" width="5" height="1.3" fill="#6a9955"/><rect x="1811" y="742.9" width="3" height="1.3" fill="#6a9955"/><rect x="1815" y="742.9" width="7" height="1.3" fill="#6a9955"/><rect x="1823" y="742.9" width="3" height="1.3" fill="#6a9955"/><rect x="1827" y="742.9" width="2" height="1.3" fill="#6a9955"/><rect x="1830" y="742.9" width="8" height="1.3" fill="#6a9955"/><rect x="1839" y="742.9" width="4" height="1.3" fill="#6a9955"/><rect x="1844" y="742.9" width="3" height="1.3" fill="#6a9955"/><rect x="1799" y="744.9" width="2" height="1.3" fill="#c586c0"/><rect x="1802" y="744.9" width="2" height="1.3" fill="#9cdcfe"/><rect x="1805" y="744.9" width="2" height="1.3" fill="#d4d4d4"/><rect x="1808" y="744.9" width="3" height="1.3" fill="#ce9178"/><rect x="1811" y="744.9" width="1" height="1.3" fill="#d4d4d4"/><rect x="1803" y="746.9" width="5" height="1.3" fill="#dcdcaa"/><rect x="1808" y="746.9" width="1" height="1.3" fill="#ffd700"/><rect x="1809" y="746.9" width="6" height="1.3" fill="#ce9178"/><rect x="1816" y="746.9" width="2" height="1.3" fill="#ce9178"/><rect x="1819" y="746.9" width="2" height="1.3" fill="#ce9178"/><rect x="1822" y="746.9" width="4" height="1.3" fill="#ce9178"/><rect x="1827" y="746.9" width="7" height="1.3" fill="#ce9178"/><rect x="1835" y="746.9" width="6" height="1.3" fill="#ce9178"/><rect x="1842" y="746.9" width="2" height="1.3" fill="#ce9178"/><rect x="1845" y="746.9" width="3" height="1.3" fill="#ce9178"/><rect x="1849" y="746.9" width="4" height="1.3" fill="#ce9178"/><rect x="1854" y="746.9" width="6" height="1.3" fill="#ce9178"/><rect x="1860" y="746.9" width="1" height="1.3" fill="#ffd700"/><rect x="1803" y="748.9" width="1" height="1.3" fill="#6a9955"/><rect x="1805" y="748.9" width="4" height="1.3" fill="#6a9955"/><rect x="1810" y="748.9" width="4" height="1.3" fill="#6a9955"/><rect x="1815" y="748.9" width="1" height="1.3" fill="#6a9955"/><rect x="1803" y="750.9" width="4" height="1.3" fill="#4ec9b0"/><rect x="1807" y="750.9" width="1" height="1.3" fill="#d4d4d4"/><rect x="1808" y="750.9" width="5" height="1.3" fill="#dcdcaa"/><rect x="1813" y="750.9" width="1" height="1.3" fill="#ffd700"/><rect x="1814" y="750.9" width="1" height="1.3" fill="#b5cea8"/><rect x="1815" y="750.9" width="1" height="1.3" fill="#ffd700"/><rect x="1803" y="752.9" width="1" height="1.3" fill="#6a9955"/><rect x="1805" y="752.9" width="7" height="1.3" fill="#6a9955"/><rect x="1813" y="752.9" width="5" height="1.3" fill="#6a9955"/><rect x="1803" y="754.9" width="12" height="1.3" fill="#dcdcaa"/><rect x="1815" y="754.9" width="2" height="1.3" fill="#ffd700"/><rect x="1803" y="756.9" width="1" height="1.3" fill="#6a9955"/><rect x="1805" y="756.9" width="6" height="1.3" fill="#6a9955"/><rect x="1812" y="756.9" width="3" height="1.3" fill="#6a9955"/><rect x="1816" y="756.9" width="6" height="1.3" fill="#6a9955"/><rect x="1823" y="756.9" width="2" height="1.3" fill="#6a9955"/><rect x="1826" y="756.9" width="5" height="1.3" fill="#6a9955"/><rect x="1832" y="756.9" width="6" height="1.3" fill="#6a9955"/><rect x="1839" y="756.9" width="3" height="1.3" fill="#6a9955"/><rect x="1803" y="758.9" width="2" height="1.3" fill="#9cdcfe"/><rect x="1806" y="758.9" width="1" height="1.3" fill="#d4d4d4"/><rect x="1808" y="758.9" width="5" height="1.3" fill="#dcdcaa"/><rect x="1813" y="758.9" width="1" height="1.3" fill="#ffd700"/><rect x="1814" y="758.9" width="8" height="1.3" fill="#ce9178"/><rect x="1823" y="758.9" width="3" height="1.3" fill="#ce9178"/><rect x="1827" y="758.9" width="7" height="1.3" fill="#ce9178"/><rect x="1835" y="758.9" width="2" height="1.3" fill="#ce9178"/><rect x="1838" y="758.9" width="8" height="1.3" fill="#ce9178"/><rect x="1847" y="758.9" width="5" height="1.3" fill="#ce9178"/><rect x="1853" y="758.9" width="6" height="1.3" fill="#ce9178"/><rect x="1860" y="758.9" width="3" height="1.3" fill="#ce9178"/><rect x="1863" y="758.9" width="1" height="1.3" fill="#ffd700"/><rect x="1803" y="760.9" width="1" height="1.3" fill="#6a9955"/><rect x="1805" y="760.9" width="2" height="1.3" fill="#6a9955"/><rect x="1808" y="760.9" width="6" height="1.3" fill="#6a9955"/><rect x="1815" y="760.9" width="2" height="1.3" fill="#6a9955"/><rect x="1818" y="760.9" width="7" height="1.3" fill="#6a9955"/><rect x="1826" y="760.9" width="3" height="1.3" fill="#6a9955"/><rect x="1830" y="760.9" width="1" height="1.3" fill="#6a9955"/><rect x="1803" y="762.9" width="5" height="1.3" fill="#c586c0"/><rect x="1809" y="762.9" width="2" height="1.3" fill="#9cdcfe"/><rect x="1812" y="762.9" width="3" height="1.3" fill="#569cd6"/><rect x="1816" y="762.9" width="2" height="1.3" fill="#569cd6"/><rect x="1819" y="762.9" width="1" height="1.3" fill="#ffd700"/><rect x="1820" y="762.9" width="4" height="1.3" fill="#ce9178"/><rect x="1825" y="762.9" width="3" height="1.3" fill="#ce9178"/><rect x="1828" y="762.9" width="1" height="1.3" fill="#ffd700"/><rect x="1829" y="762.9" width="1" height="1.3" fill="#d4d4d4"/><rect x="1807" y="764.9" width="2" height="1.3" fill="#9cdcfe"/><rect x="1810" y="764.9" width="1" height="1.3" fill="#d4d4d4"/><rect x="1812" y="764.9" width="5" height="1.3" fill="#dcdcaa"/><rect x="1817" y="764.9" width="1" height="1.3" fill="#ffd700"/><rect x="1818" y="764.9" width="6" height="1.3" fill="#ce9178"/><rect x="1825" y="764.9" width="5" height="1.3" fill="#ce9178"/><rect x="1831" y="764.9" width="6" height="1.3" fill="#ce9178"/><rect x="1838" y="764.9" width="2" height="1.3" fill="#ce9178"/><rect x="1841" y="764.9" width="5" height="1.3" fill="#ce9178"/><rect x="1846" y="764.9" width="1" height="1.3" fill="#ffd700"/><rect x="1803" y="766.9" width="1" height="1.3" fill="#6a9955"/><rect x="1805" y="766.9" width="3" height="1.3" fill="#6a9955"/><rect x="1809" y="766.9" width="7" height="1.3" fill="#6a9955"/><rect x="1817" y="766.9" width="5" height="1.3" fill="#6a9955"/><rect x="1823" y="766.9" width="2" height="1.3" fill="#6a9955"/><rect x="1826" y="766.9" width="2" height="1.3" fill="#6a9955"/><rect x="1829" y="766.9" width="4" height="1.3" fill="#6a9955"/><rect x="1834" y="766.9" width="4" height="1.3" fill="#6a9955"/><rect x="1839" y="766.9" width="4" height="1.3" fill="#6a9955"/><rect x="1844" y="766.9" width="4" height="1.3" fill="#6a9955"/><rect x="1849" y="766.9" width="2" height="1.3" fill="#6a9955"/><rect x="1803" y="768.9" width="2" height="1.3" fill="#c586c0"/><rect x="1806" y="768.9" width="2" height="1.3" fill="#9cdcfe"/><rect x="1809" y="768.9" width="2" height="1.3" fill="#d4d4d4"/><rect x="1812" y="768.9" width="3" height="1.3" fill="#ce9178"/><rect x="1815" y="768.9" width="1" height="1.3" fill="#d4d4d4"/><rect x="1807" y="770.9" width="5" height="1.3" fill="#dcdcaa"/><rect x="1812" y="770.9" width="1" height="1.3" fill="#ffd700"/><rect x="1813" y="770.9" width="7" height="1.3" fill="#ce9178"/><rect x="1821" y="770.9" width="6" height="1.3" fill="#ce9178"/><rect x="1828" y="770.9" width="5" height="1.3" fill="#ce9178"/><rect x="1834" y="770.9" width="6" height="1.3" fill="#ce9178"/><rect x="1841" y="770.9" width="6" height="1.3" fill="#ce9178"/><rect x="1848" y="770.9" width="7" height="1.3" fill="#ce9178"/><rect x="1855" y="770.9" width="1" height="1.3" fill="#ffd700"/><rect x="1807" y="772.9" width="1" height="1.3" fill="#6a9955"/><rect x="1809" y="772.9" width="2" height="1.3" fill="#6a9955"/><rect x="1812" y="772.9" width="7" height="1.3" fill="#6a9955"/><rect x="1820" y="772.9" width="3" height="1.3" fill="#6a9955"/><rect x="1807" y="774.9" width="12" height="1.3" fill="#dcdcaa"/><rect x="1819" y="774.9" width="2" height="1.3" fill="#ffd700"/><rect x="1807" y="776.9" width="5" height="1.3" fill="#dcdcaa"/><rect x="1812" y="776.9" width="1" height="1.3" fill="#ffd700"/><rect x="1813" y="776.9" width="9" height="1.3" fill="#ce9178"/><rect x="1823" y="776.9" width="7" height="1.3" fill="#ce9178"/><rect x="1831" y="776.9" width="2" height="1.3" fill="#ce9178"/><rect x="1834" y="776.9" width="6" height="1.3" fill="#ce9178"/><rect x="1841" y="776.9" width="6" height="1.3" fill="#ce9178"/><rect x="1848" y="776.9" width="8" height="1.3" fill="#ce9178"/><rect x="1856" y="776.9" width="1" height="1.3" fill="#ffd700"/><rect x="1807" y="778.9" width="1" height="1.3" fill="#6a9955"/><rect x="1809" y="778.9" width="8" height="1.3" fill="#6a9955"/><rect x="1818" y="778.9" width="2" height="1.3" fill="#6a9955"/><rect x="1821" y="778.9" width="5" height="1.3" fill="#6a9955"/><rect x="1827" y="778.9" width="3" height="1.3" fill="#6a9955"/><rect x="1831" y="778.9" width="5" height="1.3" fill="#6a9955"/><rect x="1837" y="778.9" width="5" height="1.3" fill="#6a9955"/><rect x="1843" y="778.9" width="3" height="1.3" fill="#6a9955"/><rect x="1807" y="780.9" width="2" height="1.3" fill="#9cdcfe"/><rect x="1810" y="780.9" width="1" height="1.3" fill="#d4d4d4"/><rect x="1812" y="780.9" width="5" height="1.3" fill="#dcdcaa"/><rect x="1817" y="780.9" width="1" height="1.3" fill="#ffd700"/><rect x="1818" y="780.9" width="9" height="1.3" fill="#ce9178"/><rect x="1828" y="780.9" width="5" height="1.3" fill="#ce9178"/><rect x="1834" y="780.9" width="6" height="1.3" fill="#ce9178"/><rect x="1841" y="780.9" width="6" height="1.3" fill="#ce9178"/><rect x="1848" y="780.9" width="6" height="1.3" fill="#ce9178"/><rect x="1855" y="780.9" width="2" height="1.3" fill="#ce9178"/><rect x="1858" y="780.9" width="5" height="1.3" fill="#ce9178"/><rect x="1864" y="780.9" width="2" height="1.3" fill="#ce9178"/><rect x="1866" y="780.9" width="1" height="1.3" fill="#ffd700"/><rect x="1807" y="782.9" width="1" height="1.3" fill="#6a9955"/><rect x="1809" y="782.9" width="5" height="1.3" fill="#6a9955"/><rect x="1815" y="782.9" width="4" height="1.3" fill="#6a9955"/><rect x="1820" y="782.9" width="6" height="1.3" fill="#6a9955"/><rect x="1827" y="782.9" width="5" height="1.3" fill="#6a9955"/><rect x="1833" y="782.9" width="3" height="1.3" fill="#6a9955"/><rect x="1807" y="784.9" width="5" height="1.3" fill="#c586c0"/><rect x="1813" y="784.9" width="19" height="1.3" fill="#9cdcfe"/><rect x="1833" y="784.9" width="3" height="1.3" fill="#569cd6"/><rect x="1837" y="784.9" width="2" height="1.3" fill="#569cd6"/><rect x="1840" y="784.9" width="1" height="1.3" fill="#ffd700"/><rect x="1841" y="784.9" width="4" height="1.3" fill="#ce9178"/><rect x="1846" y="784.9" width="3" height="1.3" fill="#ce9178"/><rect x="1849" y="784.9" width="1" height="1.3" fill="#ffd700"/><rect x="1850" y="784.9" width="1" height="1.3" fill="#d4d4d4"/><rect x="1811" y="786.9" width="2" height="1.3" fill="#9cdcfe"/><rect x="1814" y="786.9" width="1" height="1.3" fill="#d4d4d4"/><rect x="1816" y="786.9" width="5" height="1.3" fill="#dcdcaa"/><rect x="1821" y="786.9" width="1" height="1.3" fill="#ffd700"/><rect x="1822" y="786.9" width="5" height="1.3" fill="#ce9178"/><rect x="1828" y="786.9" width="4" height="1.3" fill="#ce9178"/><rect x="1833" y="786.9" width="6" height="1.3" fill="#ce9178"/><rect x="1840" y="786.9" width="4" height="1.3" fill="#ce9178"/><rect x="1845" y="786.9" width="5" height="1.3" fill="#ce9178"/><rect x="1851" y="786.9" width="8" height="1.3" fill="#ce9178"/><rect x="1859" y="786.9" width="1" height="1.3" fill="#ffd700"/><rect x="1807" y="788.9" width="1" height="1.3" fill="#6a9955"/><rect x="1809" y="788.9" width="4" height="1.3" fill="#6a9955"/><rect x="1814" y="788.9" width="6" height="1.3" fill="#6a9955"/><rect x="1821" y="788.9" width="4" height="1.3" fill="#6a9955"/><rect x="1826" y="788.9" width="7" height="1.3" fill="#6a9955"/><rect x="1834" y="788.9" width="7" height="1.3" fill="#6a9955"/><rect x="1842" y="788.9" width="7" height="1.3" fill="#6a9955"/><rect x="1850" y="788.9" width="4" height="1.3" fill="#6a9955"/><rect x="1807" y="790.9" width="2" height="1.3" fill="#c586c0"/><rect x="1810" y="790.9" width="18" height="1.3" fill="#9cdcfe"/><rect x="1829" y="790.9" width="2" height="1.3" fill="#d4d4d4"/><rect x="1832" y="790.9" width="3" height="1.3" fill="#ce9178"/><rect x="1835" y="790.9" width="1" height="1.3" fill="#d4d4d4"/><rect x="1811" y="792.9" width="1" height="1.3" fill="#6a9955"/><rect x="1813" y="792.9" width="2" height="1.3" fill="#6a9955"/><rect x="1816" y="792.9" width="2" height="1.3" fill="#6a9955"/><rect x="1819" y="792.9" width="8" height="1.3" fill="#6a9955"/><rect x="1811" y="794.9" width="10" height="1.3" fill="#dcdcaa"/><rect x="1821" y="794.9" width="2" height="1.3" fill="#ffd700"/><rect x="1807" y="796.9" width="4" height="1.3" fill="#c586c0"/><rect x="1811" y="796.9" width="1" height="1.3" fill="#d4d4d4"/><rect x="1811" y="798.9" width="1" height="1.3" fill="#6a9955"/><rect x="1813" y="798.9" width="3" height="1.3" fill="#6a9955"/><rect x="1817" y="798.9" width="6" height="1.3" fill="#6a9955"/><rect x="1824" y="798.9" width="2" height="1.3" fill="#6a9955"/><rect x="1811" y="800.9" width="9" height="1.3" fill="#dcdcaa"/><rect x="1820" y="800.9" width="2" height="1.3" fill="#ffd700"/><rect x="1811" y="802.9" width="8" height="1.3" fill="#dcdcaa"/><rect x="1819" y="802.9" width="2" height="1.3" fill="#ffd700"/><rect x="1803" y="806.9" width="2" height="1.3" fill="#c586c0"/><rect x="1806" y="806.9" width="3" height="1.3" fill="#9cdcfe"/><rect x="1810" y="806.9" width="2" height="1.3" fill="#d4d4d4"/><rect x="1813" y="806.9" width="3" height="1.3" fill="#ce9178"/><rect x="1816" y="806.9" width="1" height="1.3" fill="#d4d4d4"/><rect x="1807" y="808.9" width="5" height="1.3" fill="#dcdcaa"/><rect x="1812" y="808.9" width="1" height="1.3" fill="#ffd700"/><rect x="1813" y="808.9" width="8" height="1.3" fill="#ce9178"/><rect x="1822" y="808.9" width="3" height="1.3" fill="#ce9178"/><rect x="1826" y="808.9" width="5" height="1.3" fill="#ce9178"/><rect x="1832" y="808.9" width="8" height="1.3" fill="#ce9178"/><rect x="1841" y="808.9" width="6" height="1.3" fill="#ce9178"/><rect x="1847" y="808.9" width="1" height="1.3" fill="#ffd700"/><rect x="1807" y="810.9" width="1" height="1.3" fill="#6a9955"/><rect x="1809" y="810.9" width="5" height="1.3" fill="#6a9955"/><rect x="1815" y="810.9" width="2" height="1.3" fill="#6a9955"/><rect x="1818" y="810.9" width="4" height="1.3" fill="#6a9955"/><rect x="1807" y="812.9" width="9" height="1.3" fill="#dcdcaa"/><rect x="1816" y="812.9" width="2" height="1.3" fill="#ffd700"/><rect x="1807" y="814.9" width="8" height="1.3" fill="#dcdcaa"/><rect x="1815" y="814.9" width="2" height="1.3" fill="#ffd700"/><rect x="1799" y="818.9" width="2" height="1.3" fill="#c586c0"/><rect x="1802" y="818.9" width="4" height="1.3" fill="#9cdcfe"/><rect x="1807" y="818.9" width="2" height="1.3" fill="#d4d4d4"/><rect x="1810" y="818.9" width="3" height="1.3" fill="#ce9178"/><rect x="1813" y="818.9" width="1" height="1.3" fill="#d4d4d4"/><rect x="1803" y="820.9" width="5" height="1.3" fill="#dcdcaa"/><rect x="1808" y="820.9" width="1" height="1.3" fill="#ffd700"/><rect x="1809" y="820.9" width="8" height="1.3" fill="#ce9178"/><rect x="1818" y="820.9" width="5" height="1.3" fill="#ce9178"/><rect x="1824" y="820.9" width="2" height="1.3" fill="#ce9178"/><rect x="1827" y="820.9" width="6" height="1.3" fill="#ce9178"/><rect x="1834" y="820.9" width="7" height="1.3" fill="#ce9178"/><rect x="1842" y="820.9" width="4" height="1.3" fill="#ce9178"/><rect x="1847" y="820.9" width="2" height="1.3" fill="#ce9178"/><rect x="1850" y="820.9" width="8" height="1.3" fill="#ce9178"/><rect x="1859" y="820.9" width="2" height="1.3" fill="#ce9178"/><rect x="1861" y="820.9" width="1" height="1.3" fill="#ffd700"/><rect x="1803" y="822.9" width="1" height="1.3" fill="#6a9955"/><rect x="1805" y="822.9" width="5" height="1.3" fill="#6a9955"/><rect x="1811" y="822.9" width="7" height="1.3" fill="#6a9955"/><rect x="1803" y="824.9" width="9" height="1.3" fill="#dcdcaa"/><rect x="1812" y="824.9" width="2" height="1.3" fill="#ffd700"/><rect x="1803" y="826.9" width="8" height="1.3" fill="#dcdcaa"/><rect x="1811" y="826.9" width="2" height="1.3" fill="#ffd700"/><rect x="1791" y="832.9" width="1" height="1.3" fill="#6a9955"/><rect x="1793" y="832.9" width="5" height="1.3" fill="#6a9955"/><rect x="1799" y="832.9" width="4" height="1.3" fill="#6a9955"/><rect x="1804" y="832.9" width="8" height="1.3" fill="#6a9955"/><rect x="1813" y="832.9" width="3" height="1.3" fill="#6a9955"/><rect x="1817" y="832.9" width="2" height="1.3" fill="#6a9955"/><rect x="1820" y="832.9" width="1" height="1.3" fill="#6a9955"/><rect x="1791" y="834.9" width="3" height="1.3" fill="#569cd6"/><rect x="1795" y="834.9" width="14" height="1.3" fill="#dcdcaa"/><rect x="1809" y="834.9" width="3" height="1.3" fill="#ffd700"/><rect x="1795" y="836.9" width="1" height="1.3" fill="#6a9955"/><rect x="1797" y="836.9" width="2" height="1.3" fill="#6a9955"/><rect x="1800" y="836.9" width="8" height="1.3" fill="#6a9955"/><rect x="1809" y="836.9" width="7" height="1.3" fill="#6a9955"/><rect x="1817" y="836.9" width="5" height="1.3" fill="#6a9955"/><rect x="1823" y="836.9" width="3" height="1.3" fill="#6a9955"/><rect x="1827" y="836.9" width="2" height="1.3" fill="#6a9955"/><rect x="1795" y="838.9" width="3" height="1.3" fill="#569cd6"/><rect x="1799" y="838.9" width="10" height="1.3" fill="#dcdcaa"/><rect x="1809" y="838.9" width="3" height="1.3" fill="#ffd700"/><rect x="1799" y="840.9" width="5" height="1.3" fill="#dcdcaa"/><rect x="1804" y="840.9" width="1" height="1.3" fill="#ffd700"/><rect x="1805" y="840.9" width="4" height="1.3" fill="#ce9178"/><rect x="1810" y="840.9" width="6" height="1.3" fill="#ce9178"/><rect x="1817" y="840.9" width="7" height="1.3" fill="#ce9178"/><rect x="1825" y="840.9" width="2" height="1.3" fill="#ce9178"/><rect x="1828" y="840.9" width="2" height="1.3" fill="#ce9178"/><rect x="1831" y="840.9" width="6" height="1.3" fill="#ce9178"/><rect x="1838" y="840.9" width="5" height="1.3" fill="#ce9178"/><rect x="1844" y="840.9" width="3" height="1.3" fill="#ce9178"/><rect x="1847" y="840.9" width="1" height="1.3" fill="#ffd700"/><rect x="1799" y="842.9" width="5" height="1.3" fill="#dcdcaa"/><rect x="1804" y="842.9" width="1" height="1.3" fill="#ffd700"/><rect x="1805" y="842.9" width="3" height="1.3" fill="#ce9178"/><rect x="1809" y="842.9" width="3" height="1.3" fill="#ce9178"/><rect x="1813" y="842.9" width="8" height="1.3" fill="#ce9178"/><rect x="1822" y="842.9" width="2" height="1.3" fill="#ce9178"/><rect x="1825" y="842.9" width="4" height="1.3" fill="#ce9178"/><rect x="1829" y="842.9" width="1" height="1.3" fill="#ffd700"/><rect x="1795" y="846.9" width="5" height="1.3" fill="#9cdcfe"/><rect x="1801" y="846.9" width="1" height="1.3" fill="#d4d4d4"/><rect x="1803" y="846.9" width="1" height="1.3" fill="#b5cea8"/><rect x="1795" y="850.9" width="1" height="1.3" fill="#6a9955"/><rect x="1797" y="850.9" width="6" height="1.3" fill="#6a9955"/><rect x="1804" y="850.9" width="3" height="1.3" fill="#6a9955"/><rect x="1808" y="850.9" width="2" height="1.3" fill="#6a9955"/><rect x="1811" y="850.9" width="4" height="1.3" fill="#6a9955"/><rect x="1816" y="850.9" width="5" height="1.3" fill="#6a9955"/><rect x="1822" y="850.9" width="3" height="1.3" fill="#6a9955"/><rect x="1826" y="850.9" width="1" height="1.3" fill="#6a9955"/><rect x="1795" y="852.9" width="3" height="1.3" fill="#569cd6"/><rect x="1799" y="852.9" width="13" height="1.3" fill="#dcdcaa"/><rect x="1812" y="852.9" width="3" height="1.3" fill="#ffd700"/><rect x="1799" y="854.9" width="6" height="1.3" fill="#569cd6"/><rect x="1806" y="854.9" width="7" height="1.3" fill="#9cdcfe"/><rect x="1799" y="856.9" width="5" height="1.3" fill="#9cdcfe"/><rect x="1805" y="856.9" width="1" height="1.3" fill="#d4d4d4"/><rect x="1807" y="856.9" width="1" height="1.3" fill="#b5cea8"/><rect x="1799" y="858.9" width="5" height="1.3" fill="#dcdcaa"/><rect x="1804" y="858.9" width="1" height="1.3" fill="#ffd700"/><rect x="1805" y="858.9" width="6" height="1.3" fill="#ce9178"/><rect x="1812" y="858.9" width="5" height="1.3" fill="#ce9178"/><rect x="1818" y="858.9" width="6" height="1.3" fill="#ce9178"/><rect x="1825" y="858.9" width="3" height="1.3" fill="#ce9178"/><rect x="1828" y="858.9" width="1" height="1.3" fill="#ffd700"/><rect x="1795" y="862.9" width="5" height="1.3" fill="#dcdcaa"/><rect x="1800" y="862.9" width="1" height="1.3" fill="#ffd700"/><rect x="1801" y="862.9" width="8" height="1.3" fill="#ce9178"/><rect x="1810" y="862.9" width="6" height="1.3" fill="#ce9178"/><rect x="1817" y="862.9" width="7" height="1.3" fill="#ce9178"/><rect x="1825" y="862.9" width="5" height="1.3" fill="#ce9178"/><rect x="1831" y="862.9" width="4" height="1.3" fill="#ce9178"/><rect x="1836" y="862.9" width="3" height="1.3" fill="#ce9178"/><rect x="1839" y="862.9" width="1" height="1.3" fill="#ffd700"/><rect x="1795" y="864.9" width="1" height="1.3" fill="#6a9955"/><rect x="1797" y="864.9" width="7" height="1.3" fill="#6a9955"/><rect x="1805" y="864.9" width="3" height="1.3" fill="#6a9955"/><rect x="1795" y="866.9" width="4" height="1.3" fill="#4ec9b0"/><rect x="1799" y="866.9" width="1" height="1.3" fill="#d4d4d4"/><rect x="1800" y="866.9" width="5" height="1.3" fill="#dcdcaa"/><rect x="1805" y="866.9" width="1" height="1.3" fill="#ffd700"/><rect x="1806" y="866.9" width="1" height="1.3" fill="#b5cea8"/><rect x="1807" y="866.9" width="1" height="1.3" fill="#ffd700"/><rect x="1795" y="868.9" width="5" height="1.3" fill="#dcdcaa"/><rect x="1800" y="868.9" width="1" height="1.3" fill="#ffd700"/><rect x="1801" y="868.9" width="9" height="1.3" fill="#ce9178"/><rect x="1811" y="868.9" width="3" height="1.3" fill="#ce9178"/><rect x="1815" y="868.9" width="4" height="1.3" fill="#ce9178"/><rect x="1820" y="868.9" width="7" height="1.3" fill="#ce9178"/><rect x="1828" y="868.9" width="3" height="1.3" fill="#ce9178"/><rect x="1832" y="868.9" width="3" height="1.3" fill="#ce9178"/><rect x="1836" y="868.9" width="5" height="1.3" fill="#ce9178"/><rect x="1842" y="868.9" width="2" height="1.3" fill="#ce9178"/><rect x="1845" y="868.9" width="2" height="1.3" fill="#ce9178"/><rect x="1847" y="868.9" width="1" height="1.3" fill="#ffd700"/><rect x="1791" y="870.9" width="4" height="1.3" fill="#ce9178"/><rect x="1796" y="870.9" width="8" height="1.3" fill="#ce9178"/><rect x="1805" y="870.9" width="6" height="1.3" fill="#ce9178"/><rect x="1812" y="870.9" width="6" height="1.3" fill="#ce9178"/><rect x="1819" y="870.9" width="8" height="1.3" fill="#ce9178"/><rect x="1828" y="870.9" width="3" height="1.3" fill="#ce9178"/><rect x="1795" y="872.9" width="1" height="1.3" fill="#6a9955"/><rect x="1797" y="872.9" width="4" height="1.3" fill="#6a9955"/><rect x="1802" y="872.9" width="4" height="1.3" fill="#6a9955"/><rect x="1807" y="872.9" width="1" height="1.3" fill="#6a9955"/><rect x="1795" y="874.9" width="4" height="1.3" fill="#4ec9b0"/><rect x="1799" y="874.9" width="1" height="1.3" fill="#d4d4d4"/><rect x="1800" y="874.9" width="5" height="1.3" fill="#dcdcaa"/><rect x="1805" y="874.9" width="1" height="1.3" fill="#ffd700"/><rect x="1806" y="874.9" width="1" height="1.3" fill="#b5cea8"/><rect x="1807" y="874.9" width="1" height="1.3" fill="#ffd700"/><rect x="1795" y="876.9" width="1" height="1.3" fill="#6a9955"/><rect x="1797" y="876.9" width="7" height="1.3" fill="#6a9955"/><rect x="1805" y="876.9" width="7" height="1.3" fill="#6a9955"/><rect x="1813" y="876.9" width="6" height="1.3" fill="#6a9955"/><rect x="1820" y="876.9" width="7" height="1.3" fill="#6a9955"/><rect x="1828" y="876.9" width="6" height="1.3" fill="#6a9955"/><rect x="1795" y="878.9" width="2" height="1.3" fill="#9cdcfe"/><rect x="1798" y="878.9" width="1" height="1.3" fill="#d4d4d4"/><rect x="1800" y="878.9" width="5" height="1.3" fill="#dcdcaa"/><rect x="1805" y="878.9" width="1" height="1.3" fill="#ffd700"/><rect x="1806" y="878.9" width="4" height="1.3" fill="#ce9178"/><rect x="1811" y="878.9" width="7" height="1.3" fill="#ce9178"/><rect x="1819" y="878.9" width="4" height="1.3" fill="#ce9178"/><rect x="1824" y="878.9" width="8" height="1.3" fill="#ce9178"/><rect x="1833" y="878.9" width="3" height="1.3" fill="#ce9178"/><rect x="1837" y="878.9" width="3" height="1.3" fill="#ce9178"/><rect x="1841" y="878.9" width="2" height="1.3" fill="#ce9178"/><rect x="1843" y="878.9" width="1" height="1.3" fill="#ffd700"/><rect x="1795" y="880.9" width="1" height="1.3" fill="#6a9955"/><rect x="1797" y="880.9" width="6" height="1.3" fill="#6a9955"/><rect x="1804" y="880.9" width="7" height="1.3" fill="#6a9955"/><rect x="1812" y="880.9" width="3" height="1.3" fill="#6a9955"/><rect x="1816" y="880.9" width="7" height="1.3" fill="#6a9955"/><rect x="1795" y="882.9" width="5" height="1.3" fill="#c586c0"/><rect x="1801" y="882.9" width="12" height="1.3" fill="#9cdcfe"/><rect x="1814" y="882.9" width="3" height="1.3" fill="#569cd6"/><rect x="1818" y="882.9" width="2" height="1.3" fill="#569cd6"/><rect x="1821" y="882.9" width="1" height="1.3" fill="#ffd700"/><rect x="1822" y="882.9" width="4" height="1.3" fill="#ce9178"/><rect x="1827" y="882.9" width="3" height="1.3" fill="#ce9178"/><rect x="1830" y="882.9" width="1" height="1.3" fill="#ffd700"/><rect x="1831" y="882.9" width="1" height="1.3" fill="#d4d4d4"/><rect x="1799" y="884.9" width="2" height="1.3" fill="#9cdcfe"/><rect x="1802" y="884.9" width="1" height="1.3" fill="#d4d4d4"/><rect x="1804" y="884.9" width="5" height="1.3" fill="#dcdcaa"/><rect x="1809" y="884.9" width="1" height="1.3" fill="#ffd700"/><rect x="1810" y="884.9" width="3" height="1.3" fill="#ce9178"/><rect x="1814" y="884.9" width="7" height="1.3" fill="#ce9178"/><rect x="1822" y="884.9" width="2" height="1.3" fill="#ce9178"/><rect x="1825" y="884.9" width="2" height="1.3" fill="#ce9178"/><rect x="1828" y="884.9" width="4" height="1.3" fill="#ce9178"/><rect x="1833" y="884.9" width="4" height="1.3" fill="#ce9178"/><rect x="1838" y="884.9" width="5" height="1.3" fill="#ce9178"/><rect x="1844" y="884.9" width="2" height="1.3" fill="#ce9178"/><rect x="1846" y="884.9" width="1" height="1.3" fill="#ffd700"/><rect x="1795" y="886.9" width="1" height="1.3" fill="#6a9955"/><rect x="1797" y="886.9" width="6" height="1.3" fill="#6a9955"/><rect x="1804" y="886.9" width="2" height="1.3" fill="#6a9955"/><rect x="1807" y="886.9" width="2" height="1.3" fill="#6a9955"/><rect x="1810" y="886.9" width="3" height="1.3" fill="#6a9955"/><rect x="1814" y="886.9" width="6" height="1.3" fill="#6a9955"/><rect x="1821" y="886.9" width="4" height="1.3" fill="#6a9955"/><rect x="1826" y="886.9" width="2" height="1.3" fill="#6a9955"/><rect x="1829" y="886.9" width="8" height="1.3" fill="#6a9955"/><rect x="1838" y="886.9" width="2" height="1.3" fill="#6a9955"/><rect x="1841" y="886.9" width="2" height="1.3" fill="#6a9955"/><rect x="1795" y="888.9" width="2" height="1.3" fill="#c586c0"/><rect x="1798" y="888.9" width="11" height="1.3" fill="#9cdcfe"/><rect x="1810" y="888.9" width="2" height="1.3" fill="#d4d4d4"/><rect x="1813" y="888.9" width="3" height="1.3" fill="#ce9178"/><rect x="1816" y="888.9" width="1" height="1.3" fill="#d4d4d4"/><rect x="1799" y="890.9" width="9" height="1.3" fill="#dcdcaa"/><rect x="1808" y="890.9" width="2" height="1.3" fill="#ffd700"/><rect x="1799" y="892.9" width="6" height="1.3" fill="#c586c0"/><rect x="1795" y="896.9" width="5" height="1.3" fill="#dcdcaa"/><rect x="1800" y="896.9" width="1" height="1.3" fill="#ffd700"/><rect x="1801" y="896.9" width="4" height="1.3" fill="#ce9178"/><rect x="1806" y="896.9" width="6" height="1.3" fill="#ce9178"/><rect x="1813" y="896.9" width="3" height="1.3" fill="#ce9178"/><rect x="1817" y="896.9" width="7" height="1.3" fill="#ce9178"/><rect x="1825" y="896.9" width="4" height="1.3" fill="#ce9178"/><rect x="1830" y="896.9" width="5" height="1.3" fill="#ce9178"/><rect x="1836" y="896.9" width="6" height="1.3" fill="#ce9178"/><rect x="1842" y="896.9" width="1" height="1.3" fill="#ffd700"/><rect x="1791" y="898.9" width="4" height="1.3" fill="#ce9178"/><rect x="1796" y="898.9" width="3" height="1.3" fill="#ce9178"/><rect x="1800" y="898.9" width="4" height="1.3" fill="#ce9178"/><rect x="1805" y="898.9" width="4" height="1.3" fill="#ce9178"/><rect x="1810" y="898.9" width="5" height="1.3" fill="#ce9178"/><rect x="1816" y="898.9" width="7" height="1.3" fill="#ce9178"/><rect x="1824" y="898.9" width="3" height="1.3" fill="#ce9178"/><rect x="1828" y="898.9" width="8" height="1.3" fill="#ce9178"/><rect x="1795" y="900.9" width="1" height="1.3" fill="#6a9955"/><rect x="1797" y="900.9" width="8" height="1.3" fill="#6a9955"/><rect x="1806" y="900.9" width="2" height="1.3" fill="#6a9955"/><rect x="1795" y="902.9" width="4" height="1.3" fill="#4ec9b0"/><rect x="1799" y="902.9" width="1" height="1.3" fill="#d4d4d4"/><rect x="1800" y="902.9" width="5" height="1.3" fill="#dcdcaa"/><rect x="1805" y="902.9" width="1" height="1.3" fill="#ffd700"/><rect x="1806" y="902.9" width="1" height="1.3" fill="#b5cea8"/><rect x="1807" y="902.9" width="1" height="1.3" fill="#ffd700"/><rect x="1795" y="904.9" width="1" height="1.3" fill="#6a9955"/><rect x="1797" y="904.9" width="8" height="1.3" fill="#6a9955"/><rect x="1806" y="904.9" width="2" height="1.3" fill="#6a9955"/><rect x="1809" y="904.9" width="5" height="1.3" fill="#6a9955"/><rect x="1815" y="904.9" width="8" height="1.3" fill="#6a9955"/><rect x="1824" y="904.9" width="8" height="1.3" fill="#6a9955"/><rect x="1833" y="904.9" width="1" height="1.3" fill="#6a9955"/><rect x="1795" y="906.9" width="2" height="1.3" fill="#9cdcfe"/><rect x="1798" y="906.9" width="1" height="1.3" fill="#d4d4d4"/><rect x="1800" y="906.9" width="5" height="1.3" fill="#dcdcaa"/><rect x="1805" y="906.9" width="1" height="1.3" fill="#ffd700"/><rect x="1806" y="906.9" width="9" height="1.3" fill="#ce9178"/><rect x="1816" y="906.9" width="8" height="1.3" fill="#ce9178"/><rect x="1825" y="906.9" width="8" height="1.3" fill="#ce9178"/><rect x="1834" y="906.9" width="3" height="1.3" fill="#ce9178"/><rect x="1838" y="906.9" width="5" height="1.3" fill="#ce9178"/><rect x="1843" y="906.9" width="1" height="1.3" fill="#ffd700"/><rect x="1791" y="908.9" width="5" height="1.3" fill="#ce9178"/><rect x="1797" y="908.9" width="7" height="1.3" fill="#ce9178"/><rect x="1805" y="908.9" width="4" height="1.3" fill="#ce9178"/><rect x="1810" y="908.9" width="5" height="1.3" fill="#ce9178"/><rect x="1816" y="908.9" width="8" height="1.3" fill="#ce9178"/><rect x="1825" y="908.9" width="3" height="1.3" fill="#ce9178"/><rect x="1829" y="908.9" width="4" height="1.3" fill="#ce9178"/><rect x="1834" y="908.9" width="3" height="1.3" fill="#ce9178"/><rect x="1795" y="910.9" width="1" height="1.3" fill="#6a9955"/><rect x="1797" y="910.9" width="7" height="1.3" fill="#6a9955"/><rect x="1805" y="910.9" width="8" height="1.3" fill="#6a9955"/><rect x="1814" y="910.9" width="6" height="1.3" fill="#6a9955"/><rect x="1821" y="910.9" width="2" height="1.3" fill="#6a9955"/><rect x="1795" y="912.9" width="5" height="1.3" fill="#c586c0"/><rect x="1801" y="912.9" width="2" height="1.3" fill="#9cdcfe"/><rect x="1804" y="912.9" width="3" height="1.3" fill="#569cd6"/><rect x="1808" y="912.9" width="2" height="1.3" fill="#569cd6"/><rect x="1811" y="912.9" width="1" height="1.3" fill="#ffd700"/><rect x="1812" y="912.9" width="4" height="1.3" fill="#ce9178"/><rect x="1817" y="912.9" width="3" height="1.3" fill="#ce9178"/><rect x="1820" y="912.9" width="1" height="1.3" fill="#ffd700"/><rect x="1821" y="912.9" width="1" height="1.3" fill="#d4d4d4"/><rect x="1799" y="914.9" width="2" height="1.3" fill="#9cdcfe"/><rect x="1802" y="914.9" width="1" height="1.3" fill="#d4d4d4"/><rect x="1804" y="914.9" width="5" height="1.3" fill="#dcdcaa"/><rect x="1809" y="914.9" width="1" height="1.3" fill="#ffd700"/><rect x="1810" y="914.9" width="5" height="1.3" fill="#ce9178"/><rect x="1816" y="914.9" width="6" height="1.3" fill="#ce9178"/><rect x="1823" y="914.9" width="8" height="1.3" fill="#ce9178"/><rect x="1832" y="914.9" width="6" height="1.3" fill="#ce9178"/><rect x="1838" y="914.9" width="1" height="1.3" fill="#ffd700"/><rect x="1795" y="916.9" width="1" height="1.3" fill="#6a9955"/><rect x="1797" y="916.9" width="8" height="1.3" fill="#6a9955"/><rect x="1806" y="916.9" width="3" height="1.3" fill="#6a9955"/><rect x="1810" y="916.9" width="5" height="1.3" fill="#6a9955"/><rect x="1816" y="916.9" width="7" height="1.3" fill="#6a9955"/><rect x="1824" y="916.9" width="4" height="1.3" fill="#6a9955"/><rect x="1829" y="916.9" width="6" height="1.3" fill="#6a9955"/><rect x="1836" y="916.9" width="2" height="1.3" fill="#6a9955"/><rect x="1839" y="916.9" width="4" height="1.3" fill="#6a9955"/><rect x="1795" y="918.9" width="2" height="1.3" fill="#c586c0"/><rect x="1798" y="918.9" width="2" height="1.3" fill="#9cdcfe"/><rect x="1801" y="918.9" width="2" height="1.3" fill="#d4d4d4"/><rect x="1804" y="918.9" width="3" height="1.3" fill="#ce9178"/><rect x="1807" y="918.9" width="1" height="1.3" fill="#d4d4d4"/><rect x="1799" y="920.9" width="5" height="1.3" fill="#dcdcaa"/><rect x="1804" y="920.9" width="1" height="1.3" fill="#ffd700"/><rect x="1805" y="920.9" width="5" height="1.3" fill="#ce9178"/><rect x="1811" y="920.9" width="2" height="1.3" fill="#ce9178"/><rect x="1814" y="920.9" width="6" height="1.3" fill="#ce9178"/><rect x="1821" y="920.9" width="2" height="1.3" fill="#ce9178"/><rect x="1824" y="920.9" width="5" height="1.3" fill="#ce9178"/><rect x="1830" y="920.9" width="6" height="1.3" fill="#ce9178"/><rect x="1837" y="920.9" width="6" height="1.3" fill="#ce9178"/><rect x="1844" y="920.9" width="5" height="1.3" fill="#ce9178"/><rect x="1850" y="920.9" width="8" height="1.3" fill="#ce9178"/><rect x="1859" y="920.9" width="5" height="1.3" fill="#ce9178"/><rect x="1864" y="920.9" width="1" height="1.3" fill="#ffd700"/><rect x="1799" y="922.9" width="1" height="1.3" fill="#6a9955"/><rect x="1801" y="922.9" width="5" height="1.3" fill="#6a9955"/><rect x="1807" y="922.9" width="4" height="1.3" fill="#6a9955"/><rect x="1799" y="924.9" width="4" height="1.3" fill="#4ec9b0"/><rect x="1803" y="924.9" width="1" height="1.3" fill="#d4d4d4"/><rect x="1804" y="924.9" width="5" height="1.3" fill="#dcdcaa"/><rect x="1809" y="924.9" width="1" height="1.3" fill="#ffd700"/><rect x="1810" y="924.9" width="1" height="1.3" fill="#b5cea8"/><rect x="1811" y="924.9" width="1" height="1.3" fill="#ffd700"/><rect x="1799" y="926.9" width="1" height="1.3" fill="#6a9955"/><rect x="1801" y="926.9" width="8" height="1.3" fill="#6a9955"/><rect x="1810" y="926.9" width="4" height="1.3" fill="#6a9955"/><rect x="1799" y="928.9" width="12" height="1.3" fill="#dcdcaa"/><rect x="1811" y="928.9" width="2" height="1.3" fill="#ffd700"/><rect x="1799" y="930.9" width="1" height="1.3" fill="#6a9955"/><rect x="1801" y="930.9" width="2" height="1.3" fill="#6a9955"/><rect x="1804" y="930.9" width="2" height="1.3" fill="#6a9955"/><rect x="1807" y="930.9" width="4" height="1.3" fill="#6a9955"/><rect x="1812" y="930.9" width="3" height="1.3" fill="#6a9955"/><rect x="1816" y="930.9" width="7" height="1.3" fill="#6a9955"/><rect x="1824" y="930.9" width="6" height="1.3" fill="#6a9955"/><rect x="1831" y="930.9" width="2" height="1.3" fill="#6a9955"/><rect x="1834" y="930.9" width="4" height="1.3" fill="#6a9955"/><rect x="1799" y="932.9" width="2" height="1.3" fill="#9cdcfe"/><rect x="1802" y="932.9" width="1" height="1.3" fill="#d4d4d4"/><rect x="1804" y="932.9" width="5" height="1.3" fill="#dcdcaa"/><rect x="1809" y="932.9" width="1" height="1.3" fill="#ffd700"/><rect x="1810" y="932.9" width="5" height="1.3" fill="#ce9178"/><rect x="1816" y="932.9" width="5" height="1.3" fill="#ce9178"/><rect x="1822" y="932.9" width="7" height="1.3" fill="#ce9178"/><rect x="1830" y="932.9" width="8" height="1.3" fill="#ce9178"/><rect x="1839" y="932.9" width="7" height="1.3" fill="#ce9178"/><rect x="1847" y="932.9" width="4" height="1.3" fill="#ce9178"/><rect x="1852" y="932.9" width="4" height="1.3" fill="#ce9178"/><rect x="1857" y="932.9" width="3" height="1.3" fill="#ce9178"/><rect x="1861" y="932.9" width="4" height="1.3" fill="#ce9178"/><rect x="1865" y="932.9" width="1" height="1.3" fill="#ffd700"/><rect x="1799" y="934.9" width="1" height="1.3" fill="#6a9955"/><rect x="1801" y="934.9" width="4" height="1.3" fill="#6a9955"/><rect x="1806" y="934.9" width="7" height="1.3" fill="#6a9955"/><rect x="1814" y="934.9" width="7" height="1.3" fill="#6a9955"/><rect x="1822" y="934.9" width="4" height="1.3" fill="#6a9955"/><rect x="1799" y="936.9" width="5" height="1.3" fill="#c586c0"/><rect x="1805" y="936.9" width="2" height="1.3" fill="#9cdcfe"/><rect x="1808" y="936.9" width="3" height="1.3" fill="#569cd6"/><rect x="1812" y="936.9" width="2" height="1.3" fill="#569cd6"/><rect x="1815" y="936.9" width="1" height="1.3" fill="#ffd700"/><rect x="1816" y="936.9" width="4" height="1.3" fill="#ce9178"/><rect x="1821" y="936.9" width="3" height="1.3" fill="#ce9178"/><rect x="1824" y="936.9" width="1" height="1.3" fill="#ffd700"/><rect x="1825" y="936.9" width="1" height="1.3" fill="#d4d4d4"/><rect x="1803" y="938.9" width="2" height="1.3" fill="#9cdcfe"/><rect x="1806" y="938.9" width="1" height="1.3" fill="#d4d4d4"/><rect x="1808" y="938.9" width="5" height="1.3" fill="#dcdcaa"/><rect x="1813" y="938.9" width="1" height="1.3" fill="#ffd700"/><rect x="1814" y="938.9" width="5" height="1.3" fill="#ce9178"/><rect x="1820" y="938.9" width="2" height="1.3" fill="#ce9178"/><rect x="1823" y="938.9" width="4" height="1.3" fill="#ce9178"/><rect x="1828" y="938.9" width="7" height="1.3" fill="#ce9178"/><rect x="1836" y="938.9" width="6" height="1.3" fill="#ce9178"/><rect x="1842" y="938.9" width="1" height="1.3" fill="#ffd700"/><rect x="1799" y="940.9" width="1" height="1.3" fill="#6a9955"/><rect x="1801" y="940.9" width="6" height="1.3" fill="#6a9955"/><rect x="1808" y="940.9" width="6" height="1.3" fill="#6a9955"/><rect x="1815" y="940.9" width="7" height="1.3" fill="#6a9955"/><rect x="1823" y="940.9" width="4" height="1.3" fill="#6a9955"/><rect x="1828" y="940.9" width="5" height="1.3" fill="#6a9955"/><rect x="1834" y="940.9" width="6" height="1.3" fill="#6a9955"/><rect x="1841" y="940.9" width="6" height="1.3" fill="#6a9955"/><rect x="1799" y="942.9" width="2" height="1.3" fill="#c586c0"/><rect x="1802" y="942.9" width="2" height="1.3" fill="#9cdcfe"/><rect x="1805" y="942.9" width="2" height="1.3" fill="#d4d4d4"/><rect x="1808" y="942.9" width="3" height="1.3" fill="#ce9178"/><rect x="1811" y="942.9" width="1" height="1.3" fill="#d4d4d4"/><rect x="1803" y="944.9" width="5" height="1.3" fill="#dcdcaa"/><rect x="1808" y="944.9" width="1" height="1.3" fill="#ffd700"/><rect x="1809" y="944.9" width="5" height="1.3" fill="#ce9178"/><rect x="1815" y="944.9" width="5" height="1.3" fill="#ce9178"/><rect x="1821" y="944.9" width="4" height="1.3" fill="#ce9178"/><rect x="1826" y="944.9" width="3" height="1.3" fill="#ce9178"/><rect x="1830" y="944.9" width="5" height="1.3" fill="#ce9178"/><rect x="1836" y="944.9" width="7" height="1.3" fill="#ce9178"/><rect x="1844" y="944.9" width="6" height="1.3" fill="#ce9178"/><rect x="1851" y="944.9" width="3" height="1.3" fill="#ce9178"/><rect x="1855" y="944.9" width="3" height="1.3" fill="#ce9178"/><rect x="1858" y="944.9" width="1" height="1.3" fill="#ffd700"/><rect x="1803" y="946.9" width="1" height="1.3" fill="#6a9955"/><rect x="1805" y="946.9" width="4" height="1.3" fill="#6a9955"/><rect x="1810" y="946.9" width="6" height="1.3" fill="#6a9955"/><rect x="1803" y="948.9" width="4" height="1.3" fill="#4ec9b0"/><rect x="1807" y="948.9" width="1" height="1.3" fill="#d4d4d4"/><rect x="1808" y="948.9" width="5" height="1.3" fill="#dcdcaa"/><rect x="1813" y="948.9" width="1" height="1.3" fill="#ffd700"/><rect x="1814" y="948.9" width="1" height="1.3" fill="#b5cea8"/><rect x="1815" y="948.9" width="1" height="1.3" fill="#ffd700"/><rect x="1803" y="950.9" width="1" height="1.3" fill="#6a9955"/><rect x="1805" y="950.9" width="4" height="1.3" fill="#6a9955"/><rect x="1810" y="950.9" width="2" height="1.3" fill="#6a9955"/><rect x="1813" y="950.9" width="4" height="1.3" fill="#6a9955"/><rect x="1818" y="950.9" width="1" height="1.3" fill="#6a9955"/><rect x="1803" y="952.9" width="12" height="1.3" fill="#dcdcaa"/><rect x="1815" y="952.9" width="2" height="1.3" fill="#ffd700"/><rect x="1803" y="954.9" width="1" height="1.3" fill="#6a9955"/><rect x="1805" y="954.9" width="5" height="1.3" fill="#6a9955"/><rect x="1811" y="954.9" width="6" height="1.3" fill="#6a9955"/><rect x="1818" y="954.9" width="5" height="1.3" fill="#6a9955"/><rect x="1824" y="954.9" width="8" height="1.3" fill="#6a9955"/><rect x="1833" y="954.9" width="3" height="1.3" fill="#6a9955"/><rect x="1837" y="954.9" width="5" height="1.3" fill="#6a9955"/><rect x="1803" y="956.9" width="2" height="1.3" fill="#9cdcfe"/><rect x="1806" y="956.9" width="1" height="1.3" fill="#d4d4d4"/><rect x="1808" y="956.9" width="5" height="1.3" fill="#dcdcaa"/><rect x="1813" y="956.9" width="1" height="1.3" fill="#ffd700"/><rect x="1814" y="956.9" width="7" height="1.3" fill="#ce9178"/><rect x="1822" y="956.9" width="4" height="1.3" fill="#ce9178"/><rect x="1827" y="956.9" width="8" height="1.3" fill="#ce9178"/><rect x="1836" y="956.9" width="5" height="1.3" fill="#ce9178"/><rect x="1842" y="956.9" width="6" height="1.3" fill="#ce9178"/><rect x="1849" y="956.9" width="3" height="1.3" fill="#ce9178"/><rect x="1853" y="956.9" width="8" height="1.3" fill="#ce9178"/><rect x="1862" y="956.9" width="6" height="1.3" fill="#ce9178"/><rect x="1868" y="956.9" width="1" height="1.3" fill="#ffd700"/><rect x="1803" y="958.9" width="1" height="1.3" fill="#6a9955"/><rect x="1805" y="958.9" width="6" height="1.3" fill="#6a9955"/><rect x="1812" y="958.9" width="3" height="1.3" fill="#6a9955"/><rect x="1816" y="958.9" width="3" height="1.3" fill="#6a9955"/><rect x="1820" y="958.9" width="2" height="1.3" fill="#6a9955"/><rect x="1823" y="958.9" width="8" height="1.3" fill="#6a9955"/><rect x="1803" y="960.9" width="5" height="1.3" fill="#c586c0"/><rect x="1809" y="960.9" width="2" height="1.3" fill="#9cdcfe"/><rect x="1812" y="960.9" width="3" height="1.3" fill="#569cd6"/><rect x="1816" y="960.9" width="2" height="1.3" fill="#569cd6"/><rect x="1819" y="960.9" width="1" height="1.3" fill="#ffd700"/><rect x="1820" y="960.9" width="4" height="1.3" fill="#ce9178"/><rect x="1825" y="960.9" width="3" height="1.3" fill="#ce9178"/><rect x="1828" y="960.9" width="1" height="1.3" fill="#ffd700"/><rect x="1829" y="960.9" width="1" height="1.3" fill="#d4d4d4"/><rect x="1807" y="962.9" width="2" height="1.3" fill="#9cdcfe"/><rect x="1810" y="962.9" width="1" height="1.3" fill="#d4d4d4"/><rect x="1812" y="962.9" width="5" height="1.3" fill="#dcdcaa"/><rect x="1817" y="962.9" width="1" height="1.3" fill="#ffd700"/><rect x="1818" y="962.9" width="6" height="1.3" fill="#ce9178"/><rect x="1825" y="962.9" width="8" height="1.3" fill="#ce9178"/><rect x="1834" y="962.9" width="4" height="1.3" fill="#ce9178"/><rect x="1839" y="962.9" width="7" height="1.3" fill="#ce9178"/><rect x="1846" y="962.9" width="1" height="1.3" fill="#ffd700"/><rect x="1803" y="964.9" width="1" height="1.3" fill="#6a9955"/><rect x="1805" y="964.9" width="2" height="1.3" fill="#6a9955"/><rect x="1808" y="964.9" width="3" height="1.3" fill="#6a9955"/><rect x="1812" y="964.9" width="6" height="1.3" fill="#6a9955"/><rect x="1819" y="964.9" width="2" height="1.3" fill="#6a9955"/><rect x="1822" y="964.9" width="6" height="1.3" fill="#6a9955"/><rect x="1829" y="964.9" width="3" height="1.3" fill="#6a9955"/><rect x="1833" y="964.9" width="6" height="1.3" fill="#6a9955"/><rect x="1840" y="964.9" width="4" height="1.3" fill="#6a9955"/><rect x="1845" y="964.9" width="2" height="1.3" fill="#6a9955"/><rect x="1848" y="964.9" width="3" height="1.3" fill="#6a9955"/><rect x="1803" y="966.9" width="2" height="1.3" fill="#c586c0"/><rect x="1806" y="966.9" width="2" height="1.3" fill="#9cdcfe"/><rect x="1809" y="966.9" width="2" height="1.3" fill="#d4d4d4"/><rect x="1812" y="966.9" width="3" height="1.3" fill="#ce9178"/><rect x="1815" y="966.9" width="1" height="1.3" fill="#d4d4d4"/><rect x="1807" y="968.9" width="5" height="1.3" fill="#dcdcaa"/><rect x="1812" y="968.9" width="1" height="1.3" fill="#ffd700"/><rect x="1813" y="968.9" width="9" height="1.3" fill="#ce9178"/><rect x="1823" y="968.9" width="8" height="1.3" fill="#ce9178"/><rect x="1832" y="968.9" width="5" height="1.3" fill="#ce9178"/><rect x="1838" y="968.9" width="2" height="1.3" fill="#ce9178"/><rect x="1841" y="968.9" width="6" height="1.3" fill="#ce9178"/><rect x="1848" y="968.9" width="6" height="1.3" fill="#ce9178"/><rect x="1855" y="968.9" width="4" height="1.3" fill="#ce9178"/><rect x="1859" y="968.9" width="1" height="1.3" fill="#ffd700"/><rect x="1807" y="970.9" width="1" height="1.3" fill="#6a9955"/><rect x="1809" y="970.9" width="8" height="1.3" fill="#6a9955"/><rect x="1818" y="970.9" width="5" height="1.3" fill="#6a9955"/><rect x="1807" y="972.9" width="12" height="1.3" fill="#dcdcaa"/><rect x="1819" y="972.9" width="2" height="1.3" fill="#ffd700"/><rect x="1807" y="974.9" width="5" height="1.3" fill="#dcdcaa"/><rect x="1812" y="974.9" width="1" height="1.3" fill="#ffd700"/><rect x="1813" y="974.9" width="3" height="1.3" fill="#ce9178"/><rect x="1817" y="974.9" width="4" height="1.3" fill="#ce9178"/><rect x="1822" y="974.9" width="2" height="1.3" fill="#ce9178"/><rect x="1825" y="974.9" width="4" height="1.3" fill="#ce9178"/><rect x="1830" y="974.9" width="7" height="1.3" fill="#ce9178"/><rect x="1838" y="974.9" width="2" height="1.3" fill="#ce9178"/><rect x="1841" y="974.9" width="4" height="1.3" fill="#ce9178"/><rect x="1846" y="974.9" width="2" height="1.3" fill="#ce9178"/><rect x="1849" y="974.9" width="2" height="1.3" fill="#ce9178"/><rect x="1852" y="974.9" width="7" height="1.3" fill="#ce9178"/><rect x="1860" y="974.9" width="4" height="1.3" fill="#ce9178"/><rect x="1864" y="974.9" width="1" height="1.3" fill="#ffd700"/><rect x="1807" y="976.9" width="1" height="1.3" fill="#6a9955"/><rect x="1809" y="976.9" width="3" height="1.3" fill="#6a9955"/><rect x="1813" y="976.9" width="2" height="1.3" fill="#6a9955"/><rect x="1816" y="976.9" width="7" height="1.3" fill="#6a9955"/><rect x="1824" y="976.9" width="8" height="1.3" fill="#6a9955"/><rect x="1833" y="976.9" width="7" height="1.3" fill="#6a9955"/><rect x="1841" y="976.9" width="5" height="1.3" fill="#6a9955"/><rect x="1807" y="978.9" width="2" height="1.3" fill="#9cdcfe"/><rect x="1810" y="978.9" width="1" height="1.3" fill="#d4d4d4"/><rect x="1812" y="978.9" width="5" height="1.3" fill="#dcdcaa"/><rect x="1817" y="978.9" width="1" height="1.3" fill="#ffd700"/><rect x="1818" y="978.9" width="4" height="1.3" fill="#ce9178"/><rect x="1823" y="978.9" width="7" height="1.3" fill="#ce9178"/><rect x="1831" y="978.9" width="3" height="1.3" fill="#ce9178"/><rect x="1835" y="978.9" width="5" height="1.3" fill="#ce9178"/><rect x="1841" y="978.9" width="8" height="1.3" fill="#ce9178"/><rect x="1850" y="978.9" width="6" height="1.3" fill="#ce9178"/><rect x="1857" y="978.9" width="4" height="1.3" fill="#ce9178"/><rect x="1862" y="978.9" width="4" height="1.3" fill="#ce9178"/><rect x="1866" y="978.9" width="1" height="1.3" fill="#ffd700"/><rect x="1807" y="980.9" width="1" height="1.3" fill="#6a9955"/><rect x="1809" y="980.9" width="5" height="1.3" fill="#6a9955"/><rect x="1815" y="980.9" width="5" height="1.3" fill="#6a9955"/><rect x="1821" y="980.9" width="4" height="1.3" fill="#6a9955"/><rect x="1826" y="980.9" width="4" height="1.3" fill="#6a9955"/><rect x="1831" y="980.9" width="5" height="1.3" fill="#6a9955"/><rect x="1807" y="982.9" width="5" height="1.3" fill="#c586c0"/><rect x="1813" y="982.9" width="19" height="1.3" fill="#9cdcfe"/><rect x="1833" y="982.9" width="3" height="1.3" fill="#569cd6"/><rect x="1837" y="982.9" width="2" height="1.3" fill="#569cd6"/><rect x="1840" y="982.9" width="1" height="1.3" fill="#ffd700"/><rect x="1841" y="982.9" width="4" height="1.3" fill="#ce9178"/><rect x="1846" y="982.9" width="3" height="1.3" fill="#ce9178"/><rect x="1849" y="982.9" width="1" height="1.3" fill="#ffd700"/><rect x="1850" y="982.9" width="1" height="1.3" fill="#d4d4d4"/><rect x="1811" y="984.9" width="2" height="1.3" fill="#9cdcfe"/><rect x="1814" y="984.9" width="1" height="1.3" fill="#d4d4d4"/><rect x="1816" y="984.9" width="5" height="1.3" fill="#dcdcaa"/><rect x="1821" y="984.9" width="1" height="1.3" fill="#ffd700"/><rect x="1822" y="984.9" width="5" height="1.3" fill="#ce9178"/><rect x="1828" y="984.9" width="7" height="1.3" fill="#ce9178"/><rect x="1836" y="984.9" width="3" height="1.3" fill="#ce9178"/><rect x="1840" y="984.9" width="5" height="1.3" fill="#ce9178"/><rect x="1846" y="984.9" width="5" height="1.3" fill="#ce9178"/><rect x="1852" y="984.9" width="7" height="1.3" fill="#ce9178"/><rect x="1859" y="984.9" width="1" height="1.3" fill="#ffd700"/><rect x="1807" y="986.9" width="1" height="1.3" fill="#6a9955"/><rect x="1809" y="986.9" width="8" height="1.3" fill="#6a9955"/><rect x="1818" y="986.9" width="7" height="1.3" fill="#6a9955"/><rect x="1826" y="986.9" width="2" height="1.3" fill="#6a9955"/><rect x="1829" y="986.9" width="7" height="1.3" fill="#6a9955"/><rect x="1837" y="986.9" width="6" height="1.3" fill="#6a9955"/><rect x="1844" y="986.9" width="2" height="1.3" fill="#6a9955"/><rect x="1847" y="986.9" width="5" height="1.3" fill="#6a9955"/><rect x="1853" y="986.9" width="2" height="1.3" fill="#6a9955"/><rect x="1807" y="988.9" width="2" height="1.3" fill="#c586c0"/><rect x="1810" y="988.9" width="18" height="1.3" fill="#9cdcfe"/><rect x="1829" y="988.9" width="2" height="1.3" fill="#d4d4d4"/><rect x="1832" y="988.9" width="3" height="1.3" fill="#ce9178"/><rect x="1835" y="988.9" width="1" height="1.3" fill="#d4d4d4"/></g><rect x="1903" y="115" width="1" height="878" fill="#141414"/><rect x="1904" y="116" width="16" height="1" fill="#bdbdbd"/><rect x="1909" y="116" width="7" height="5" fill="#8a8a8a"/><rect x="1903" y="585" width="17" height="44" fill="#434343"/></svg><div id="status"><div class="a" style="left:0;top:-1px;width:43px;height:28px;background:#0078d4"></div><svg width="14" height="15" style="left:15px;top:5px" viewBox="0 0 14 15"><path d="M1 14 L6 9 L1 4 M13 1 L8 6 L13 11" stroke="#ffffff" stroke-width="1.4" fill="none"/></svg><svg width="17" height="17" style="left:53px;top:4px" viewBox="0 0 17 17"><circle cx="8.5" cy="8.5" r="7.5" stroke="#cccccc" stroke-width="1.2" fill="none"/><path d="M5.5 5.5 L11.5 11.5 M11.5 5.5 L5.5 11.5" stroke="#cccccc" stroke-width="1.2"/></svg><svg width="16" height="15" style="left:87px;top:5px" viewBox="0 0 16 15"><path d="M8 1 L15 14 H1 Z" stroke="#cccccc" stroke-width="1.2" fill="none" stroke-linejoin="round"/><path d="M8 5.5 V10 M8 11.5 V12.8" stroke="#cccccc" stroke-width="1.3"/></svg><div class="t" style="left:1542px">{ }</div><svg width="19.2" height="16.8" style="left:1628.5px;top:5.5px" viewBox="0 0 21.2 18.6">
<rect x="3" y="1.2" width="6.9" height="6.7" rx="3" stroke="#cccccc" stroke-width="2.2" fill="none"/>
<rect x="11" y="1.2" width="6.9" height="6.7" rx="3" stroke="#cccccc" stroke-width="2.2" fill="none"/>
<path d="M0 13.3 Q0 8.1 5 8.1 H16.2 Q21.2 8.1 21.2 13.3 Q21.2 18.3 10.6 18.3 Q0 18.3 0 13.3 Z" fill="#cccccc"/>
<rect x="4.2" y="9.3" width="11.7" height="5.9" rx="1.5" fill="#181818"/>
<rect x="7.1" y="10.5" width="2" height="3.8" fill="#cccccc"/><rect x="11.35" y="10.5" width="2.4" height="3.8" fill="#cccccc"/></svg><svg width="16" height="17" style="left:1886px;top:4px" viewBox="0 0 16 17"><path d="M3 12 V7 Q3 2 8 2 Q13 2 13 7 V12 L14.5 13.5 H1.5 Z M6 15 Q8 17 10 15" stroke="#cccccc" stroke-width="1.2" fill="none"/></svg></div><div id="taskbar"><div class="a" style="left:0;top:0;width:1920px;height:1px;background:#cfcfcf"></div><svg width="30" height="30" style="left:585px;top:16px" viewBox="0 0 30 30">
<defs><linearGradient id="wg" x1="0" y1="0" x2="1" y2="1"><stop offset="0" stop-color="#5ac8fa"/><stop offset="1" stop-color="#0067c0"/></linearGradient></defs>
<rect x="0" y="0" width="13.9" height="13.9" rx="1" fill="url(#wg)"/><rect x="15.2" y="0" width="13.9" height="13.9" rx="1" fill="url(#wg)"/>
<rect x="0" y="15.2" width="13.9" height="13.9" rx="1" fill="url(#wg)"/><rect x="15.2" y="15.2" width="13.9" height="13.9" rx="1" fill="url(#wg)"/></svg><div class="a" style="left:632px;top:10.5px;width:273px;height:39px;border-radius:19.5px;background:#f4f4f4;border:1px solid #d8d8d8"></div><svg width="20" height="20" style="left:645px;top:20px" viewBox="0 0 20 20"><circle cx="8" cy="8" r="6.3" stroke="#1a1a1a" stroke-width="2" fill="none"/><path d="M12.5 12.5 L17.8 17.8" stroke="#1a1a1a" stroke-width="2.2" stroke-linecap="round"/></svg><svg width="64" height="33" style="left:838.5px;top:15px" viewBox="0 0 64 33">
<defs><clipPath id="lc"><path d="M3 24 Q0 18 4 14 Q6 9 12 8 Q18 2 28 4 Q36 2 42 6 Q47 3 50 0 Q60 4 61 14 Q64 20 62 26 Q58 32 45 32 H14 Q5 32 3 24 Z"/></clipPath></defs>
<g clip-path="url(#lc)">
<rect x="0" y="0" width="64" height="33" fill="#a9d8f2"/>
<rect x="8" y="9" width="30" height="10" fill="#f0c8c0"/>
<path d="M47 12 Q47 3 52.5 3 Q58 3 58 12 Z" fill="#7a7a78"/>
<rect x="51.5" y="0" width="2" height="4" fill="#5a5a58"/>
<rect x="46" y="11" width="13" height="8" fill="#ecd9b8"/>
<rect x="32" y="17" width="32" height="11" fill="#f3c9c6"/>
<rect x="36" y="17" width="28" height="2.2" fill="#e07a3a"/>
<rect x="40" y="20" width="3" height="6" fill="#ffffff"/><rect x="46" y="20" width="2" height="6" fill="#ffffff"/><rect x="51" y="20" width="2" height="6" fill="#ffffff"/>
<rect x="0" y="18" width="22" height="15" fill="#4a90b0"/>
<rect x="2" y="21" width="20" height="5" fill="#1e6fa0"/>
<rect x="3" y="23.5" width="21" height="1.3" fill="#f0f0f0"/>
<path d="M5 27 Q9 24 13 27 M13 27 Q17 24 20 27" stroke="#30c0a0" stroke-width="2.5" fill="none"/>
<path d="M18 33 L24 20 L30 20 L35 33 Z" fill="#8a8a90"/>
<circle cx="29" cy="14" r="3.5" fill="#5a9a30"/>
<circle cx="28" cy="21" r="2.5" fill="#d8b030"/>
<circle cx="34" cy="25" r="4" fill="#6aa83a"/>
<path d="M35 33 Q40 26 48 27 Q55 25 64 28 V33 Z" fill="#9cbf3a"/>
<circle cx="42" cy="29" r="2.5" fill="#e0b030"/><circle cx="52" cy="28" r="2" fill="#d8b040"/>
</g></svg><svg width="1920" height="60" style="left:0;top:0" viewBox="0 1020 1920 60">
<defs><linearGradient id="cp1" x1="0" y1="0" x2="0" y2="1"><stop offset="0" stop-color="#1ea4f2"/><stop offset="0.45" stop-color="#5fb8a0"/><stop offset="0.75" stop-color="#f2c60a"/><stop offset="1" stop-color="#f0a020"/></linearGradient>
<linearGradient id="cp2" x1="0" y1="0" x2="0" y2="1"><stop offset="0" stop-color="#c080e0"/><stop offset="0.4" stop-color="#e060b0"/><stop offset="0.75" stop-color="#f08080"/><stop offset="1" stop-color="#f7b060"/></linearGradient></defs>
<path d="M927 1036 H944 Q946 1036 944.5 1038 L936 1044 L931 1055 Q930.5 1057.5 929.5 1060 L928 1062 Q927 1063 925.5 1063 Q922.5 1063 922 1060 L921.3 1050 Q921 1048 922 1046 L924.5 1038.5 Q925.3 1036 927 1036 Z" fill="url(#cp1)"/>
<path d="M945 1063 H930 Q928 1063 929.5 1061 L936 1055.5 L941 1044 Q941.8 1041.5 942.8 1039.5 L944 1037.5 Q945 1036 946.5 1036 Q949 1036 950 1039 L950.8 1049 Q951 1051 950 1053 L947.5 1060.5 Q946.7 1063 945 1063 Z" fill="url(#cp2)"/>
<path d="M940 1043.5 L942.5 1039.5 Q944 1037 946 1037 L947 1041 L942 1044 Z" fill="#1060d0" opacity="0.8"/>
<path d="M929.5 1062.5 L932.5 1056.5 L935.5 1057.5 L934 1063 Z" fill="#f05030"/>
</svg><svg width="30" height="27" style="left:976px;top:16.5px" viewBox="0 0 30 27">
<path d="M0 2 Q0 0 2 0 H10 L13 3 H28 Q30 3 30 5 V25 Q30 26.5 28.5 26.5 H1.5 Q0 26.5 0 25 Z" fill="#f4c136"/>
<path d="M0 6 H30 V25 Q30 26.5 28.5 26.5 H1.5 Q0 26.5 0 25 Z" fill="#fcd454"/>
<path d="M5 21 Q5 19 7 19 H23 Q25 19 25 21 V26.5 H5 Z" fill="#1e7ed8"/></svg><div class="a" style="left:987px;top:50px;width:8px;height:4px;border-radius:2px;background:#808080"></div><svg width="30" height="30" style="left:1031px;top:15px" viewBox="0 0 30 30"><circle cx="15" cy="15" r="14.8" fill="#e8112d"/>
<path d="M6.6 11.3 L21.2 7.3 L22.1 19.5 L22.3 22 L17.8 21.3 L17.8 19.6 L10 19.8 Z" fill="#ffffff"/><path d="M10.3 10.8 V16.5 M13.6 9.9 V16.5 M17 9 V16.5" stroke="#e8112d" stroke-width="1"/></svg><svg width="29" height="29" style="left:1086px;top:16px" viewBox="0 0 29 29">
<path d="M9 5 V2.5 Q9 1 10.5 1 H18.5 Q20 1 20 2.5 V5" stroke="#3aa0e8" stroke-width="2" fill="none"/>
<defs><linearGradient id="stg" x1="0" y1="0" x2="0" y2="1"><stop offset="0" stop-color="#1f6bc4"/><stop offset="1" stop-color="#1a3d78"/></linearGradient></defs><path d="M0.5 6 Q0.5 4.5 2 4.5 H27 Q28.5 4.5 28.5 6 V24 Q28.5 29 24 29 H5 Q0.5 29 0.5 24 Z" fill="url(#stg)"/>
<rect x="9" y="11" width="5" height="5" fill="#f25022"/><rect x="15" y="11" width="5" height="5" fill="#7fba00"/>
<rect x="9" y="17" width="5" height="5" fill="#00a4ef"/><rect x="15" y="17" width="5" height="5" fill="#ffb900"/></svg><svg width="30" height="30" style="left:1141px;top:13px" viewBox="0 0 30 30"><rect x="0" y="0" width="30" height="29.5" rx="13" fill="#0b5cff"/>
<text x="15" y="17.5" font-family="Liberation Sans" font-size="8.5" font-weight="bold" fill="#ffffff" text-anchor="middle">zoom</text></svg><div class="a" style="left:1187px;top:6px;width:48px;height:48px;border-radius:5px;background:#eeeeee;border:1px solid #e4e4e4"></div><svg width="30" height="30" style="left:1196px;top:15px" viewBox="0 0 100 100">
<path d="M16.24 50 L1.35 63.58 Q-0.5 66.5 1.35 69.74 L6.85 74.74 Q9.5 76.8 12.17 75 L29.34 61.96 L68.75 97.92 Q72 100.5 75.86 99.13 L75 72.7 L45.1 50 Z" fill="#0065a9"/>
<path d="M75.86 0.87 Q72 -0.5 68.75 2.08 L29.34 38.04 L12.17 25.01 Q9.5 23.2 6.85 25.25 L1.35 30.25 Q-0.5 33.5 1.35 36.41 L16.24 50 L45.1 50 L75 27.3 Z" fill="#007acc"/>
<path d="M75.86 0.87 L96.46 10.8 Q100 12.5 100 16.4 V83.6 Q100 87.5 96.46 89.2 L75.86 99.13 Q75 99.5 75 97 V3 Q75 0.5 75.86 0.87 Z" fill="#1f9cf0"/></svg><div class="a" style="left:1201px;top:50px;width:20px;height:4px;border-radius:2px;background:#0067c0"></div><svg width="30" height="30" style="left:1251px;top:15px" viewBox="0 0 30 30">
<path d="M15 15 L2.0 7.5 A15 15 0 0 1 28 7.5 Z" fill="#db4437"/>
<path d="M15 15 L28 7.5 A15 15 0 0 1 15 30 Z" fill="#f4c20d"/>
<path d="M15 15 L15 30 A15 15 0 0 1 2.0 7.5 Z" fill="#0f9d58"/>
<circle cx="15" cy="15" r="8" fill="#ffffff"/><circle cx="15" cy="15" r="6.5" fill="#4285f4"/></svg><div class="a" style="left:1262px;top:50px;width:8px;height:4px;border-radius:2px;background:#808080"></div><svg width="20" height="20" style="left:1267.5px;top:8.5px" viewBox="0 0 20 20"><circle cx="10" cy="10" r="9.7" fill="#c8b08a" stroke="#eeeeee" stroke-width="0.8"/><path d="M4 4 L16 16 M8 2 L14 18" stroke="#8a6a4a" stroke-width="2"/><path d="M2 14 Q10 20 18 14 V18 H2 Z" fill="#a0a0e0"/></svg><svg width="30" height="30" style="left:1306px;top:15px" viewBox="0 0 30 30">
<path d="M15 15 L2.0 7.5 A15 15 0 0 1 28 7.5 Z" fill="#db4437"/>
<path d="M15 15 L28 7.5 A15 15 0 0 1 15 30 Z" fill="#f4c20d"/>
<path d="M15 15 L15 30 A15 15 0 0 1 2.0 7.5 Z" fill="#0f9d58"/>
<circle cx="15" cy="15" r="8" fill="#ffffff"/><circle cx="15" cy="15" r="6.5" fill="#4285f4"/></svg><div class="a" style="left:1317px;top:50px;width:8px;height:4px;border-radius:2px;background:#808080"></div><svg width="20" height="20" style="left:1322.5px;top:8.5px" viewBox="0 0 20 20"><circle cx="10" cy="10" r="9.7" fill="#e65127"/><text x="10" y="14" font-family="Liberation Sans" font-size="10" font-weight="bold" fill="#ffe0d0" text-anchor="middle">M</text></svg><svg width="15" height="8" style="left:1594px;top:26px" viewBox="0 0 15 8"><path d="M1 7.5 L7.5 1 L14 7.5" stroke="#1f1f1f" stroke-width="1.4" fill="none"/></svg>
<svg width="22" height="18" style="left:1630px;top:22px" viewBox="0 0 22 18"><path d="M5 15 Q1 15 1 11.5 Q1 8 4.5 8 Q5 3 10 3 Q14.5 3 15.5 7 Q20.5 7 20.5 11 Q20.5 15 16.5 15 Z" fill="#bdbdbd" stroke="#1f1f1f" stroke-width="1.3"/><path d="M4 1 L19 17" stroke="#1f1f1f" stroke-width="1.4"/></svg>
<div class="a" style="left:1684px;top:25px;font-size:15px;line-height:17px;color:#1f1f1f">&#x3b5;</div>
<svg width="21" height="16" style="left:1726px;top:22px" viewBox="0 0 21 16"><path d="M1 5.5 Q10.5 -2.5 20 5.5 M4 8.8 Q10.5 3.2 17 8.8 M7 12 Q10.5 9 14 12" stroke="#1f1f1f" stroke-width="1.4" fill="none"/><circle cx="10.5" cy="14.5" r="1.3" fill="#1f1f1f"/></svg>
<svg width="21" height="17" style="left:1756px;top:22px" viewBox="0 0 21 17"><path d="M1 5.5 H4.5 L9.5 1 V16 L4.5 11.5 H1 Z" stroke="#1f1f1f" stroke-width="1.3" fill="none" stroke-linejoin="round"/><path d="M12.5 5.5 Q14.5 8.5 12.5 11.5 M15 3.5 Q18.5 8.5 15 13.5 M17.5 1.5 Q22.5 8.5 17.5 15.5" stroke="#1f1f1f" stroke-width="1.3" fill="none"/></svg>
<svg width="21" height="13" style="left:1786px;top:23.5px" viewBox="0 0 21 13"><rect x="0.7" y="0.7" width="17" height="11.6" rx="2.5" stroke="#1f1f1f" stroke-width="1.3" fill="none"/><rect x="3" y="3" width="3" height="7" fill="#1f1f1f"/><rect x="18.3" y="4" width="2.2" height="5" rx="1" fill="#1f1f1f"/></svg></div><svg width="1920" height="1080" style="left:0;top:0" viewBox="0 0 1920 1080" font-family="Liberation Sans"><text x="54.70" y="27.80" font-size="15.22" textLength="22.90" lengthAdjust="spacingAndGlyphs" fill="#cccccc" style="color:#cccccc" stroke="#cccccc" stroke-width="0.2">File</text><text x="98.75" y="27.80" font-size="15.22" textLength="26.25" lengthAdjust="spacingAndGlyphs" fill="#cccccc" style="color:#cccccc" stroke="#cccccc" stroke-width="0.2">Edit</text><text x="145.60" y="27.80" font-size="15.22" textLength="64.30" lengthAdjust="spacingAndGlyphs" fill="#cccccc" style="color:#cccccc" stroke="#cccccc" stroke-width="0.2">Selection</text><text x="230.80" y="27.80" font-size="15.22" textLength="33.66" lengthAdjust="spacingAndGlyphs" fill="#cccccc" style="color:#cccccc" stroke="#cccccc" stroke-width="0.2">View</text><text x="284.70" y="27.80" font-size="15.22" textLength="20.30" lengthAdjust="spacingAndGlyphs" fill="#cccccc" style="color:#cccccc" stroke="#cccccc" stroke-width="0.2">Go</text><text x="325.70" y="27.80" font-size="15.22" textLength="27.31" lengthAdjust="spacingAndGlyphs" fill="#cccccc" style="color:#cccccc" stroke="#cccccc" stroke-width="0.2">Run</text><text x="374.00" y="27.80" font-size="15.22" textLength="60.00" lengthAdjust="spacingAndGlyphs" fill="#cccccc" style="color:#cccccc" stroke="#cccccc" stroke-width="0.2">Terminal</text><text x="454.00" y="27.80" font-size="15.22" textLength="32.99" lengthAdjust="spacingAndGlyphs" fill="#cccccc" style="color:#cccccc" stroke="#cccccc" stroke-width="0.2">Help</text><text x="959.80" y="27.00" font-size="15.50" textLength="43.51" lengthAdjust="spacingAndGlyphs" fill="#cccccc" style="color:#cccccc" stroke="#cccccc" stroke-width="0.2">Search</text><text x="85.60" y="71.00" font-size="13.97" textLength="62.40" lengthAdjust="spacingAndGlyphs" fill="#cccccc" style="color:#cccccc" stroke="#cccccc" stroke-width="0.2">EXPLORER</text><text x="85.60" y="107.00" font-size="13.69" textLength="133.40" lengthAdjust="spacingAndGlyphs" fill="#cccccc" style="color:#cccccc" stroke="#cccccc" stroke-width="0.2" font-weight="bold">NO FOLDER OPENED</text><text x="85.00" y="149.20" font-size="16.06" textLength="241.71" lengthAdjust="spacingAndGlyphs" fill="#cccccc" style="color:#cccccc" stroke="#cccccc" stroke-width="0.2">You have not yet opened a folder.</text><text x="175.00" y="193.30" font-size="14.66" textLength="88.99" lengthAdjust="spacingAndGlyphs" fill="#ffffff" style="color:#ffffff" stroke="#ffffff" stroke-width="0.2">Open Folder</text><text x="85.00" y="238.70" font-size="16.06" textLength="210.80" lengthAdjust="spacingAndGlyphs" fill="#cccccc" style="color:#cccccc" stroke="#cccccc" stroke-width="0.2">Opening a folder will close all</text><text x="85.00" y="261.70" font-size="16.06" textLength="262.50" lengthAdjust="spacingAndGlyphs" fill="#cccccc" style="color:#cccccc" stroke="#cccccc" stroke-width="0.2">currently open editors. To keep them</text><text x="85.00" y="284.20" font-size="16.06" textLength="191.71" lengthAdjust="spacingAndGlyphs" fill="#cccccc" style="color:#cccccc" stroke="#cccccc" stroke-width="0.2"><tspan fill="#cccccc" stroke="#cccccc">open, </tspan><tspan fill="#4daafc" stroke="#4daafc">add a folder</tspan><tspan fill="#cccccc" stroke="#cccccc"> instead.</tspan></text><text x="85.00" y="957.00" font-size="13.69" textLength="58.00" lengthAdjust="spacingAndGlyphs" fill="#cccccc" style="color:#cccccc" stroke="#cccccc" stroke-width="0.2" font-weight="bold">OUTLINE</text><text x="85.00" y="985.00" font-size="13.69" textLength="62.29" lengthAdjust="spacingAndGlyphs" fill="#cccccc" style="color:#cccccc" stroke="#cccccc" stroke-width="0.2" font-weight="bold">TIMELINE</text><text x="420.20" y="71.70" font-size="15.78" textLength="79.70" lengthAdjust="spacingAndGlyphs" fill="#ffffff" style="color:#ffffff" stroke="#ffffff" stroke-width="0.2">advFinal.py</text><text x="576.50" y="71.90" font-size="15.36" textLength="33.26" lengthAdjust="spacingAndGlyphs" fill="#9d9d9d" style="color:#9d9d9d" stroke="#9d9d9d" stroke-width="0.2">print</text><text x="617.50" y="71.90" font-size="15.22" textLength="63.50" lengthAdjust="spacingAndGlyphs" fill="#8f8f8f" style="color:#8f8f8f" stroke="#8f8f8f" stroke-width="0.2">Untitled-1</text><text x="399.80" y="107.50" font-size="14.66" textLength="13.10" lengthAdjust="spacingAndGlyphs" fill="#a9a9a9" style="color:#a9a9a9" stroke="#a9a9a9" stroke-width="0.2">Z:</text><text x="433.00" y="107.50" font-size="14.66" textLength="54.30" lengthAdjust="spacingAndGlyphs" fill="#a9a9a9" style="color:#a9a9a9" stroke="#a9a9a9" stroke-width="0.2">DECI L2</text><text x="508.00" y="107.50" font-size="14.66" textLength="84.50" lengthAdjust="spacingAndGlyphs" fill="#a9a9a9" style="color:#a9a9a9" stroke="#a9a9a9" stroke-width="0.2">final project</text><text x="640.40" y="107.50" font-size="14.66" textLength="79.20" lengthAdjust="spacingAndGlyphs" fill="#a9a9a9" style="color:#a9a9a9" stroke="#a9a9a9" stroke-width="0.2">advFinal.py</text><text x="740.40" y="107.50" font-size="14.66" textLength="10.41" lengthAdjust="spacingAndGlyphs" fill="#a9a9a9" style="color:#a9a9a9" stroke="#a9a9a9" stroke-width="0.2">...</text><text x="74.00" y="1011.60" font-size="14.80" textLength="7.00" lengthAdjust="spacingAndGlyphs" fill="#cccccc" style="color:#cccccc" stroke="#cccccc" stroke-width="0.2">0</text><text x="108.00" y="1011.60" font-size="14.80" textLength="7.60" lengthAdjust="spacingAndGlyphs" fill="#cccccc" style="color:#cccccc" stroke="#cccccc" stroke-width="0.2">0</text><text x="1260.80" y="1011.60" font-size="14.80" textLength="67.01" lengthAdjust="spacingAndGlyphs" fill="#cccccc" style="color:#cccccc" stroke="#cccccc" stroke-width="0.2">Ln 1, Col 1</text><text x="1349.60" y="1011.60" font-size="14.80" textLength="60.30" lengthAdjust="spacingAndGlyphs" fill="#cccccc" style="color:#cccccc" stroke="#cccccc" stroke-width="0.2">Spaces: 4</text><text x="1430.80" y="1011.60" font-size="14.80" textLength="39.00" lengthAdjust="spacingAndGlyphs" fill="#cccccc" style="color:#cccccc" stroke="#cccccc" stroke-width="0.2">UTF-8</text><text x="1490.20" y="1011.60" font-size="14.80" textLength="31.70" lengthAdjust="spacingAndGlyphs" fill="#cccccc" style="color:#cccccc" stroke="#cccccc" stroke-width="0.2">CRLF</text><text x="1565.60" y="1011.60" font-size="14.80" textLength="45.50" lengthAdjust="spacingAndGlyphs" fill="#cccccc" style="color:#cccccc" stroke="#cccccc" stroke-width="0.2">Python</text><text x="1667.20" y="1011.60" font-size="14.80" textLength="195.91" lengthAdjust="spacingAndGlyphs" fill="#cccccc" style="color:#cccccc" stroke="#cccccc" stroke-width="0.2">3.11.9 64-bit (Microsoft Store)</text><text x="677.60" y="1056.60" font-size="16.76" textLength="50.11" lengthAdjust="spacingAndGlyphs" fill="#5a5a5a" style="color:#5a5a5a" stroke="#5a5a5a" stroke-width="0.2">Search</text><text x="1841.30" y="1044.90" font-size="15.08" textLength="53.90" lengthAdjust="spacingAndGlyphs" fill="#1a1a1a" style="color:#1a1a1a" stroke="#1a1a1a" stroke-width="0.2">1:43 AM</text><text x="1827.50" y="1064.80" font-size="15.08" textLength="67.70" lengthAdjust="spacingAndGlyphs" fill="#1a1a1a" style="color:#1a1a1a" stroke="#1a1a1a" stroke-width="0.2">7/23/2025</text></svg><svg width="240" height="80" style="left:840px;top:945px;opacity:0.34" viewBox="0 0 1920 640"><g><path d="M 205 288 A 130 130 0 1 0 345 415 V 90" stroke="#ffffff" stroke-width="86" fill="none" stroke-linecap="round"/><path d="M 300 500 H 1600" stroke="#ffffff" stroke-width="90" fill="none"/><circle cx="650" cy="368" r="121" stroke="#ffffff" stroke-width="86" fill="none"/><circle cx="590" cy="112" r="56" fill="#ffffff"/><circle cx="718" cy="112" r="56" fill="#ffffff"/><circle cx="912" cy="226" r="56" fill="#ffffff"/><circle cx="1043" cy="226" r="56" fill="#ffffff"/><path d="M 985 338 L 972 480" stroke="#ffffff" stroke-width="84" stroke-linecap="round" fill="none"/><path d="M 1152 328 L 1140 480" stroke="#ffffff" stroke-width="84" stroke-linecap="round" fill="none"/><path d="M 1290 310 L 1272 480" stroke="#ffffff" stroke-width="84" stroke-linecap="round" fill="none"/><path d="M 1425 290 L 1410 480" stroke="#ffffff" stroke-width="84" stroke-linecap="round" fill="none"/><circle cx="1702" cy="420" r="128" stroke="#ffffff" stroke-width="86" fill="none"/></g></svg><svg width="1920" height="1080" style="left:0;top:0" viewBox="0 0 1920 1080"><text x="845" y="1047" font-family="Liberation Sans" font-size="33" textLength="229" lengthAdjust="spacingAndGlyphs" fill="#000000" opacity="0.04">mostaql.com</text></svg>
</body></html>
